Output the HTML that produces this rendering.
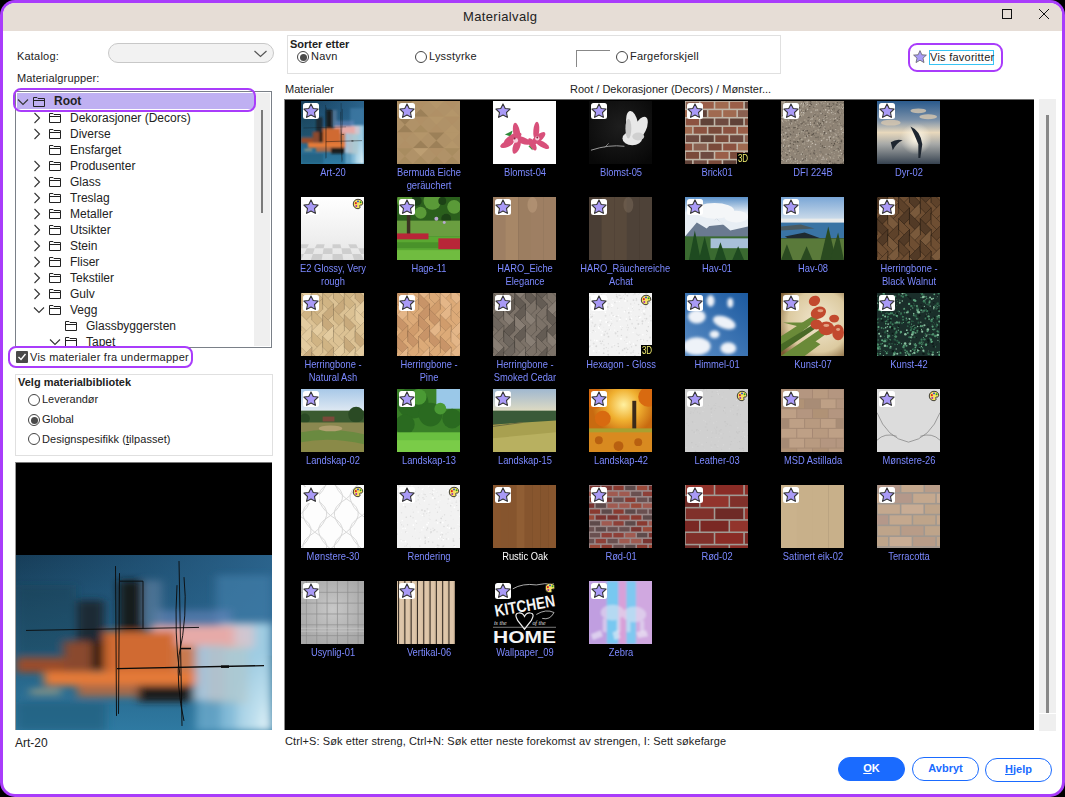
<!DOCTYPE html>
<html><head><meta charset="utf-8"><style>
*{margin:0;padding:0;box-sizing:border-box}
html,body{width:1065px;height:797px;overflow:hidden;background:#000;font-family:"Liberation Sans", sans-serif;}
.win{position:absolute;left:0;top:0;width:1065px;height:797px;background:#a93cfb;border-radius:15px;}
.inner{position:absolute;left:3px;top:3px;width:1059px;height:791px;background:#fff;border-radius:12px;overflow:hidden}
.tbar{position:absolute;left:0;top:0;width:1059px;height:28px;background:#e6ddd6}
.a{position:absolute}
.t11{font-size:11px;color:#222;white-space:nowrap;position:absolute}
.th{position:absolute;width:63px;height:63px;overflow:hidden}
.st{position:absolute;left:2px;top:2px;width:16px;height:16px}
.d3{position:absolute;right:0;bottom:0;width:11px;height:11px;background:#000;color:#f4f070;font-size:10px;line-height:11px;text-align:center;font-family:"Liberation Sans", sans-serif}
.lb{position:absolute;width:96px;text-align:center;font-size:11px;line-height:13px;white-space:nowrap;transform:scaleX(0.85)}
.ic{position:absolute}
svg{display:block}
.tt{position:absolute;font-size:12px;line-height:16px;color:#222;white-space:nowrap}
.radio{position:absolute;width:12px;height:12px;border:1px solid #444;border-radius:50%;background:#fff}
.radio.on::after{content:"";position:absolute;left:1.5px;top:1.5px;width:7px;height:7px;border-radius:50%;background:#4a4a4a}
.btn{position:absolute;height:24px;border-radius:12px;font-size:11px;font-weight:bold;text-align:center;line-height:21px}
</style></head><body>
<div class="win"></div>
<div class="inner" style="left:3px;top:3px">
  <div class="tbar"></div>
</div>
<div class="a" style="left:0;top:0;width:1065px;height:797px">
  <div class="a" style="left:463px;top:9px;font-size:13px;color:#222;letter-spacing:0.35px">Materialvalg</div>
  <div class="a" style="left:1002px;top:9px;width:10px;height:10px;border:1px solid #111"></div>
  <svg class="a" style="left:1038px;top:8px" width="12" height="12" viewBox="0 0 12 12"><path d="M1 1 L11 11 M11 1 L1 11" stroke="#111" stroke-width="1"/></svg>

  <div class="t11" style="left:17px;top:50px;font-size:11px;letter-spacing:0.2px">Katalog:</div>
  <div class="a" style="left:108px;top:43px;width:166px;height:20px;border:1px solid #c8c8c8;border-radius:10px;background:#f2f2f2"></div>
  <svg class="a" style="left:254px;top:50px" width="13" height="8" viewBox="0 0 13 8"><path d="M0.5 1 L6.5 6.5 L12.5 1" fill="none" stroke="#555" stroke-width="1.2"/></svg>
  <div class="t11" style="left:17px;top:72px;font-size:11px;letter-spacing:0.15px">Materialgrupper:</div>

  <div class="a" style="left:15px;top:91px;width:257px;height:257px;border:1px solid #7a8088;background:#fff;overflow:hidden"></div>
  <div class="a" style="left:254px;top:93px;width:16px;height:253px;background:#efefef"></div>
  <div class="a" style="left:261px;top:110px;width:2px;height:103px;background:#7a7a7a"></div>
  <div class="a" style="left:17px;top:93px;width:237px;height:16px;background:#bfb0f2"></div>
  <div class="a" style="left:13px;top:88px;width:243px;height:24px;border:2px solid #a93cfb;border-radius:8px"></div>
  <div class="ic" style="left:17px;top:98px"><svg width="12" height="8" viewBox="0 0 12 8"><path d="M1 1.5 L6 6.5 L11 1.5" fill="none" stroke="#333" stroke-width="1.1"/></svg></div>
  <div class="ic" style="left:32px;top:95px"><svg width="14" height="13" viewBox="0 0 14 13"><path d="M1.5 11.5 V2.5 H5 L6 3.5 H12.5 V11.5 Z M1.5 5.5 H12.5" fill="none" stroke="#222" stroke-width="1" stroke-linejoin="round"/></svg></div>
  <div class="tt" style="left:54px;top:93px;font-weight:bold">Root</div>
  <div class="a" style="left:17px;top:109px;width:237px;height:238px;overflow:hidden">
    <div class="a" style="left:-17px;top:-109px;width:300px;height:400px">
    <div class="ic" style="left:33px;top:112px"><svg width="8" height="12" viewBox="0 0 8 12"><path d="M1.5 1 L6.5 6 L1.5 11" fill="none" stroke="#333" stroke-width="1.1"/></svg></div><div class="ic" style="left:48px;top:111px"><svg width="14" height="13" viewBox="0 0 14 13"><path d="M1.5 11.5 V2.5 H5 L6 3.5 H12.5 V11.5 Z M1.5 5.5 H12.5" fill="none" stroke="#222" stroke-width="1" stroke-linejoin="round"/></svg></div><div class="tt" style="left:70px;top:110px">Dekorasjoner (Decors)</div><div class="ic" style="left:33px;top:128px"><svg width="8" height="12" viewBox="0 0 8 12"><path d="M1.5 1 L6.5 6 L1.5 11" fill="none" stroke="#333" stroke-width="1.1"/></svg></div><div class="ic" style="left:48px;top:127px"><svg width="14" height="13" viewBox="0 0 14 13"><path d="M1.5 11.5 V2.5 H5 L6 3.5 H12.5 V11.5 Z M1.5 5.5 H12.5" fill="none" stroke="#222" stroke-width="1" stroke-linejoin="round"/></svg></div><div class="tt" style="left:70px;top:126px">Diverse</div><div class="ic" style="left:48px;top:143px"><svg width="14" height="13" viewBox="0 0 14 13"><path d="M1.5 11.5 V2.5 H5 L6 3.5 H12.5 V11.5 Z M1.5 5.5 H12.5" fill="none" stroke="#222" stroke-width="1" stroke-linejoin="round"/></svg></div><div class="tt" style="left:70px;top:142px">Ensfarget</div><div class="ic" style="left:33px;top:160px"><svg width="8" height="12" viewBox="0 0 8 12"><path d="M1.5 1 L6.5 6 L1.5 11" fill="none" stroke="#333" stroke-width="1.1"/></svg></div><div class="ic" style="left:48px;top:159px"><svg width="14" height="13" viewBox="0 0 14 13"><path d="M1.5 11.5 V2.5 H5 L6 3.5 H12.5 V11.5 Z M1.5 5.5 H12.5" fill="none" stroke="#222" stroke-width="1" stroke-linejoin="round"/></svg></div><div class="tt" style="left:70px;top:158px">Produsenter</div><div class="ic" style="left:33px;top:176px"><svg width="8" height="12" viewBox="0 0 8 12"><path d="M1.5 1 L6.5 6 L1.5 11" fill="none" stroke="#333" stroke-width="1.1"/></svg></div><div class="ic" style="left:48px;top:175px"><svg width="14" height="13" viewBox="0 0 14 13"><path d="M1.5 11.5 V2.5 H5 L6 3.5 H12.5 V11.5 Z M1.5 5.5 H12.5" fill="none" stroke="#222" stroke-width="1" stroke-linejoin="round"/></svg></div><div class="tt" style="left:70px;top:174px">Glass</div><div class="ic" style="left:33px;top:192px"><svg width="8" height="12" viewBox="0 0 8 12"><path d="M1.5 1 L6.5 6 L1.5 11" fill="none" stroke="#333" stroke-width="1.1"/></svg></div><div class="ic" style="left:48px;top:191px"><svg width="14" height="13" viewBox="0 0 14 13"><path d="M1.5 11.5 V2.5 H5 L6 3.5 H12.5 V11.5 Z M1.5 5.5 H12.5" fill="none" stroke="#222" stroke-width="1" stroke-linejoin="round"/></svg></div><div class="tt" style="left:70px;top:190px">Treslag</div><div class="ic" style="left:33px;top:208px"><svg width="8" height="12" viewBox="0 0 8 12"><path d="M1.5 1 L6.5 6 L1.5 11" fill="none" stroke="#333" stroke-width="1.1"/></svg></div><div class="ic" style="left:48px;top:207px"><svg width="14" height="13" viewBox="0 0 14 13"><path d="M1.5 11.5 V2.5 H5 L6 3.5 H12.5 V11.5 Z M1.5 5.5 H12.5" fill="none" stroke="#222" stroke-width="1" stroke-linejoin="round"/></svg></div><div class="tt" style="left:70px;top:206px">Metaller</div><div class="ic" style="left:33px;top:224px"><svg width="8" height="12" viewBox="0 0 8 12"><path d="M1.5 1 L6.5 6 L1.5 11" fill="none" stroke="#333" stroke-width="1.1"/></svg></div><div class="ic" style="left:48px;top:223px"><svg width="14" height="13" viewBox="0 0 14 13"><path d="M1.5 11.5 V2.5 H5 L6 3.5 H12.5 V11.5 Z M1.5 5.5 H12.5" fill="none" stroke="#222" stroke-width="1" stroke-linejoin="round"/></svg></div><div class="tt" style="left:70px;top:222px">Utsikter</div><div class="ic" style="left:33px;top:240px"><svg width="8" height="12" viewBox="0 0 8 12"><path d="M1.5 1 L6.5 6 L1.5 11" fill="none" stroke="#333" stroke-width="1.1"/></svg></div><div class="ic" style="left:48px;top:239px"><svg width="14" height="13" viewBox="0 0 14 13"><path d="M1.5 11.5 V2.5 H5 L6 3.5 H12.5 V11.5 Z M1.5 5.5 H12.5" fill="none" stroke="#222" stroke-width="1" stroke-linejoin="round"/></svg></div><div class="tt" style="left:70px;top:238px">Stein</div><div class="ic" style="left:33px;top:256px"><svg width="8" height="12" viewBox="0 0 8 12"><path d="M1.5 1 L6.5 6 L1.5 11" fill="none" stroke="#333" stroke-width="1.1"/></svg></div><div class="ic" style="left:48px;top:255px"><svg width="14" height="13" viewBox="0 0 14 13"><path d="M1.5 11.5 V2.5 H5 L6 3.5 H12.5 V11.5 Z M1.5 5.5 H12.5" fill="none" stroke="#222" stroke-width="1" stroke-linejoin="round"/></svg></div><div class="tt" style="left:70px;top:254px">Fliser</div><div class="ic" style="left:33px;top:272px"><svg width="8" height="12" viewBox="0 0 8 12"><path d="M1.5 1 L6.5 6 L1.5 11" fill="none" stroke="#333" stroke-width="1.1"/></svg></div><div class="ic" style="left:48px;top:271px"><svg width="14" height="13" viewBox="0 0 14 13"><path d="M1.5 11.5 V2.5 H5 L6 3.5 H12.5 V11.5 Z M1.5 5.5 H12.5" fill="none" stroke="#222" stroke-width="1" stroke-linejoin="round"/></svg></div><div class="tt" style="left:70px;top:270px">Tekstiler</div><div class="ic" style="left:33px;top:288px"><svg width="8" height="12" viewBox="0 0 8 12"><path d="M1.5 1 L6.5 6 L1.5 11" fill="none" stroke="#333" stroke-width="1.1"/></svg></div><div class="ic" style="left:48px;top:287px"><svg width="14" height="13" viewBox="0 0 14 13"><path d="M1.5 11.5 V2.5 H5 L6 3.5 H12.5 V11.5 Z M1.5 5.5 H12.5" fill="none" stroke="#222" stroke-width="1" stroke-linejoin="round"/></svg></div><div class="tt" style="left:70px;top:286px">Gulv</div><div class="ic" style="left:33px;top:306px"><svg width="12" height="8" viewBox="0 0 12 8"><path d="M1 1.5 L6 6.5 L11 1.5" fill="none" stroke="#333" stroke-width="1.1"/></svg></div><div class="ic" style="left:48px;top:303px"><svg width="14" height="13" viewBox="0 0 14 13"><path d="M1.5 11.5 V2.5 H5 L6 3.5 H12.5 V11.5 Z M1.5 5.5 H12.5" fill="none" stroke="#222" stroke-width="1" stroke-linejoin="round"/></svg></div><div class="tt" style="left:70px;top:302px">Vegg</div><div class="ic" style="left:64px;top:319px"><svg width="14" height="13" viewBox="0 0 14 13"><path d="M1.5 11.5 V2.5 H5 L6 3.5 H12.5 V11.5 Z M1.5 5.5 H12.5" fill="none" stroke="#222" stroke-width="1" stroke-linejoin="round"/></svg></div><div class="tt" style="left:86px;top:318px">Glassbyggersten</div><div class="ic" style="left:49px;top:338px"><svg width="12" height="8" viewBox="0 0 12 8"><path d="M1 1.5 L6 6.5 L11 1.5" fill="none" stroke="#333" stroke-width="1.1"/></svg></div><div class="ic" style="left:64px;top:335px"><svg width="14" height="13" viewBox="0 0 14 13"><path d="M1.5 11.5 V2.5 H5 L6 3.5 H12.5 V11.5 Z M1.5 5.5 H12.5" fill="none" stroke="#222" stroke-width="1" stroke-linejoin="round"/></svg></div><div class="tt" style="left:86px;top:334px">Tapet</div>
    </div>
  </div>

  <div class="a" style="left:16px;top:351px;width:12px;height:12px;background:#4a4a4a;border-radius:1px"></div>
  <svg class="a" style="left:17px;top:352px" width="10" height="10" viewBox="0 0 10 10"><path d="M1.5 5 L4 7.5 L8.5 2" fill="none" stroke="#fff" stroke-width="1.4"/></svg>
  <div class="tt" style="left:30px;top:349px;font-size:11px;letter-spacing:0.25px">Vis materialer fra undermapper</div>
  <div class="a" style="left:8px;top:346px;width:185px;height:22px;border:2px solid #a93cfb;border-radius:8px"></div>

  <div class="a" style="left:15px;top:374px;width:258px;height:82px;border:1px solid #e0e0e0"></div>
  <div class="a" style="left:18px;top:376px;font-size:11px;font-weight:bold;color:#222">Velg materialbibliotek</div>
  <div class="radio" style="left:28px;top:394px"></div>
  <div class="tt" style="left:42px;top:391px;font-size:11px">Leverandør</div>
  <div class="radio on" style="left:28px;top:414px"></div>
  <div class="tt" style="left:42px;top:411px;font-size:11px">Global</div>
  <div class="radio" style="left:28px;top:433px"></div>
  <div class="tt" style="left:42px;top:431px;font-size:11px;letter-spacing:0.05px">Designspesifikk (<u>t</u>ilpasset)</div>

  <div class="a" style="left:15px;top:462px;width:257px;height:268px;background:#000;border-top:1px solid #777;border-left:1px solid #999;overflow:hidden">
    <div class="a" style="left:0px;top:92px;width:256px;height:176px"><svg width="256" height="176" viewBox="0 0 256 175" preserveAspectRatio="none"><defs><filter id="blpv" x="0" y="0" width="256" height="175" filterUnits="userSpaceOnUse"><feGaussianBlur stdDeviation="5 3.5"/></filter>
<linearGradient id="bgpv" x1="0" y1="0" x2="0" y2="1"><stop offset="0" stop-color="#173d58"/><stop offset="0.35" stop-color="#1f5272"/><stop offset="1" stop-color="#2f7aa2"/></linearGradient>
<linearGradient id="bhpv" x1="0" y1="0" x2="1" y2="0"><stop offset="0" stop-color="#2a6a98" stop-opacity="0"/><stop offset="1" stop-color="#2f6c98" stop-opacity="0.8"/></linearGradient>
<radialGradient id="lbpv" cx="1" cy="1" r="0.75"><stop offset="0" stop-color="#eef8fc"/><stop offset="0.45" stop-color="#bfe0ee"/><stop offset="1" stop-color="#9fcce2"/></radialGradient></defs><rect width="256" height="175" fill="url(#bgpv)"/>
<rect width="256" height="100" fill="url(#bhpv)"/>
<g filter="url(#blpv)">
<rect x="200" y="20" width="56" height="50" fill="#4482ae" opacity="0.6"/>
<rect x="140" y="55" width="75" height="17" fill="#6f88c0" opacity="0.55"/>
<rect x="126" y="25" width="20" height="45" fill="#7a90b0" opacity="0.45"/>
<rect x="0" y="30" width="60" height="70" fill="#183e50" opacity="0.4"/>
<rect x="205" y="68" width="51" height="107" fill="url(#lbpv)"/>
<rect x="135" y="70" width="85" height="22" fill="#e6aaa8"/>
<rect x="218" y="70" width="20" height="22" fill="#dcc4cc" opacity="0.8"/>
<rect x="178" y="90" width="32" height="55" fill="#a6c2d8"/>
<rect x="180" y="145" width="40" height="30" fill="#78b4d4" opacity="0.7"/>
<rect x="192" y="88" width="40" height="60" fill="#d0c0a8" opacity="0.25"/>
<rect x="61" y="45" width="27" height="70" fill="#1a2a34"/>
<rect x="103" y="25" width="24" height="51" fill="#121a1e"/>
<rect x="0" y="102" width="50" height="15" fill="#9a4c2a"/>
<rect x="48" y="86" width="28" height="30" fill="#8a4a2e"/>
<rect x="88" y="76" width="72" height="42" fill="#d06a30"/><rect x="158" y="90" width="22" height="28" fill="#c87a50"/>
<rect x="76" y="86" width="12" height="28" fill="#1a1410"/>
<rect x="28" y="116" width="152" height="14" fill="#e57a38"/>
<rect x="61" y="129" width="117" height="12" fill="#a86a48"/>
<rect x="122" y="130" width="56" height="16" fill="#1a1a1a"/>
<rect x="14" y="134" width="31" height="4" fill="#b8a880"/>
<rect x="0" y="146" width="90" height="29" fill="#1f5a78" opacity="0.6"/>
</g>
<g stroke="#0a0a0a" fill="none" stroke-width="0.9">
<path d="M99.5 11 L100.5 160 M103.5 18 L102.5 158"/>
<path d="M163 6 L166 170 M168 22 Q172 60 163 100 Q160 130 168 165 M161 30 Q158 80 164 120"/>
<path d="M10 75 L183 72"/>
<path d="M101 113 L248 110" stroke-width="1.4"/>
<path d="M205 111 L213 111" stroke-width="2.5"/>
<path d="M104 26 L127 26 L127 73"/>
<path d="M165 93 L175 93" stroke-width="1.5"/>
</g></svg></div>
  </div>
  <div class="tt" style="left:15px;top:735px">Art-20</div>

  <div class="a" style="left:287px;top:35px;width:494px;height:39px;border:1px solid #e0e0e0"></div>
  <div class="a" style="left:290px;top:38px;font-size:11px;font-weight:bold;color:#222">Sorter etter</div>
  <div class="radio on" style="left:297px;top:51px"></div>
  <div class="tt" style="left:311px;top:48px;font-size:11px;letter-spacing:0.2px">Navn</div>
  <div class="radio" style="left:415px;top:51px"></div>
  <div class="tt" style="left:429px;top:48px;font-size:11px;letter-spacing:0.2px">Lysstyrke</div>
  <div class="a" style="left:576px;top:50px;width:34px;height:17px;border-top:1px solid #888;border-left:1px solid #888"></div>
  <div class="radio" style="left:616px;top:51px"></div>
  <div class="tt" style="left:630px;top:48px;font-size:11px;letter-spacing:0.2px">Fargeforskjell</div>

  <svg class="a" style="left:912px;top:49px" width="16" height="16" viewBox="0 0 16 16"><path d="M8 1.6 L9.9 5.8 L14.4 6.1 L11 9.1 L12 13.6 L8 11.2 L4 13.6 L5 9.1 L1.6 6.1 L6.1 5.8 Z" fill="#a99cf6" stroke="#555" stroke-width="0.7" stroke-linejoin="round"/></svg>
  <div class="a" style="left:929px;top:50px;width:65px;height:15px;border:1px solid #38c4f4"></div>
  <div class="tt" style="left:930px;top:49px;font-size:11px;letter-spacing:0.25px">Vis favoritter</div>
  <div class="a" style="left:908px;top:43px;width:95px;height:29px;border:2px solid #a93cfb;border-radius:9px"></div>

  <div class="tt" style="left:285px;top:81px;font-size:11px">Materialer</div>
  <div class="tt" style="left:570px;top:81px;font-size:11px">Root / Dekorasjoner (Decors) / Mønster...</div>

  <div class="a" style="left:284px;top:99px;width:750px;height:631px;background:#000;border-top:1px solid #707070;border-left:1px solid #8a8a8a;overflow:hidden">
    <div class="a" style="left:-285px;top:-100px;width:1065px;height:797px">
    <div class="th" style="left:301px;top:101px"><svg width="63" height="63" viewBox="0 0 256 175" preserveAspectRatio="none"><defs><filter id="bl0" x="0" y="0" width="256" height="175" filterUnits="userSpaceOnUse"><feGaussianBlur stdDeviation="5 3.5"/></filter>
<linearGradient id="bg0" x1="0" y1="0" x2="0" y2="1"><stop offset="0" stop-color="#173d58"/><stop offset="0.35" stop-color="#1f5272"/><stop offset="1" stop-color="#2f7aa2"/></linearGradient>
<linearGradient id="bh0" x1="0" y1="0" x2="1" y2="0"><stop offset="0" stop-color="#2a6a98" stop-opacity="0"/><stop offset="1" stop-color="#2f6c98" stop-opacity="0.8"/></linearGradient>
<radialGradient id="lb0" cx="1" cy="1" r="0.75"><stop offset="0" stop-color="#eef8fc"/><stop offset="0.45" stop-color="#bfe0ee"/><stop offset="1" stop-color="#9fcce2"/></radialGradient></defs><rect width="256" height="175" fill="url(#bg0)"/>
<rect width="256" height="100" fill="url(#bh0)"/>
<g filter="url(#bl0)">
<rect x="200" y="20" width="56" height="50" fill="#4482ae" opacity="0.6"/>
<rect x="140" y="55" width="75" height="17" fill="#6f88c0" opacity="0.55"/>
<rect x="126" y="25" width="20" height="45" fill="#7a90b0" opacity="0.45"/>
<rect x="0" y="30" width="60" height="70" fill="#183e50" opacity="0.4"/>
<rect x="205" y="68" width="51" height="107" fill="url(#lb0)"/>
<rect x="135" y="70" width="85" height="22" fill="#e6aaa8"/>
<rect x="218" y="70" width="20" height="22" fill="#dcc4cc" opacity="0.8"/>
<rect x="178" y="90" width="32" height="55" fill="#a6c2d8"/>
<rect x="180" y="145" width="40" height="30" fill="#78b4d4" opacity="0.7"/>
<rect x="192" y="88" width="40" height="60" fill="#d0c0a8" opacity="0.25"/>
<rect x="61" y="45" width="27" height="70" fill="#1a2a34"/>
<rect x="103" y="25" width="24" height="51" fill="#121a1e"/>
<rect x="0" y="102" width="50" height="15" fill="#9a4c2a"/>
<rect x="48" y="86" width="28" height="30" fill="#8a4a2e"/>
<rect x="88" y="76" width="72" height="42" fill="#d06a30"/><rect x="158" y="90" width="22" height="28" fill="#c87a50"/>
<rect x="76" y="86" width="12" height="28" fill="#1a1410"/>
<rect x="28" y="116" width="152" height="14" fill="#e57a38"/>
<rect x="61" y="129" width="117" height="12" fill="#a86a48"/>
<rect x="122" y="130" width="56" height="16" fill="#1a1a1a"/>
<rect x="14" y="134" width="31" height="4" fill="#b8a880"/>
<rect x="0" y="146" width="90" height="29" fill="#1f5a78" opacity="0.6"/>
</g>
<g stroke="#0a0a0a" fill="none" stroke-width="0.9">
<path d="M99.5 11 L100.5 160 M103.5 18 L102.5 158"/>
<path d="M163 6 L166 170 M168 22 Q172 60 163 100 Q160 130 168 165 M161 30 Q158 80 164 120"/>
<path d="M10 75 L183 72"/>
<path d="M101 113 L248 110" stroke-width="1.4"/>
<path d="M205 111 L213 111" stroke-width="2.5"/>
<path d="M104 26 L127 26 L127 73"/>
<path d="M165 93 L175 93" stroke-width="1.5"/>
</g></svg><div class="st"><svg width="16" height="16" viewBox="0 0 16 16"><rect x="0" y="0" width="16" height="16" rx="2.5" fill="#fff"/><path d="M8 0.9 L10.23 5.5 L15.1 6.05 L11.5 9.5 L12.4 14.4 L8 12.0 L3.6 14.4 L4.5 9.5 L0.9 6.05 L5.77 5.5 Z" fill="#a99af6" stroke="#333" stroke-width="1.05" stroke-linejoin="round"/></svg></div></div><div class="lb" style="left:284.5px;top:166px;color:#7b88ff">Art-20</div><div class="th" style="left:397px;top:101px"><svg width="63" height="63" viewBox="0 0 64 64" preserveAspectRatio="none"><rect width="64" height="64" fill="#b09268"/><polygon points="0,0 16,0 8,8" fill="#9c8058"/><polygon points="0,16 16,16 8,8" fill="#b09066"/><polygon points="0,16 16,16 8,24" fill="#9c8058"/><polygon points="0,32 16,32 8,24" fill="#9c8058"/><polygon points="0,32 16,32 8,40" fill="#b09066"/><polygon points="0,48 16,48 8,40" fill="#b09066"/><polygon points="0,48 16,48 8,56" fill="#a88c60"/><polygon points="0,64 16,64 8,56" fill="#a88c60"/><polygon points="16,0 32,0 24,8" fill="#b09066"/><polygon points="16,16 32,16 24,8" fill="#9c8058"/><polygon points="16,16 32,16 24,24" fill="#b09066"/><polygon points="16,32 32,32 24,24" fill="#a88c60"/><polygon points="16,32 32,32 24,40" fill="#b4966a"/><polygon points="16,48 32,48 24,40" fill="#9c8058"/><polygon points="16,48 32,48 24,56" fill="#bc9e72"/><polygon points="16,64 32,64 24,56" fill="#a88c60"/><polygon points="32,0 48,0 40,8" fill="#b4966a"/><polygon points="32,16 48,16 40,8" fill="#b09066"/><polygon points="32,16 48,16 40,24" fill="#b4966a"/><polygon points="32,32 48,32 40,24" fill="#b09066"/><polygon points="32,32 48,32 40,40" fill="#9c8058"/><polygon points="32,48 48,48 40,40" fill="#9c8058"/><polygon points="32,48 48,48 40,56" fill="#b09066"/><polygon points="32,64 48,64 40,56" fill="#a88c60"/><polygon points="48,0 64,0 56,8" fill="#b09066"/><polygon points="48,16 64,16 56,8" fill="#b4966a"/><polygon points="48,16 64,16 56,24" fill="#b09066"/><polygon points="48,32 64,32 56,24" fill="#b4966a"/><polygon points="48,32 64,32 56,40" fill="#b4966a"/><polygon points="48,48 64,48 56,40" fill="#b4966a"/><polygon points="48,48 64,48 56,56" fill="#a88c60"/><polygon points="48,64 64,64 56,56" fill="#a88c60"/></svg><div class="st"><svg width="16" height="16" viewBox="0 0 16 16"><rect x="0" y="0" width="16" height="16" rx="2.5" fill="#fff"/><path d="M8 0.9 L10.23 5.5 L15.1 6.05 L11.5 9.5 L12.4 14.4 L8 12.0 L3.6 14.4 L4.5 9.5 L0.9 6.05 L5.77 5.5 Z" fill="#a99af6" stroke="#333" stroke-width="1.05" stroke-linejoin="round"/></svg></div></div><div class="lb" style="left:380.5px;top:166px;color:#7b88ff">Bermuda Eiche<br>geräuchert</div><div class="th" style="left:493px;top:101px"><svg width="63" height="63" viewBox="0 0 64 64" preserveAspectRatio="none"><rect width="64" height="64" fill="#fff"/>
<path d="M12 34 L20 30 L18 36 Z" fill="#2f8a3a"/>
<path d="M36 46 L42 42 L40 50 Z" fill="#3a9a44"/>
<g fill="#d8507a">
<ellipse cx="20" cy="38" rx="10" ry="4" transform="rotate(-30 20 38)"/>
<ellipse cx="24" cy="32" rx="3.5" ry="10" transform="rotate(-10 24 32)"/>
<ellipse cx="30" cy="40" rx="9" ry="3.5" transform="rotate(20 30 40)"/>
<ellipse cx="24" cy="46" rx="3.5" ry="8" transform="rotate(20 24 46)"/>
<ellipse cx="14" cy="44" rx="7" ry="3" transform="rotate(-20 14 44)"/>
<ellipse cx="46" cy="38" rx="9" ry="3.5" transform="rotate(-40 46 38)"/>
<ellipse cx="44" cy="30" rx="3" ry="9" transform="rotate(5 44 30)"/>
<ellipse cx="50" cy="44" rx="8" ry="3" transform="rotate(30 50 44)"/>
<ellipse cx="40" cy="44" rx="3" ry="7" transform="rotate(-30 40 44)"/>
</g>
<g fill="#f6d0dc"><circle cx="23" cy="40" r="2.5"/><circle cx="45" cy="38" r="2.2"/></g>
<g fill="#8a2040"><circle cx="22" cy="38" r="1"/><circle cx="45" cy="37" r="1"/></g></svg><div class="st"><svg width="16" height="16" viewBox="0 0 16 16"><rect x="0" y="0" width="16" height="16" rx="2.5" fill="#fff"/><path d="M8 0.9 L10.23 5.5 L15.1 6.05 L11.5 9.5 L12.4 14.4 L8 12.0 L3.6 14.4 L4.5 9.5 L0.9 6.05 L5.77 5.5 Z" fill="#a99af6" stroke="#333" stroke-width="1.05" stroke-linejoin="round"/></svg></div></div><div class="lb" style="left:476.5px;top:166px;color:#7b88ff">Blomst-04</div><div class="th" style="left:589px;top:101px"><svg width="63" height="63" viewBox="0 0 64 64" preserveAspectRatio="none"><defs><radialGradient id="b5g" cx="0.5" cy="0.4" r="0.7"><stop offset="0" stop-color="#1e1e1e"/><stop offset="1" stop-color="#080808"/></radialGradient></defs>
<rect width="64" height="64" fill="url(#b5g)"/>
<path d="M2 50 Q20 44 36 46" stroke="#9a9a9a" stroke-width="1" fill="none"/>
<path d="M16 47 L20 43" stroke="#9a9a9a" stroke-width="0.8"/>
<g fill="#e8e8e8">
<ellipse cx="44" cy="24" rx="6" ry="14" transform="rotate(-10 44 24)"/>
<ellipse cx="52" cy="28" rx="6" ry="13" transform="rotate(25 52 28)"/>
<ellipse cx="44" cy="38" rx="10" ry="7"/>
</g>
<ellipse cx="40" cy="28" rx="3" ry="10" fill="#c8c8c8"/>
<ellipse cx="50" cy="36" rx="6" ry="4" fill="#d0d0d0"/></svg><div class="st"><svg width="16" height="16" viewBox="0 0 16 16"><rect x="0" y="0" width="16" height="16" rx="2.5" fill="#fff"/><path d="M8 0.9 L10.23 5.5 L15.1 6.05 L11.5 9.5 L12.4 14.4 L8 12.0 L3.6 14.4 L4.5 9.5 L0.9 6.05 L5.77 5.5 Z" fill="#a99af6" stroke="#333" stroke-width="1.05" stroke-linejoin="round"/></svg></div></div><div class="lb" style="left:572.5px;top:166px;color:#7b88ff">Blomst-05</div><div class="th" style="left:685px;top:101px"><svg width="63" height="63" viewBox="0 0 64 64" preserveAspectRatio="none"><rect width="64" height="64" fill="#c0b6a8"/><rect x="0.8" y="0.8" width="13.4" height="6.9" fill="#8a6050"/><rect x="15.8" y="0.8" width="13.4" height="6.9" fill="#9a5e48"/><rect x="30.8" y="0.8" width="13.4" height="6.9" fill="#a06a50"/><rect x="45.8" y="0.8" width="13.4" height="6.9" fill="#9a5e48"/><rect x="60.8" y="0.8" width="13.4" height="6.9" fill="#604238"/><rect x="-6.2" y="9.3" width="13.4" height="6.9" fill="#a06a50"/><rect x="8.8" y="9.3" width="13.4" height="6.9" fill="#604238"/><rect x="23.8" y="9.3" width="13.4" height="6.9" fill="#a06a50"/><rect x="38.8" y="9.3" width="13.4" height="6.9" fill="#a06a50"/><rect x="53.8" y="9.3" width="13.4" height="6.9" fill="#8a6050"/><rect x="0.8" y="17.8" width="13.4" height="6.9" fill="#8c5240"/><rect x="15.8" y="17.8" width="13.4" height="6.9" fill="#604238"/><rect x="30.8" y="17.8" width="13.4" height="6.9" fill="#6e4a40"/><rect x="45.8" y="17.8" width="13.4" height="6.9" fill="#604238"/><rect x="60.8" y="17.8" width="13.4" height="6.9" fill="#7a4a3a"/><rect x="-6.2" y="26.3" width="13.4" height="6.9" fill="#a06a50"/><rect x="8.8" y="26.3" width="13.4" height="6.9" fill="#8c5240"/><rect x="23.8" y="26.3" width="13.4" height="6.9" fill="#7a4a3a"/><rect x="38.8" y="26.3" width="13.4" height="6.9" fill="#8c5240"/><rect x="53.8" y="26.3" width="13.4" height="6.9" fill="#9a5e48"/><rect x="0.8" y="34.8" width="13.4" height="6.9" fill="#6e4a40"/><rect x="15.8" y="34.8" width="13.4" height="6.9" fill="#604238"/><rect x="30.8" y="34.8" width="13.4" height="6.9" fill="#7a4a3a"/><rect x="45.8" y="34.8" width="13.4" height="6.9" fill="#6e4a40"/><rect x="60.8" y="34.8" width="13.4" height="6.9" fill="#8a6050"/><rect x="-6.2" y="43.3" width="13.4" height="6.9" fill="#8c5240"/><rect x="8.8" y="43.3" width="13.4" height="6.9" fill="#8a6050"/><rect x="23.8" y="43.3" width="13.4" height="6.9" fill="#7a4a3a"/><rect x="38.8" y="43.3" width="13.4" height="6.9" fill="#8c5240"/><rect x="53.8" y="43.3" width="13.4" height="6.9" fill="#a06a50"/><rect x="0.8" y="51.8" width="13.4" height="6.9" fill="#7a4a3a"/><rect x="15.8" y="51.8" width="13.4" height="6.9" fill="#6e4a40"/><rect x="30.8" y="51.8" width="13.4" height="6.9" fill="#9a5e48"/><rect x="45.8" y="51.8" width="13.4" height="6.9" fill="#7a4a3a"/><rect x="60.8" y="51.8" width="13.4" height="6.9" fill="#604238"/><rect x="-6.2" y="60.3" width="13.4" height="6.9" fill="#604238"/><rect x="8.8" y="60.3" width="13.4" height="6.9" fill="#6e4a40"/><rect x="23.8" y="60.3" width="13.4" height="6.9" fill="#7a4a3a"/><rect x="38.8" y="60.3" width="13.4" height="6.9" fill="#604238"/><rect x="53.8" y="60.3" width="13.4" height="6.9" fill="#604238"/></svg><div class="st"><svg width="16" height="16" viewBox="0 0 16 16"><rect x="0" y="0" width="16" height="16" rx="2.5" fill="#fff"/><path d="M8 0.9 L10.23 5.5 L15.1 6.05 L11.5 9.5 L12.4 14.4 L8 12.0 L3.6 14.4 L4.5 9.5 L0.9 6.05 L5.77 5.5 Z" fill="#a99af6" stroke="#333" stroke-width="1.05" stroke-linejoin="round"/></svg></div><div class="d3"><span style="display:block;width:20px;margin-left:-4.5px;text-align:center;transform:scaleX(0.8)">3D</span></div></div><div class="lb" style="left:668.5px;top:166px;color:#7b88ff">Brick01</div><div class="th" style="left:781px;top:101px"><svg width="63" height="63" viewBox="0 0 64 64" preserveAspectRatio="none"><rect width="64" height="64" fill="#8f8476"/><circle cx="20.7" cy="9.7" r="0.7" fill="#6a6258"/><circle cx="52.6" cy="6.0" r="0.6" fill="#a89a88"/><circle cx="13.7" cy="5.5" r="0.6" fill="#b0a898"/><circle cx="5.8" cy="27.2" r="0.7" fill="#6a6258"/><circle cx="60.6" cy="40.4" r="0.6" fill="#6a6258"/><circle cx="36.9" cy="25.4" r="0.8" fill="#6a6258"/><circle cx="35.6" cy="8.5" r="0.6" fill="#a89a88"/><circle cx="7.5" cy="19.7" r="0.7" fill="#b0a898"/><circle cx="6.6" cy="36.6" r="0.5" fill="#6a6258"/><circle cx="35.1" cy="4.0" r="0.4" fill="#b0a898"/><circle cx="31.8" cy="34.0" r="0.7" fill="#5a5248"/><circle cx="37.5" cy="29.0" r="0.5" fill="#b0a898"/><circle cx="44.7" cy="15.6" r="0.6" fill="#a89a88"/><circle cx="31.7" cy="22.0" r="0.6" fill="#a89a88"/><circle cx="62.7" cy="7.6" r="0.6" fill="#c8c0b4"/><circle cx="9.7" cy="31.3" r="0.4" fill="#6a6258"/><circle cx="48.9" cy="36.7" r="0.8" fill="#c8c0b4"/><circle cx="21.8" cy="22.4" r="0.6" fill="#5a5248"/><circle cx="4.4" cy="6.0" r="0.5" fill="#6a6258"/><circle cx="3.9" cy="44.9" r="0.7" fill="#5a5248"/><circle cx="18.2" cy="24.7" r="0.7" fill="#6a6258"/><circle cx="60.2" cy="22.7" r="0.6" fill="#5a5248"/><circle cx="3.8" cy="49.2" r="0.5" fill="#b0a898"/><circle cx="25.5" cy="58.7" r="0.6" fill="#b0a898"/><circle cx="28.7" cy="35.2" r="0.8" fill="#5a5248"/><circle cx="55.3" cy="17.8" r="0.6" fill="#c8c0b4"/><circle cx="43.7" cy="24.3" r="0.5" fill="#6a6258"/><circle cx="11.3" cy="14.8" r="0.5" fill="#5a5248"/><circle cx="53.2" cy="11.7" r="0.5" fill="#b0a898"/><circle cx="26.8" cy="23.6" r="0.6" fill="#b0a898"/><circle cx="44.2" cy="33.0" r="0.6" fill="#6a6258"/><circle cx="29.2" cy="55.7" r="0.8" fill="#a89a88"/><circle cx="25.1" cy="25.5" r="0.4" fill="#5a5248"/><circle cx="4.0" cy="4.3" r="0.5" fill="#b0a898"/><circle cx="7.0" cy="38.4" r="0.4" fill="#a89a88"/><circle cx="9.7" cy="6.5" r="0.5" fill="#6a6258"/><circle cx="4.5" cy="13.3" r="0.6" fill="#c8c0b4"/><circle cx="61.1" cy="38.5" r="0.6" fill="#6a6258"/><circle cx="54.3" cy="63.6" r="0.6" fill="#5a5248"/><circle cx="20.0" cy="9.2" r="0.7" fill="#c8c0b4"/><circle cx="30.6" cy="44.3" r="0.6" fill="#b0a898"/><circle cx="60.9" cy="33.8" r="0.5" fill="#a89a88"/><circle cx="58.5" cy="48.5" r="0.5" fill="#6a6258"/><circle cx="44.6" cy="16.7" r="0.5" fill="#b0a898"/><circle cx="22.8" cy="14.3" r="0.6" fill="#a89a88"/><circle cx="21.1" cy="14.3" r="0.7" fill="#b0a898"/><circle cx="51.6" cy="52.4" r="0.7" fill="#b0a898"/><circle cx="12.8" cy="31.5" r="0.7" fill="#6a6258"/><circle cx="50.6" cy="30.2" r="0.5" fill="#a89a88"/><circle cx="61.2" cy="28.6" r="0.8" fill="#c8c0b4"/><circle cx="61.1" cy="23.3" r="0.5" fill="#b0a898"/><circle cx="30.1" cy="21.6" r="0.6" fill="#a89a88"/><circle cx="53.8" cy="30.7" r="0.7" fill="#6a6258"/><circle cx="53.4" cy="7.7" r="0.6" fill="#b0a898"/><circle cx="30.6" cy="11.4" r="0.7" fill="#c8c0b4"/><circle cx="5.6" cy="60.6" r="0.7" fill="#5a5248"/><circle cx="25.7" cy="60.6" r="0.7" fill="#b0a898"/><circle cx="63.6" cy="1.8" r="0.6" fill="#5a5248"/><circle cx="51.6" cy="9.4" r="0.7" fill="#5a5248"/><circle cx="42.1" cy="22.4" r="0.6" fill="#b0a898"/><circle cx="1.4" cy="51.2" r="0.7" fill="#6a6258"/><circle cx="33.7" cy="59.8" r="0.6" fill="#b0a898"/><circle cx="52.9" cy="13.5" r="0.5" fill="#c8c0b4"/><circle cx="32.1" cy="48.9" r="0.5" fill="#a89a88"/><circle cx="26.8" cy="8.4" r="0.8" fill="#c8c0b4"/><circle cx="57.5" cy="42.4" r="0.7" fill="#a89a88"/><circle cx="26.9" cy="58.7" r="0.6" fill="#a89a88"/><circle cx="9.7" cy="32.7" r="0.7" fill="#b0a898"/><circle cx="38.9" cy="49.7" r="0.5" fill="#b0a898"/><circle cx="30.3" cy="46.4" r="0.6" fill="#c8c0b4"/><circle cx="43.7" cy="34.0" r="0.6" fill="#6a6258"/><circle cx="56.5" cy="3.6" r="0.5" fill="#6a6258"/><circle cx="49.4" cy="32.5" r="0.6" fill="#6a6258"/><circle cx="28.4" cy="39.2" r="0.6" fill="#a89a88"/><circle cx="12.8" cy="17.7" r="0.6" fill="#5a5248"/><circle cx="32.5" cy="15.8" r="0.6" fill="#c8c0b4"/><circle cx="59.1" cy="57.1" r="0.5" fill="#5a5248"/><circle cx="8.8" cy="7.8" r="0.6" fill="#6a6258"/><circle cx="43.0" cy="27.4" r="0.5" fill="#c8c0b4"/><circle cx="50.2" cy="57.4" r="0.5" fill="#c8c0b4"/><circle cx="9.2" cy="56.5" r="0.8" fill="#b0a898"/><circle cx="47.8" cy="6.0" r="0.8" fill="#b0a898"/><circle cx="63.4" cy="53.3" r="0.5" fill="#5a5248"/><circle cx="63.6" cy="25.8" r="0.6" fill="#c8c0b4"/><circle cx="20.4" cy="46.2" r="0.4" fill="#a89a88"/><circle cx="29.4" cy="45.0" r="0.6" fill="#a89a88"/><circle cx="39.9" cy="32.8" r="0.4" fill="#b0a898"/><circle cx="62.2" cy="6.7" r="0.5" fill="#6a6258"/><circle cx="58.0" cy="11.6" r="0.7" fill="#5a5248"/><circle cx="54.4" cy="43.3" r="0.8" fill="#5a5248"/><circle cx="9.6" cy="58.8" r="0.6" fill="#c8c0b4"/><circle cx="5.7" cy="3.7" r="0.7" fill="#5a5248"/><circle cx="57.3" cy="17.2" r="0.4" fill="#6a6258"/><circle cx="51.3" cy="5.4" r="0.7" fill="#6a6258"/><circle cx="16.9" cy="7.8" r="0.4" fill="#a89a88"/><circle cx="26.7" cy="58.6" r="0.6" fill="#6a6258"/><circle cx="33.7" cy="15.3" r="0.4" fill="#b0a898"/><circle cx="16.8" cy="11.6" r="0.8" fill="#c8c0b4"/><circle cx="34.0" cy="13.2" r="0.6" fill="#b0a898"/><circle cx="17.3" cy="51.4" r="0.8" fill="#6a6258"/><circle cx="1.0" cy="46.9" r="0.6" fill="#b0a898"/><circle cx="32.9" cy="15.7" r="0.6" fill="#5a5248"/><circle cx="42.0" cy="34.9" r="0.8" fill="#a89a88"/><circle cx="19.7" cy="13.8" r="0.5" fill="#b0a898"/><circle cx="53.3" cy="45.2" r="0.7" fill="#5a5248"/><circle cx="63.3" cy="62.8" r="0.7" fill="#6a6258"/><circle cx="4.5" cy="47.4" r="0.5" fill="#b0a898"/><circle cx="3.5" cy="42.6" r="0.6" fill="#a89a88"/><circle cx="42.9" cy="18.0" r="0.5" fill="#c8c0b4"/><circle cx="2.9" cy="11.9" r="0.5" fill="#6a6258"/><circle cx="16.8" cy="61.6" r="0.8" fill="#a89a88"/><circle cx="20.7" cy="2.2" r="0.8" fill="#b0a898"/><circle cx="22.8" cy="0.1" r="0.6" fill="#5a5248"/><circle cx="17.9" cy="42.0" r="0.5" fill="#6a6258"/><circle cx="5.8" cy="52.3" r="0.5" fill="#a89a88"/><circle cx="2.7" cy="1.4" r="0.5" fill="#b0a898"/><circle cx="5.4" cy="61.3" r="0.7" fill="#b0a898"/><circle cx="42.1" cy="45.8" r="0.8" fill="#5a5248"/><circle cx="48.9" cy="46.1" r="0.6" fill="#c8c0b4"/><circle cx="46.3" cy="41.2" r="0.4" fill="#a89a88"/><circle cx="40.1" cy="47.0" r="0.7" fill="#b0a898"/><circle cx="58.2" cy="48.2" r="0.6" fill="#6a6258"/><circle cx="52.9" cy="37.4" r="0.8" fill="#b0a898"/><circle cx="5.4" cy="2.7" r="0.7" fill="#6a6258"/><circle cx="24.1" cy="28.9" r="0.4" fill="#6a6258"/><circle cx="40.1" cy="43.6" r="0.6" fill="#6a6258"/><circle cx="29.2" cy="4.5" r="0.8" fill="#a89a88"/><circle cx="5.9" cy="33.7" r="0.7" fill="#5a5248"/><circle cx="16.1" cy="4.8" r="0.5" fill="#b0a898"/><circle cx="14.8" cy="41.6" r="0.6" fill="#5a5248"/><circle cx="4.9" cy="58.3" r="0.5" fill="#6a6258"/><circle cx="39.5" cy="41.1" r="0.4" fill="#b0a898"/><circle cx="21.2" cy="41.7" r="0.7" fill="#a89a88"/><circle cx="36.3" cy="0.8" r="0.4" fill="#c8c0b4"/><circle cx="62.2" cy="6.4" r="0.5" fill="#5a5248"/><circle cx="18.6" cy="33.1" r="0.6" fill="#5a5248"/><circle cx="49.1" cy="63.6" r="0.6" fill="#c8c0b4"/><circle cx="62.6" cy="59.9" r="0.4" fill="#5a5248"/><circle cx="4.9" cy="32.4" r="0.8" fill="#c8c0b4"/><circle cx="24.8" cy="58.7" r="0.8" fill="#6a6258"/><circle cx="37.2" cy="9.1" r="0.6" fill="#c8c0b4"/><circle cx="8.5" cy="52.5" r="0.6" fill="#6a6258"/><circle cx="45.0" cy="14.8" r="0.8" fill="#5a5248"/><circle cx="25.2" cy="10.2" r="0.8" fill="#5a5248"/><circle cx="25.9" cy="46.5" r="0.6" fill="#5a5248"/><circle cx="20.2" cy="53.8" r="0.4" fill="#c8c0b4"/><circle cx="53.7" cy="7.7" r="0.8" fill="#6a6258"/><circle cx="57.7" cy="18.5" r="0.5" fill="#5a5248"/><circle cx="25.0" cy="55.7" r="0.4" fill="#5a5248"/><circle cx="48.4" cy="54.7" r="0.5" fill="#6a6258"/><circle cx="53.4" cy="18.3" r="0.8" fill="#b0a898"/><circle cx="62.1" cy="27.9" r="0.5" fill="#c8c0b4"/><circle cx="50.2" cy="27.4" r="0.4" fill="#5a5248"/><circle cx="58.5" cy="60.2" r="0.6" fill="#6a6258"/><circle cx="3.2" cy="46.9" r="0.6" fill="#b0a898"/><circle cx="41.2" cy="18.3" r="0.4" fill="#a89a88"/><circle cx="8.1" cy="30.2" r="0.5" fill="#c8c0b4"/><circle cx="16.4" cy="47.3" r="0.7" fill="#5a5248"/><circle cx="42.0" cy="19.3" r="0.6" fill="#5a5248"/><circle cx="7.7" cy="41.2" r="0.4" fill="#a89a88"/><circle cx="58.0" cy="31.8" r="0.5" fill="#c8c0b4"/><circle cx="63.8" cy="28.8" r="0.5" fill="#b0a898"/><circle cx="15.6" cy="11.2" r="0.6" fill="#c8c0b4"/><circle cx="15.3" cy="16.5" r="0.6" fill="#6a6258"/><circle cx="48.0" cy="26.4" r="0.6" fill="#a89a88"/><circle cx="13.4" cy="17.3" r="0.7" fill="#5a5248"/><circle cx="17.8" cy="61.9" r="0.5" fill="#a89a88"/><circle cx="33.9" cy="50.6" r="0.7" fill="#6a6258"/><circle cx="17.3" cy="15.9" r="0.6" fill="#5a5248"/><circle cx="27.6" cy="20.0" r="0.7" fill="#6a6258"/><circle cx="8.1" cy="27.2" r="0.7" fill="#5a5248"/><circle cx="62.0" cy="31.3" r="0.4" fill="#a89a88"/><circle cx="54.7" cy="62.2" r="0.5" fill="#6a6258"/><circle cx="14.3" cy="9.7" r="0.8" fill="#6a6258"/><circle cx="60.3" cy="46.2" r="0.7" fill="#5a5248"/><circle cx="5.4" cy="49.7" r="0.4" fill="#b0a898"/><circle cx="14.9" cy="58.9" r="0.7" fill="#c8c0b4"/><circle cx="61.6" cy="40.1" r="0.6" fill="#5a5248"/><circle cx="44.7" cy="7.2" r="0.4" fill="#a89a88"/><circle cx="60.4" cy="12.3" r="0.5" fill="#a89a88"/><circle cx="0.1" cy="34.4" r="0.8" fill="#c8c0b4"/><circle cx="61.4" cy="41.3" r="0.8" fill="#5a5248"/><circle cx="33.7" cy="35.0" r="0.4" fill="#5a5248"/><circle cx="45.1" cy="19.7" r="0.4" fill="#5a5248"/><circle cx="56.6" cy="41.4" r="0.4" fill="#b0a898"/><circle cx="42.7" cy="59.2" r="0.5" fill="#6a6258"/><circle cx="44.5" cy="46.0" r="0.5" fill="#5a5248"/><circle cx="12.7" cy="51.0" r="0.7" fill="#a89a88"/><circle cx="4.3" cy="31.7" r="0.5" fill="#b0a898"/><circle cx="14.8" cy="14.2" r="0.7" fill="#c8c0b4"/><circle cx="7.0" cy="39.9" r="0.6" fill="#b0a898"/><circle cx="31.0" cy="58.3" r="0.4" fill="#a89a88"/><circle cx="9.4" cy="25.2" r="0.5" fill="#a89a88"/><circle cx="9.1" cy="3.3" r="0.4" fill="#5a5248"/><circle cx="28.8" cy="45.6" r="0.5" fill="#6a6258"/><circle cx="63.8" cy="59.6" r="0.5" fill="#b0a898"/><circle cx="41.8" cy="33.6" r="0.6" fill="#c8c0b4"/><circle cx="42.5" cy="24.2" r="0.5" fill="#c8c0b4"/><circle cx="28.3" cy="7.0" r="0.4" fill="#6a6258"/><circle cx="22.5" cy="61.2" r="0.4" fill="#b0a898"/><circle cx="24.3" cy="49.2" r="0.5" fill="#5a5248"/><circle cx="5.6" cy="45.1" r="0.5" fill="#a89a88"/><circle cx="58.8" cy="12.4" r="0.5" fill="#5a5248"/><circle cx="1.9" cy="26.3" r="0.7" fill="#5a5248"/><circle cx="2.6" cy="2.2" r="0.4" fill="#6a6258"/><circle cx="16.4" cy="47.8" r="0.8" fill="#c8c0b4"/><circle cx="23.2" cy="21.4" r="0.8" fill="#6a6258"/><circle cx="16.8" cy="45.9" r="0.5" fill="#c8c0b4"/><circle cx="19.0" cy="46.2" r="0.6" fill="#6a6258"/><circle cx="1.6" cy="15.0" r="0.6" fill="#5a5248"/><circle cx="61.1" cy="24.7" r="0.5" fill="#5a5248"/><circle cx="52.1" cy="8.5" r="0.6" fill="#6a6258"/><circle cx="51.4" cy="47.3" r="0.7" fill="#b0a898"/><circle cx="38.9" cy="21.0" r="0.5" fill="#c8c0b4"/><circle cx="50.2" cy="38.1" r="0.6" fill="#5a5248"/><circle cx="48.2" cy="15.8" r="0.4" fill="#6a6258"/><circle cx="30.8" cy="34.9" r="0.5" fill="#5a5248"/><circle cx="56.5" cy="63.2" r="0.5" fill="#6a6258"/><circle cx="13.3" cy="26.9" r="0.8" fill="#5a5248"/><circle cx="11.1" cy="8.5" r="0.6" fill="#b0a898"/><circle cx="47.9" cy="54.2" r="0.7" fill="#6a6258"/><circle cx="49.9" cy="18.8" r="0.5" fill="#c8c0b4"/><circle cx="23.9" cy="47.2" r="0.5" fill="#b0a898"/><circle cx="11.9" cy="15.1" r="0.5" fill="#a89a88"/><circle cx="12.0" cy="4.1" r="0.5" fill="#b0a898"/><circle cx="32.5" cy="14.8" r="0.7" fill="#5a5248"/><circle cx="63.4" cy="6.5" r="0.6" fill="#b0a898"/><circle cx="53.8" cy="58.5" r="0.4" fill="#c8c0b4"/><circle cx="14.9" cy="3.2" r="0.6" fill="#a89a88"/><circle cx="12.4" cy="4.8" r="0.6" fill="#b0a898"/><circle cx="28.7" cy="16.6" r="0.7" fill="#6a6258"/><circle cx="6.8" cy="38.2" r="0.6" fill="#b0a898"/><circle cx="2.4" cy="21.8" r="0.4" fill="#c8c0b4"/><circle cx="2.4" cy="46.9" r="0.8" fill="#6a6258"/><circle cx="52.4" cy="26.2" r="0.5" fill="#a89a88"/><circle cx="20.0" cy="13.0" r="0.7" fill="#a89a88"/><circle cx="30.9" cy="26.1" r="0.7" fill="#a89a88"/><circle cx="9.9" cy="34.2" r="0.7" fill="#5a5248"/><circle cx="44.5" cy="26.2" r="0.5" fill="#c8c0b4"/><circle cx="26.7" cy="3.3" r="0.7" fill="#c8c0b4"/><circle cx="26.5" cy="1.2" r="0.7" fill="#c8c0b4"/><circle cx="41.2" cy="25.0" r="0.6" fill="#6a6258"/><circle cx="27.8" cy="10.0" r="0.4" fill="#6a6258"/><circle cx="26.0" cy="56.5" r="0.6" fill="#b0a898"/><circle cx="8.3" cy="3.3" r="0.5" fill="#5a5248"/><circle cx="5.7" cy="39.8" r="0.5" fill="#a89a88"/><circle cx="11.0" cy="22.3" r="0.5" fill="#b0a898"/><circle cx="59.2" cy="7.0" r="0.6" fill="#b0a898"/><circle cx="19.3" cy="53.6" r="0.4" fill="#5a5248"/><circle cx="20.1" cy="38.9" r="0.7" fill="#6a6258"/><circle cx="57.9" cy="39.7" r="0.7" fill="#b0a898"/><circle cx="41.0" cy="54.8" r="0.6" fill="#a89a88"/><circle cx="54.2" cy="53.1" r="0.5" fill="#b0a898"/><circle cx="2.7" cy="60.1" r="0.5" fill="#c8c0b4"/><circle cx="7.9" cy="15.8" r="0.7" fill="#b0a898"/><circle cx="2.6" cy="36.0" r="0.7" fill="#6a6258"/><circle cx="42.7" cy="20.7" r="0.6" fill="#5a5248"/><circle cx="35.2" cy="40.1" r="0.5" fill="#5a5248"/><circle cx="19.7" cy="16.0" r="0.6" fill="#c8c0b4"/><circle cx="28.6" cy="28.1" r="0.4" fill="#a89a88"/><circle cx="63.1" cy="29.8" r="0.6" fill="#a89a88"/><circle cx="49.9" cy="29.3" r="0.5" fill="#5a5248"/><circle cx="25.6" cy="4.3" r="0.5" fill="#c8c0b4"/><circle cx="5.9" cy="28.3" r="0.6" fill="#6a6258"/><circle cx="2.6" cy="8.3" r="0.8" fill="#c8c0b4"/><circle cx="49.8" cy="32.7" r="0.4" fill="#a89a88"/><circle cx="57.3" cy="41.8" r="0.7" fill="#6a6258"/><circle cx="54.9" cy="63.8" r="0.7" fill="#6a6258"/><circle cx="12.4" cy="62.8" r="0.6" fill="#b0a898"/><circle cx="43.9" cy="46.1" r="0.5" fill="#c8c0b4"/><circle cx="39.1" cy="16.1" r="0.5" fill="#a89a88"/><circle cx="17.6" cy="52.2" r="0.5" fill="#a89a88"/><circle cx="61.7" cy="30.7" r="0.6" fill="#a89a88"/><circle cx="32.4" cy="20.4" r="0.4" fill="#b0a898"/><circle cx="25.8" cy="40.7" r="0.5" fill="#c8c0b4"/><circle cx="57.3" cy="10.8" r="0.7" fill="#6a6258"/><circle cx="49.2" cy="3.1" r="0.7" fill="#5a5248"/><circle cx="35.5" cy="37.1" r="0.8" fill="#6a6258"/><circle cx="16.1" cy="34.3" r="0.7" fill="#c8c0b4"/><circle cx="16.9" cy="63.4" r="0.6" fill="#c8c0b4"/><circle cx="21.2" cy="5.2" r="0.5" fill="#a89a88"/><circle cx="47.6" cy="3.1" r="0.7" fill="#c8c0b4"/><circle cx="19.8" cy="61.8" r="0.7" fill="#c8c0b4"/><circle cx="46.9" cy="47.8" r="0.5" fill="#c8c0b4"/><circle cx="39.4" cy="27.7" r="0.6" fill="#6a6258"/><circle cx="8.4" cy="14.5" r="0.7" fill="#6a6258"/><circle cx="3.5" cy="36.3" r="0.5" fill="#a89a88"/><circle cx="22.9" cy="14.4" r="0.6" fill="#a89a88"/><circle cx="8.6" cy="23.4" r="0.7" fill="#b0a898"/><circle cx="8.6" cy="59.9" r="0.5" fill="#b0a898"/><circle cx="28.9" cy="4.1" r="0.5" fill="#c8c0b4"/><circle cx="25.7" cy="16.9" r="0.4" fill="#a89a88"/><circle cx="57.1" cy="38.1" r="0.6" fill="#a89a88"/><circle cx="60.0" cy="46.9" r="0.5" fill="#6a6258"/><circle cx="2.8" cy="34.0" r="0.6" fill="#b0a898"/><circle cx="10.2" cy="58.4" r="0.4" fill="#a89a88"/><circle cx="35.3" cy="60.2" r="0.5" fill="#b0a898"/><circle cx="33.2" cy="41.1" r="0.7" fill="#5a5248"/><circle cx="52.1" cy="11.2" r="0.5" fill="#c8c0b4"/><circle cx="40.1" cy="63.6" r="0.7" fill="#5a5248"/><circle cx="45.8" cy="0.4" r="0.7" fill="#5a5248"/><circle cx="5.2" cy="42.0" r="0.5" fill="#6a6258"/><circle cx="16.7" cy="41.2" r="0.4" fill="#c8c0b4"/><circle cx="45.5" cy="17.0" r="0.6" fill="#5a5248"/><circle cx="43.9" cy="58.7" r="0.8" fill="#c8c0b4"/><circle cx="41.1" cy="61.8" r="0.5" fill="#a89a88"/><circle cx="1.0" cy="16.7" r="0.5" fill="#b0a898"/><circle cx="60.5" cy="47.8" r="0.5" fill="#5a5248"/><circle cx="21.0" cy="15.3" r="0.8" fill="#a89a88"/><circle cx="30.0" cy="53.7" r="0.7" fill="#6a6258"/><circle cx="28.0" cy="46.4" r="0.6" fill="#c8c0b4"/><circle cx="50.5" cy="25.1" r="0.6" fill="#a89a88"/><circle cx="58.3" cy="9.3" r="0.4" fill="#6a6258"/><circle cx="39.8" cy="10.4" r="0.8" fill="#6a6258"/><circle cx="2.0" cy="8.9" r="0.7" fill="#6a6258"/><circle cx="44.6" cy="47.2" r="0.4" fill="#a89a88"/><circle cx="48.8" cy="12.8" r="0.8" fill="#a89a88"/><circle cx="57.0" cy="4.2" r="0.7" fill="#5a5248"/><circle cx="6.9" cy="13.2" r="0.4" fill="#6a6258"/><circle cx="60.8" cy="58.3" r="0.7" fill="#6a6258"/><circle cx="52.8" cy="40.4" r="0.5" fill="#6a6258"/><circle cx="8.5" cy="50.7" r="0.7" fill="#c8c0b4"/><circle cx="20.4" cy="27.1" r="0.4" fill="#c8c0b4"/><circle cx="59.5" cy="3.1" r="0.7" fill="#c8c0b4"/><circle cx="49.2" cy="38.5" r="0.6" fill="#c8c0b4"/><circle cx="39.6" cy="2.0" r="0.6" fill="#5a5248"/><circle cx="33.2" cy="6.3" r="0.6" fill="#6a6258"/><circle cx="34.4" cy="13.9" r="0.7" fill="#6a6258"/><circle cx="36.8" cy="18.4" r="0.6" fill="#a89a88"/><circle cx="12.9" cy="48.8" r="0.8" fill="#6a6258"/><circle cx="22.3" cy="6.1" r="0.7" fill="#b0a898"/><circle cx="61.9" cy="37.9" r="0.8" fill="#a89a88"/><circle cx="16.7" cy="60.4" r="0.5" fill="#b0a898"/><circle cx="60.1" cy="14.8" r="0.5" fill="#6a6258"/><circle cx="31.4" cy="63.4" r="0.6" fill="#6a6258"/><circle cx="40.2" cy="22.8" r="0.6" fill="#5a5248"/><circle cx="57.1" cy="47.7" r="0.6" fill="#6a6258"/><circle cx="23.8" cy="19.4" r="0.6" fill="#a89a88"/><circle cx="32.1" cy="24.3" r="0.8" fill="#b0a898"/><circle cx="60.4" cy="8.1" r="0.6" fill="#a89a88"/><circle cx="41.4" cy="22.3" r="0.5" fill="#b0a898"/><circle cx="55.6" cy="28.8" r="0.6" fill="#c8c0b4"/><circle cx="10.9" cy="28.1" r="0.7" fill="#a89a88"/><circle cx="14.8" cy="21.4" r="0.7" fill="#b0a898"/><circle cx="32.5" cy="17.1" r="0.7" fill="#a89a88"/><circle cx="9.9" cy="10.0" r="0.5" fill="#c8c0b4"/><circle cx="38.6" cy="22.3" r="0.5" fill="#b0a898"/><circle cx="16.6" cy="61.1" r="0.8" fill="#b0a898"/><circle cx="61.6" cy="6.5" r="0.6" fill="#b0a898"/><circle cx="50.9" cy="46.9" r="0.6" fill="#b0a898"/><circle cx="7.0" cy="58.3" r="0.5" fill="#5a5248"/><circle cx="29.7" cy="0.8" r="0.7" fill="#5a5248"/><circle cx="44.4" cy="32.0" r="0.7" fill="#5a5248"/><circle cx="1.4" cy="16.5" r="0.7" fill="#6a6258"/><circle cx="47.4" cy="58.1" r="0.6" fill="#a89a88"/><circle cx="37.6" cy="41.4" r="0.7" fill="#a89a88"/><circle cx="54.6" cy="43.5" r="0.7" fill="#5a5248"/><circle cx="27.7" cy="16.6" r="0.7" fill="#5a5248"/><circle cx="15.5" cy="25.6" r="0.7" fill="#b0a898"/><circle cx="16.0" cy="27.1" r="0.6" fill="#a89a88"/><circle cx="54.9" cy="33.2" r="0.7" fill="#b0a898"/><circle cx="57.2" cy="21.0" r="0.4" fill="#5a5248"/><circle cx="58.1" cy="6.8" r="0.5" fill="#b0a898"/><circle cx="10.3" cy="50.0" r="0.8" fill="#a89a88"/><circle cx="22.3" cy="54.2" r="0.6" fill="#b0a898"/><circle cx="45.9" cy="32.8" r="0.7" fill="#c8c0b4"/><circle cx="33.4" cy="26.3" r="0.8" fill="#b0a898"/><circle cx="63.4" cy="11.8" r="0.6" fill="#6a6258"/><circle cx="46.7" cy="39.3" r="0.7" fill="#c8c0b4"/><circle cx="17.6" cy="25.6" r="0.4" fill="#5a5248"/><circle cx="58.6" cy="40.2" r="0.7" fill="#a89a88"/><circle cx="17.0" cy="14.4" r="0.7" fill="#a89a88"/><circle cx="62.2" cy="63.6" r="0.8" fill="#5a5248"/><circle cx="13.6" cy="8.3" r="0.7" fill="#b0a898"/><circle cx="30.0" cy="36.0" r="0.5" fill="#b0a898"/><circle cx="22.6" cy="40.9" r="0.7" fill="#5a5248"/><circle cx="30.0" cy="18.8" r="0.6" fill="#b0a898"/><circle cx="49.9" cy="30.0" r="0.7" fill="#b0a898"/><circle cx="17.1" cy="24.1" r="0.5" fill="#5a5248"/><circle cx="43.4" cy="30.8" r="0.7" fill="#c8c0b4"/><circle cx="22.9" cy="41.9" r="0.5" fill="#5a5248"/><circle cx="27.4" cy="40.8" r="0.7" fill="#c8c0b4"/><circle cx="9.8" cy="19.4" r="0.6" fill="#6a6258"/><circle cx="53.0" cy="58.0" r="0.7" fill="#b0a898"/><circle cx="34.0" cy="22.1" r="0.6" fill="#6a6258"/><circle cx="13.4" cy="4.6" r="0.5" fill="#a89a88"/><circle cx="6.5" cy="9.1" r="0.5" fill="#5a5248"/><circle cx="22.2" cy="9.8" r="0.8" fill="#a89a88"/><circle cx="10.7" cy="57.0" r="0.6" fill="#6a6258"/><circle cx="42.8" cy="57.2" r="0.7" fill="#c8c0b4"/><circle cx="12.6" cy="44.3" r="0.6" fill="#5a5248"/><circle cx="43.0" cy="7.5" r="0.4" fill="#5a5248"/><circle cx="15.0" cy="8.9" r="0.6" fill="#6a6258"/><circle cx="31.0" cy="57.9" r="0.7" fill="#b0a898"/><circle cx="31.9" cy="34.5" r="0.7" fill="#6a6258"/><circle cx="10.3" cy="20.5" r="0.7" fill="#5a5248"/><circle cx="42.6" cy="53.8" r="0.5" fill="#5a5248"/><circle cx="64.0" cy="43.3" r="0.5" fill="#c8c0b4"/><circle cx="40.7" cy="1.8" r="0.6" fill="#c8c0b4"/><circle cx="51.8" cy="6.0" r="0.6" fill="#b0a898"/><circle cx="2.2" cy="46.0" r="0.7" fill="#c8c0b4"/><circle cx="6.0" cy="42.2" r="0.5" fill="#a89a88"/><circle cx="35.5" cy="58.4" r="0.5" fill="#c8c0b4"/><circle cx="27.0" cy="35.5" r="0.7" fill="#c8c0b4"/><circle cx="22.7" cy="31.6" r="0.5" fill="#c8c0b4"/><circle cx="55.9" cy="22.1" r="0.5" fill="#5a5248"/><circle cx="50.7" cy="21.2" r="0.5" fill="#c8c0b4"/><circle cx="8.2" cy="62.3" r="0.4" fill="#6a6258"/><circle cx="25.5" cy="35.5" r="0.6" fill="#a89a88"/><circle cx="3.2" cy="19.2" r="0.4" fill="#b0a898"/><circle cx="52.6" cy="30.4" r="0.7" fill="#6a6258"/><circle cx="50.5" cy="58.2" r="0.6" fill="#a89a88"/><circle cx="9.4" cy="43.1" r="0.7" fill="#6a6258"/><circle cx="13.6" cy="42.7" r="0.6" fill="#b0a898"/><circle cx="6.5" cy="11.6" r="0.4" fill="#6a6258"/><circle cx="58.5" cy="42.0" r="0.5" fill="#b0a898"/><circle cx="50.3" cy="36.0" r="0.5" fill="#c8c0b4"/><circle cx="11.8" cy="2.2" r="0.4" fill="#a89a88"/><circle cx="41.1" cy="59.8" r="0.4" fill="#a89a88"/><circle cx="33.4" cy="52.8" r="0.7" fill="#5a5248"/><circle cx="36.8" cy="58.8" r="0.6" fill="#6a6258"/><circle cx="43.5" cy="38.0" r="0.8" fill="#b0a898"/><circle cx="30.4" cy="26.4" r="0.4" fill="#5a5248"/><circle cx="13.6" cy="9.7" r="0.4" fill="#6a6258"/><circle cx="0.6" cy="42.8" r="0.8" fill="#6a6258"/><circle cx="14.0" cy="7.8" r="0.6" fill="#c8c0b4"/><circle cx="46.0" cy="15.5" r="0.7" fill="#b0a898"/><circle cx="59.1" cy="23.4" r="0.7" fill="#b0a898"/><circle cx="46.7" cy="5.4" r="0.7" fill="#5a5248"/><circle cx="29.5" cy="59.7" r="0.5" fill="#6a6258"/><circle cx="45.9" cy="0.7" r="0.4" fill="#a89a88"/><circle cx="5.1" cy="19.9" r="0.7" fill="#b0a898"/><circle cx="61.3" cy="53.4" r="0.6" fill="#c8c0b4"/><circle cx="23.5" cy="36.8" r="0.6" fill="#b0a898"/><circle cx="9.3" cy="51.0" r="0.5" fill="#b0a898"/><circle cx="40.3" cy="26.7" r="0.6" fill="#5a5248"/><circle cx="60.5" cy="50.2" r="0.6" fill="#c8c0b4"/><circle cx="17.9" cy="39.8" r="0.7" fill="#a89a88"/><circle cx="21.3" cy="38.8" r="0.8" fill="#b0a898"/><circle cx="38.5" cy="19.8" r="0.6" fill="#b0a898"/><circle cx="24.1" cy="43.8" r="0.6" fill="#b0a898"/><circle cx="51.7" cy="18.1" r="0.4" fill="#c8c0b4"/><circle cx="17.2" cy="10.1" r="0.8" fill="#6a6258"/><circle cx="18.5" cy="9.0" r="0.8" fill="#a89a88"/><circle cx="9.4" cy="62.4" r="0.7" fill="#a89a88"/><circle cx="43.8" cy="58.5" r="0.5" fill="#6a6258"/><circle cx="34.6" cy="31.0" r="0.6" fill="#b0a898"/><circle cx="19.8" cy="3.7" r="0.6" fill="#b0a898"/><circle cx="59.3" cy="37.5" r="0.4" fill="#5a5248"/><circle cx="29.4" cy="5.6" r="0.7" fill="#6a6258"/><circle cx="14.9" cy="37.1" r="0.8" fill="#a89a88"/><circle cx="20.5" cy="32.4" r="0.5" fill="#b0a898"/><circle cx="12.3" cy="11.6" r="0.7" fill="#c8c0b4"/><circle cx="37.0" cy="23.0" r="0.7" fill="#b0a898"/><circle cx="15.8" cy="59.0" r="0.6" fill="#6a6258"/><circle cx="23.8" cy="29.7" r="0.4" fill="#c8c0b4"/><circle cx="38.2" cy="22.1" r="0.6" fill="#6a6258"/><circle cx="6.0" cy="13.1" r="0.7" fill="#a89a88"/><circle cx="31.1" cy="36.3" r="0.5" fill="#c8c0b4"/><circle cx="27.3" cy="60.6" r="0.7" fill="#a89a88"/><circle cx="61.7" cy="16.3" r="0.4" fill="#b0a898"/><circle cx="63.7" cy="24.2" r="0.4" fill="#6a6258"/><circle cx="35.7" cy="55.7" r="0.6" fill="#6a6258"/><circle cx="55.2" cy="40.9" r="0.8" fill="#6a6258"/><circle cx="16.5" cy="36.1" r="0.7" fill="#a89a88"/><circle cx="25.2" cy="28.7" r="0.5" fill="#b0a898"/><circle cx="63.5" cy="14.2" r="0.4" fill="#c8c0b4"/><circle cx="60.2" cy="3.8" r="0.6" fill="#6a6258"/><circle cx="53.6" cy="3.0" r="0.7" fill="#5a5248"/><circle cx="3.6" cy="9.3" r="0.7" fill="#b0a898"/><circle cx="43.3" cy="19.1" r="0.6" fill="#6a6258"/><circle cx="30.1" cy="23.8" r="0.6" fill="#c8c0b4"/><circle cx="30.8" cy="10.8" r="0.5" fill="#b0a898"/><circle cx="58.5" cy="57.1" r="0.6" fill="#b0a898"/><circle cx="51.1" cy="10.0" r="0.7" fill="#6a6258"/><circle cx="59.8" cy="55.5" r="0.8" fill="#b0a898"/><circle cx="49.8" cy="61.3" r="0.8" fill="#5a5248"/><circle cx="53.9" cy="40.2" r="0.6" fill="#c8c0b4"/><circle cx="20.6" cy="15.0" r="0.4" fill="#c8c0b4"/><circle cx="9.1" cy="14.2" r="0.4" fill="#5a5248"/><circle cx="35.4" cy="9.3" r="0.7" fill="#c8c0b4"/><circle cx="26.8" cy="15.8" r="0.4" fill="#a89a88"/><circle cx="53.7" cy="21.4" r="0.5" fill="#5a5248"/><circle cx="7.0" cy="29.2" r="0.6" fill="#b0a898"/><circle cx="62.6" cy="3.6" r="0.8" fill="#b0a898"/><circle cx="35.8" cy="53.5" r="0.4" fill="#b0a898"/><circle cx="62.1" cy="27.7" r="0.5" fill="#b0a898"/><circle cx="59.2" cy="6.2" r="0.5" fill="#b0a898"/><circle cx="3.7" cy="46.5" r="0.5" fill="#6a6258"/><circle cx="28.3" cy="32.5" r="0.6" fill="#5a5248"/><circle cx="0.1" cy="53.3" r="0.6" fill="#b0a898"/><circle cx="23.0" cy="2.6" r="0.6" fill="#c8c0b4"/><circle cx="36.6" cy="8.8" r="0.5" fill="#b0a898"/><circle cx="45.5" cy="12.6" r="0.4" fill="#6a6258"/><circle cx="56.9" cy="46.8" r="0.7" fill="#b0a898"/><circle cx="13.2" cy="39.2" r="0.7" fill="#b0a898"/><circle cx="37.3" cy="12.9" r="0.4" fill="#a89a88"/><circle cx="26.1" cy="46.2" r="0.4" fill="#c8c0b4"/><circle cx="21.5" cy="53.9" r="0.7" fill="#5a5248"/><circle cx="5.8" cy="26.2" r="0.7" fill="#b0a898"/><circle cx="55.8" cy="17.0" r="0.5" fill="#c8c0b4"/><circle cx="2.3" cy="44.9" r="0.6" fill="#6a6258"/><circle cx="22.8" cy="59.7" r="0.8" fill="#6a6258"/><circle cx="7.7" cy="45.7" r="0.7" fill="#c8c0b4"/><circle cx="49.9" cy="55.6" r="0.6" fill="#6a6258"/><circle cx="18.7" cy="6.9" r="0.7" fill="#5a5248"/><circle cx="32.9" cy="34.0" r="0.6" fill="#6a6258"/><circle cx="15.6" cy="5.7" r="0.6" fill="#b0a898"/><circle cx="6.6" cy="16.0" r="0.7" fill="#6a6258"/><circle cx="1.2" cy="59.3" r="0.7" fill="#c8c0b4"/><circle cx="1.1" cy="38.4" r="0.6" fill="#a89a88"/><circle cx="15.3" cy="28.4" r="0.5" fill="#6a6258"/><circle cx="45.9" cy="2.9" r="0.4" fill="#5a5248"/><circle cx="37.5" cy="48.7" r="0.4" fill="#6a6258"/><circle cx="26.0" cy="8.8" r="0.6" fill="#b0a898"/><circle cx="9.4" cy="36.7" r="0.7" fill="#b0a898"/><circle cx="60.7" cy="1.2" r="0.7" fill="#5a5248"/><circle cx="38.2" cy="38.6" r="0.4" fill="#6a6258"/><circle cx="49.7" cy="21.7" r="0.5" fill="#c8c0b4"/><circle cx="45.8" cy="54.0" r="0.6" fill="#c8c0b4"/><circle cx="52.2" cy="54.2" r="0.4" fill="#a89a88"/><circle cx="9.4" cy="43.5" r="0.5" fill="#5a5248"/><circle cx="42.4" cy="0.7" r="0.4" fill="#b0a898"/><circle cx="4.4" cy="27.7" r="0.6" fill="#6a6258"/><circle cx="14.4" cy="26.9" r="0.6" fill="#5a5248"/><circle cx="40.5" cy="51.8" r="0.8" fill="#6a6258"/><circle cx="2.2" cy="41.1" r="0.5" fill="#a89a88"/><circle cx="17.5" cy="34.7" r="0.8" fill="#a89a88"/><circle cx="6.4" cy="7.8" r="0.4" fill="#b0a898"/><circle cx="60.9" cy="18.4" r="0.5" fill="#b0a898"/><circle cx="7.7" cy="38.0" r="0.8" fill="#a89a88"/><circle cx="57.7" cy="5.4" r="0.6" fill="#b0a898"/><circle cx="28.2" cy="32.7" r="0.8" fill="#5a5248"/><circle cx="37.0" cy="17.5" r="0.7" fill="#a89a88"/><circle cx="18.4" cy="29.1" r="0.7" fill="#b0a898"/><circle cx="41.6" cy="12.9" r="0.7" fill="#5a5248"/><circle cx="57.1" cy="19.4" r="0.6" fill="#c8c0b4"/><circle cx="2.0" cy="21.4" r="0.5" fill="#a89a88"/><circle cx="24.5" cy="37.5" r="0.4" fill="#c8c0b4"/><circle cx="10.4" cy="60.9" r="0.5" fill="#c8c0b4"/><circle cx="31.5" cy="18.2" r="0.8" fill="#c8c0b4"/><circle cx="3.6" cy="1.4" r="0.6" fill="#a89a88"/><circle cx="55.8" cy="28.2" r="0.4" fill="#5a5248"/><circle cx="53.4" cy="22.7" r="0.7" fill="#a89a88"/><circle cx="14.4" cy="61.4" r="0.7" fill="#b0a898"/><circle cx="26.7" cy="42.8" r="0.5" fill="#b0a898"/><circle cx="39.4" cy="54.4" r="0.7" fill="#a89a88"/><circle cx="6.1" cy="54.8" r="0.8" fill="#5a5248"/><circle cx="17.2" cy="40.4" r="0.7" fill="#b0a898"/><circle cx="26.4" cy="6.6" r="0.6" fill="#a89a88"/><circle cx="37.5" cy="31.9" r="0.8" fill="#a89a88"/><circle cx="9.6" cy="54.4" r="0.5" fill="#a89a88"/><circle cx="38.9" cy="24.3" r="0.6" fill="#5a5248"/><circle cx="18.4" cy="22.6" r="0.5" fill="#a89a88"/><circle cx="35.5" cy="24.6" r="0.5" fill="#5a5248"/><circle cx="24.4" cy="19.2" r="0.6" fill="#b0a898"/><circle cx="27.9" cy="24.1" r="0.5" fill="#c8c0b4"/><circle cx="20.7" cy="54.0" r="0.7" fill="#c8c0b4"/><circle cx="13.1" cy="27.3" r="0.8" fill="#6a6258"/><circle cx="1.6" cy="16.4" r="0.8" fill="#c8c0b4"/><circle cx="58.9" cy="49.5" r="0.6" fill="#5a5248"/><circle cx="33.1" cy="33.1" r="0.7" fill="#5a5248"/><circle cx="29.7" cy="2.6" r="0.7" fill="#5a5248"/><circle cx="60.7" cy="43.3" r="0.6" fill="#6a6258"/><circle cx="26.2" cy="32.1" r="0.7" fill="#a89a88"/><circle cx="9.9" cy="12.0" r="0.6" fill="#5a5248"/><circle cx="28.2" cy="40.0" r="0.8" fill="#c8c0b4"/><circle cx="44.3" cy="47.8" r="0.4" fill="#c8c0b4"/><circle cx="20.4" cy="62.6" r="0.7" fill="#a89a88"/><circle cx="11.2" cy="42.0" r="0.5" fill="#c8c0b4"/><circle cx="52.5" cy="63.4" r="0.8" fill="#5a5248"/><circle cx="40.4" cy="33.5" r="0.7" fill="#b0a898"/><circle cx="32.3" cy="12.0" r="0.5" fill="#a89a88"/><circle cx="38.6" cy="22.6" r="0.8" fill="#6a6258"/><circle cx="44.3" cy="0.7" r="0.4" fill="#a89a88"/><circle cx="0.3" cy="19.5" r="0.7" fill="#a89a88"/><circle cx="1.0" cy="1.9" r="0.5" fill="#a89a88"/><circle cx="36.3" cy="55.8" r="0.8" fill="#a89a88"/><circle cx="63.8" cy="36.8" r="0.6" fill="#6a6258"/><circle cx="9.3" cy="33.2" r="0.6" fill="#6a6258"/><circle cx="6.4" cy="10.9" r="0.6" fill="#5a5248"/><circle cx="39.2" cy="51.6" r="0.4" fill="#6a6258"/><circle cx="43.8" cy="37.0" r="0.5" fill="#b0a898"/><circle cx="22.6" cy="10.8" r="0.5" fill="#6a6258"/><circle cx="55.0" cy="60.7" r="0.4" fill="#b0a898"/><circle cx="28.8" cy="24.7" r="0.4" fill="#5a5248"/><circle cx="37.3" cy="61.4" r="0.6" fill="#a89a88"/><circle cx="15.3" cy="14.3" r="0.5" fill="#a89a88"/><circle cx="54.7" cy="20.1" r="0.8" fill="#5a5248"/><circle cx="19.4" cy="38.6" r="0.8" fill="#5a5248"/><circle cx="62.7" cy="4.3" r="0.7" fill="#a89a88"/><circle cx="14.2" cy="19.8" r="0.8" fill="#5a5248"/><circle cx="1.4" cy="55.6" r="0.4" fill="#b0a898"/><circle cx="22.9" cy="11.9" r="0.8" fill="#c8c0b4"/><circle cx="25.3" cy="23.2" r="0.5" fill="#5a5248"/><circle cx="21.5" cy="41.7" r="0.8" fill="#5a5248"/><circle cx="52.9" cy="22.5" r="0.5" fill="#b0a898"/><circle cx="29.9" cy="22.0" r="0.6" fill="#c8c0b4"/><circle cx="42.5" cy="21.9" r="0.5" fill="#b0a898"/><circle cx="5.9" cy="17.3" r="0.7" fill="#b0a898"/><circle cx="35.5" cy="29.9" r="0.7" fill="#b0a898"/><circle cx="10.2" cy="22.6" r="0.7" fill="#5a5248"/><circle cx="40.3" cy="37.2" r="0.5" fill="#5a5248"/><circle cx="32.3" cy="14.5" r="0.6" fill="#b0a898"/><circle cx="60.3" cy="63.9" r="0.6" fill="#5a5248"/><circle cx="37.6" cy="23.6" r="0.5" fill="#a89a88"/><circle cx="32.7" cy="8.0" r="0.7" fill="#a89a88"/><circle cx="5.9" cy="54.5" r="0.7" fill="#5a5248"/><circle cx="1.8" cy="46.0" r="0.5" fill="#6a6258"/><circle cx="25.0" cy="5.5" r="0.5" fill="#b0a898"/><circle cx="20.5" cy="42.4" r="0.4" fill="#a89a88"/><circle cx="58.5" cy="51.5" r="0.7" fill="#b0a898"/><circle cx="4.2" cy="19.9" r="0.5" fill="#b0a898"/><circle cx="52.3" cy="25.5" r="0.5" fill="#5a5248"/><circle cx="49.6" cy="56.5" r="0.7" fill="#b0a898"/><circle cx="60.0" cy="11.3" r="0.5" fill="#c8c0b4"/><circle cx="57.4" cy="1.6" r="0.7" fill="#5a5248"/><circle cx="15.9" cy="54.2" r="0.5" fill="#6a6258"/><circle cx="11.6" cy="7.4" r="0.8" fill="#b0a898"/><circle cx="45.6" cy="2.6" r="0.4" fill="#b0a898"/><circle cx="27.6" cy="48.4" r="0.5" fill="#6a6258"/><circle cx="35.4" cy="40.3" r="0.8" fill="#a89a88"/><circle cx="53.7" cy="36.5" r="0.7" fill="#c8c0b4"/><circle cx="59.2" cy="42.9" r="0.6" fill="#6a6258"/><circle cx="7.2" cy="48.9" r="0.7" fill="#6a6258"/><circle cx="56.0" cy="37.4" r="0.7" fill="#b0a898"/><circle cx="43.6" cy="2.4" r="0.5" fill="#c8c0b4"/><circle cx="48.0" cy="5.5" r="0.7" fill="#5a5248"/><circle cx="63.9" cy="39.4" r="0.5" fill="#a89a88"/><circle cx="5.8" cy="60.6" r="0.6" fill="#c8c0b4"/><circle cx="44.3" cy="47.3" r="0.7" fill="#5a5248"/><circle cx="32.6" cy="43.3" r="0.5" fill="#a89a88"/><circle cx="54.2" cy="49.8" r="0.6" fill="#b0a898"/><circle cx="2.8" cy="45.0" r="0.7" fill="#c8c0b4"/><circle cx="11.2" cy="10.5" r="0.7" fill="#b0a898"/><circle cx="34.8" cy="16.0" r="0.4" fill="#c8c0b4"/><circle cx="22.2" cy="5.9" r="0.7" fill="#b0a898"/><circle cx="8.7" cy="45.2" r="0.7" fill="#b0a898"/><circle cx="45.2" cy="0.4" r="0.7" fill="#b0a898"/><circle cx="59.9" cy="22.5" r="0.5" fill="#b0a898"/><circle cx="37.6" cy="15.4" r="0.7" fill="#6a6258"/><circle cx="35.1" cy="48.7" r="0.5" fill="#b0a898"/><circle cx="38.3" cy="29.5" r="0.7" fill="#b0a898"/><circle cx="7.3" cy="18.5" r="0.5" fill="#b0a898"/><circle cx="2.8" cy="57.3" r="0.5" fill="#6a6258"/><circle cx="44.9" cy="28.7" r="0.4" fill="#c8c0b4"/><circle cx="28.5" cy="36.4" r="0.5" fill="#a89a88"/><circle cx="4.6" cy="0.7" r="0.8" fill="#5a5248"/><circle cx="5.4" cy="45.9" r="0.8" fill="#a89a88"/><circle cx="16.9" cy="41.3" r="0.8" fill="#5a5248"/><circle cx="12.1" cy="34.8" r="0.4" fill="#6a6258"/><circle cx="41.2" cy="40.2" r="0.8" fill="#c8c0b4"/><circle cx="41.8" cy="5.0" r="0.7" fill="#6a6258"/><circle cx="49.6" cy="53.7" r="0.5" fill="#b0a898"/><circle cx="61.6" cy="33.6" r="0.8" fill="#b0a898"/><circle cx="6.5" cy="46.0" r="0.5" fill="#a89a88"/><circle cx="20.9" cy="11.8" r="0.7" fill="#c8c0b4"/><circle cx="14.7" cy="8.7" r="0.8" fill="#c8c0b4"/><circle cx="15.3" cy="2.6" r="0.6" fill="#5a5248"/><circle cx="57.9" cy="60.5" r="0.6" fill="#5a5248"/><circle cx="46.8" cy="63.7" r="0.6" fill="#6a6258"/><circle cx="9.1" cy="14.6" r="0.5" fill="#5a5248"/><circle cx="5.7" cy="2.6" r="0.6" fill="#b0a898"/><circle cx="14.0" cy="23.8" r="0.4" fill="#a89a88"/><circle cx="54.7" cy="50.4" r="0.6" fill="#c8c0b4"/><circle cx="4.6" cy="3.5" r="0.7" fill="#c8c0b4"/><circle cx="4.0" cy="0.6" r="0.8" fill="#b0a898"/><circle cx="57.9" cy="10.5" r="0.5" fill="#5a5248"/><circle cx="51.5" cy="43.2" r="0.6" fill="#5a5248"/><circle cx="5.4" cy="20.7" r="0.6" fill="#a89a88"/><circle cx="58.2" cy="55.4" r="0.8" fill="#a89a88"/><circle cx="39.7" cy="51.9" r="0.4" fill="#c8c0b4"/><circle cx="39.0" cy="19.0" r="0.6" fill="#c8c0b4"/><circle cx="30.8" cy="41.4" r="0.5" fill="#c8c0b4"/><circle cx="33.9" cy="40.6" r="0.7" fill="#b0a898"/><circle cx="43.4" cy="28.6" r="0.4" fill="#a89a88"/><circle cx="23.8" cy="37.2" r="0.6" fill="#a89a88"/><circle cx="15.4" cy="28.2" r="0.5" fill="#b0a898"/><circle cx="11.6" cy="57.0" r="0.6" fill="#6a6258"/><circle cx="14.2" cy="53.6" r="0.7" fill="#b0a898"/><circle cx="34.0" cy="16.1" r="0.6" fill="#a89a88"/><circle cx="29.3" cy="34.6" r="0.7" fill="#a89a88"/><circle cx="58.2" cy="36.3" r="0.7" fill="#6a6258"/><circle cx="51.2" cy="8.6" r="0.6" fill="#a89a88"/><circle cx="45.7" cy="48.4" r="0.4" fill="#a89a88"/><circle cx="6.5" cy="53.1" r="0.6" fill="#b0a898"/><circle cx="61.9" cy="12.3" r="0.6" fill="#6a6258"/><circle cx="8.8" cy="49.7" r="0.4" fill="#b0a898"/><circle cx="3.0" cy="2.7" r="0.7" fill="#b0a898"/><circle cx="29.4" cy="7.7" r="0.5" fill="#6a6258"/><circle cx="39.8" cy="55.8" r="0.6" fill="#c8c0b4"/><circle cx="10.8" cy="47.7" r="0.5" fill="#6a6258"/><circle cx="52.8" cy="7.9" r="0.5" fill="#a89a88"/><circle cx="60.7" cy="46.2" r="0.4" fill="#a89a88"/><circle cx="22.6" cy="22.8" r="0.5" fill="#a89a88"/><circle cx="7.2" cy="59.2" r="0.7" fill="#c8c0b4"/><circle cx="22.7" cy="44.4" r="0.4" fill="#a89a88"/><circle cx="28.2" cy="50.6" r="0.6" fill="#6a6258"/><circle cx="51.2" cy="11.9" r="0.6" fill="#c8c0b4"/><circle cx="55.9" cy="42.9" r="0.7" fill="#a89a88"/><circle cx="56.0" cy="34.5" r="0.7" fill="#c8c0b4"/><circle cx="60.7" cy="0.9" r="0.5" fill="#b0a898"/><circle cx="31.2" cy="31.0" r="0.4" fill="#6a6258"/><circle cx="4.8" cy="39.7" r="0.7" fill="#a89a88"/><circle cx="25.1" cy="30.4" r="0.5" fill="#5a5248"/><circle cx="25.2" cy="55.9" r="0.6" fill="#6a6258"/><circle cx="23.1" cy="33.8" r="0.5" fill="#b0a898"/><circle cx="37.7" cy="2.8" r="0.5" fill="#c8c0b4"/><circle cx="46.5" cy="21.2" r="0.6" fill="#c8c0b4"/><circle cx="20.1" cy="21.5" r="0.6" fill="#b0a898"/><circle cx="1.3" cy="29.4" r="0.8" fill="#6a6258"/><circle cx="40.4" cy="46.5" r="0.5" fill="#5a5248"/><circle cx="17.5" cy="32.0" r="0.5" fill="#a89a88"/><circle cx="36.7" cy="37.4" r="0.5" fill="#6a6258"/><circle cx="58.6" cy="57.8" r="0.4" fill="#b0a898"/><circle cx="49.6" cy="40.5" r="0.7" fill="#c8c0b4"/><circle cx="50.7" cy="50.8" r="0.5" fill="#b0a898"/><circle cx="43.6" cy="19.5" r="0.7" fill="#c8c0b4"/><circle cx="32.6" cy="40.7" r="0.5" fill="#a89a88"/><circle cx="45.8" cy="21.4" r="0.7" fill="#c8c0b4"/><circle cx="56.6" cy="50.1" r="0.6" fill="#b0a898"/><circle cx="51.8" cy="63.8" r="0.5" fill="#b0a898"/><circle cx="0.5" cy="55.7" r="0.6" fill="#5a5248"/><circle cx="25.3" cy="49.4" r="0.8" fill="#a89a88"/><circle cx="4.2" cy="19.3" r="0.5" fill="#a89a88"/><circle cx="35.3" cy="60.0" r="0.5" fill="#b0a898"/><circle cx="37.3" cy="5.1" r="0.5" fill="#a89a88"/><circle cx="22.6" cy="29.9" r="0.8" fill="#5a5248"/><circle cx="46.2" cy="59.0" r="0.7" fill="#c8c0b4"/><circle cx="57.5" cy="17.7" r="0.5" fill="#6a6258"/><circle cx="48.5" cy="40.1" r="0.5" fill="#6a6258"/><circle cx="14.0" cy="25.6" r="0.5" fill="#a89a88"/><circle cx="18.1" cy="32.1" r="0.4" fill="#b0a898"/><circle cx="47.0" cy="61.6" r="0.6" fill="#6a6258"/><circle cx="4.7" cy="52.2" r="0.6" fill="#b0a898"/><circle cx="0.3" cy="17.3" r="0.7" fill="#6a6258"/><circle cx="41.0" cy="59.1" r="0.5" fill="#c8c0b4"/><circle cx="55.5" cy="1.7" r="0.6" fill="#a89a88"/><circle cx="43.5" cy="21.6" r="0.4" fill="#5a5248"/><circle cx="51.0" cy="5.6" r="0.6" fill="#5a5248"/><circle cx="63.2" cy="25.6" r="0.8" fill="#6a6258"/><circle cx="1.6" cy="20.3" r="0.7" fill="#c8c0b4"/><circle cx="3.6" cy="39.3" r="0.7" fill="#c8c0b4"/><circle cx="10.0" cy="1.2" r="0.5" fill="#a89a88"/><circle cx="49.1" cy="5.8" r="0.7" fill="#5a5248"/><circle cx="22.0" cy="43.5" r="0.7" fill="#b0a898"/><circle cx="42.1" cy="38.5" r="0.5" fill="#a89a88"/><circle cx="16.5" cy="45.5" r="0.7" fill="#c8c0b4"/><circle cx="41.7" cy="35.2" r="0.7" fill="#a89a88"/><circle cx="17.8" cy="33.5" r="0.8" fill="#b0a898"/><circle cx="16.2" cy="35.7" r="0.4" fill="#c8c0b4"/><circle cx="9.6" cy="40.2" r="0.6" fill="#6a6258"/><circle cx="60.0" cy="40.0" r="0.4" fill="#a89a88"/><circle cx="32.1" cy="35.5" r="0.5" fill="#a89a88"/><circle cx="23.4" cy="9.6" r="0.5" fill="#b0a898"/><circle cx="33.8" cy="22.5" r="0.7" fill="#5a5248"/><circle cx="62.9" cy="31.9" r="0.7" fill="#c8c0b4"/><circle cx="57.7" cy="24.9" r="0.5" fill="#6a6258"/><circle cx="6.9" cy="46.9" r="0.4" fill="#5a5248"/><circle cx="43.1" cy="22.4" r="0.5" fill="#5a5248"/><circle cx="26.2" cy="58.8" r="0.8" fill="#b0a898"/><circle cx="2.0" cy="1.3" r="0.7" fill="#b0a898"/><circle cx="14.8" cy="13.0" r="0.7" fill="#c8c0b4"/><circle cx="19.1" cy="63.6" r="0.5" fill="#a89a88"/><circle cx="50.6" cy="30.6" r="0.8" fill="#c8c0b4"/><circle cx="61.1" cy="8.7" r="0.5" fill="#6a6258"/><circle cx="21.2" cy="31.1" r="0.8" fill="#b0a898"/><circle cx="20.5" cy="39.1" r="0.8" fill="#b0a898"/><circle cx="37.1" cy="56.5" r="0.5" fill="#c8c0b4"/><circle cx="3.0" cy="49.5" r="0.6" fill="#5a5248"/><circle cx="55.3" cy="63.7" r="0.5" fill="#6a6258"/><circle cx="51.5" cy="9.7" r="0.8" fill="#b0a898"/><circle cx="58.3" cy="9.7" r="0.7" fill="#6a6258"/><circle cx="48.1" cy="29.7" r="0.6" fill="#5a5248"/><circle cx="21.7" cy="58.8" r="0.7" fill="#c8c0b4"/><circle cx="62.7" cy="2.1" r="0.5" fill="#6a6258"/><circle cx="2.4" cy="32.3" r="0.5" fill="#5a5248"/><circle cx="44.7" cy="46.6" r="0.4" fill="#c8c0b4"/><circle cx="4.1" cy="7.1" r="0.8" fill="#b0a898"/><circle cx="33.6" cy="0.2" r="0.5" fill="#a89a88"/><circle cx="9.5" cy="47.2" r="0.6" fill="#6a6258"/><circle cx="33.9" cy="53.7" r="0.8" fill="#6a6258"/><circle cx="22.4" cy="13.8" r="0.8" fill="#b0a898"/><circle cx="46.8" cy="17.5" r="0.5" fill="#c8c0b4"/><circle cx="17.2" cy="61.8" r="0.5" fill="#6a6258"/><circle cx="26.1" cy="35.6" r="0.5" fill="#6a6258"/><circle cx="20.8" cy="2.7" r="0.6" fill="#c8c0b4"/><circle cx="35.1" cy="44.2" r="0.8" fill="#c8c0b4"/><circle cx="25.6" cy="20.4" r="0.6" fill="#b0a898"/><circle cx="24.8" cy="24.7" r="0.6" fill="#b0a898"/><circle cx="57.5" cy="40.6" r="0.5" fill="#a89a88"/><circle cx="59.3" cy="16.3" r="0.6" fill="#5a5248"/><circle cx="63.4" cy="52.8" r="0.7" fill="#6a6258"/><circle cx="54.0" cy="50.2" r="0.8" fill="#6a6258"/><circle cx="26.0" cy="35.7" r="0.7" fill="#5a5248"/><circle cx="35.1" cy="20.2" r="0.8" fill="#6a6258"/><circle cx="30.3" cy="41.4" r="0.6" fill="#c8c0b4"/><circle cx="37.9" cy="63.7" r="0.5" fill="#5a5248"/><circle cx="22.7" cy="4.1" r="0.8" fill="#c8c0b4"/><circle cx="39.2" cy="43.3" r="0.5" fill="#a89a88"/><circle cx="42.5" cy="59.1" r="0.7" fill="#c8c0b4"/><circle cx="58.2" cy="30.3" r="0.7" fill="#a89a88"/><circle cx="37.7" cy="36.5" r="0.8" fill="#6a6258"/><circle cx="59.3" cy="33.8" r="0.6" fill="#a89a88"/><circle cx="10.8" cy="23.4" r="0.7" fill="#b0a898"/><circle cx="52.6" cy="29.5" r="0.7" fill="#6a6258"/><circle cx="20.6" cy="23.2" r="0.7" fill="#5a5248"/><circle cx="7.9" cy="9.8" r="0.5" fill="#6a6258"/><circle cx="23.3" cy="42.4" r="0.6" fill="#c8c0b4"/><circle cx="29.0" cy="5.6" r="0.6" fill="#5a5248"/><circle cx="44.5" cy="28.8" r="0.6" fill="#b0a898"/><circle cx="48.6" cy="9.6" r="0.7" fill="#c8c0b4"/><circle cx="31.3" cy="42.3" r="0.6" fill="#a89a88"/><circle cx="21.8" cy="24.4" r="0.4" fill="#b0a898"/><circle cx="0.1" cy="16.6" r="0.6" fill="#c8c0b4"/><circle cx="46.0" cy="17.6" r="0.5" fill="#b0a898"/><circle cx="17.0" cy="28.0" r="0.6" fill="#5a5248"/><circle cx="55.0" cy="12.9" r="0.6" fill="#c8c0b4"/><circle cx="39.5" cy="23.8" r="0.4" fill="#5a5248"/><circle cx="24.0" cy="2.7" r="0.7" fill="#5a5248"/><circle cx="27.6" cy="38.9" r="0.5" fill="#b0a898"/><circle cx="24.7" cy="37.0" r="0.8" fill="#b0a898"/><circle cx="62.6" cy="54.5" r="0.6" fill="#6a6258"/><circle cx="42.6" cy="21.1" r="0.4" fill="#5a5248"/><circle cx="24.3" cy="33.7" r="0.6" fill="#6a6258"/><circle cx="6.9" cy="36.1" r="0.8" fill="#5a5248"/><circle cx="26.6" cy="30.3" r="0.8" fill="#5a5248"/><circle cx="25.4" cy="8.7" r="0.7" fill="#6a6258"/><circle cx="42.9" cy="47.4" r="0.6" fill="#6a6258"/><circle cx="59.2" cy="18.8" r="0.5" fill="#5a5248"/><circle cx="49.3" cy="7.6" r="0.5" fill="#6a6258"/><circle cx="36.5" cy="1.0" r="0.6" fill="#b0a898"/><circle cx="36.1" cy="3.5" r="0.7" fill="#c8c0b4"/><circle cx="30.9" cy="3.5" r="0.7" fill="#5a5248"/><circle cx="54.0" cy="9.0" r="0.6" fill="#6a6258"/><circle cx="55.8" cy="9.3" r="0.5" fill="#a89a88"/><circle cx="62.9" cy="11.9" r="0.6" fill="#a89a88"/><circle cx="16.8" cy="20.0" r="0.5" fill="#c8c0b4"/><circle cx="35.6" cy="32.7" r="0.6" fill="#6a6258"/><circle cx="19.6" cy="15.9" r="0.6" fill="#5a5248"/><circle cx="54.8" cy="16.5" r="0.5" fill="#6a6258"/><circle cx="13.3" cy="41.7" r="0.8" fill="#5a5248"/><circle cx="45.4" cy="9.0" r="0.8" fill="#c8c0b4"/><circle cx="12.8" cy="58.8" r="0.6" fill="#6a6258"/><circle cx="46.7" cy="0.5" r="0.4" fill="#a89a88"/><circle cx="52.7" cy="2.3" r="0.5" fill="#5a5248"/><circle cx="18.7" cy="45.5" r="0.7" fill="#a89a88"/><circle cx="39.1" cy="26.0" r="0.7" fill="#b0a898"/><circle cx="56.2" cy="3.7" r="0.6" fill="#6a6258"/><circle cx="3.1" cy="55.2" r="0.4" fill="#a89a88"/><circle cx="31.8" cy="0.9" r="0.7" fill="#b0a898"/><circle cx="31.9" cy="43.1" r="0.7" fill="#c8c0b4"/><circle cx="51.3" cy="34.2" r="0.5" fill="#b0a898"/><circle cx="33.0" cy="29.8" r="0.5" fill="#6a6258"/><circle cx="60.9" cy="26.5" r="0.7" fill="#c8c0b4"/><circle cx="45.2" cy="28.3" r="0.6" fill="#6a6258"/><circle cx="59.1" cy="8.5" r="0.5" fill="#5a5248"/><circle cx="18.8" cy="14.9" r="0.6" fill="#c8c0b4"/><circle cx="45.2" cy="46.0" r="0.5" fill="#c8c0b4"/><circle cx="20.8" cy="53.8" r="0.5" fill="#b0a898"/><circle cx="25.1" cy="2.1" r="0.6" fill="#c8c0b4"/><circle cx="14.3" cy="34.9" r="0.4" fill="#5a5248"/><circle cx="9.5" cy="11.8" r="0.5" fill="#5a5248"/><circle cx="7.3" cy="53.0" r="0.4" fill="#b0a898"/><circle cx="63.8" cy="60.1" r="0.6" fill="#c8c0b4"/><circle cx="31.4" cy="1.1" r="0.7" fill="#6a6258"/><circle cx="12.8" cy="17.9" r="0.5" fill="#a89a88"/><circle cx="34.6" cy="5.7" r="0.5" fill="#c8c0b4"/><circle cx="49.1" cy="49.0" r="0.8" fill="#a89a88"/><circle cx="59.2" cy="2.1" r="0.6" fill="#6a6258"/><circle cx="22.0" cy="60.4" r="0.7" fill="#6a6258"/><circle cx="11.0" cy="22.4" r="0.6" fill="#c8c0b4"/><circle cx="47.5" cy="11.4" r="0.7" fill="#c8c0b4"/><circle cx="51.8" cy="46.3" r="0.6" fill="#a89a88"/><circle cx="7.2" cy="10.3" r="0.6" fill="#6a6258"/><circle cx="2.2" cy="32.9" r="0.4" fill="#b0a898"/><circle cx="26.6" cy="53.6" r="0.4" fill="#b0a898"/><circle cx="23.0" cy="42.4" r="0.4" fill="#6a6258"/><circle cx="53.9" cy="55.9" r="0.6" fill="#b0a898"/><circle cx="16.7" cy="6.8" r="0.5" fill="#b0a898"/><circle cx="31.8" cy="34.3" r="0.4" fill="#5a5248"/><circle cx="15.7" cy="36.4" r="0.4" fill="#c8c0b4"/><circle cx="23.5" cy="12.7" r="0.6" fill="#b0a898"/><circle cx="63.2" cy="58.1" r="0.7" fill="#a89a88"/><circle cx="32.1" cy="57.0" r="0.4" fill="#6a6258"/><circle cx="31.3" cy="50.6" r="0.6" fill="#b0a898"/><circle cx="5.6" cy="11.0" r="0.7" fill="#6a6258"/><circle cx="27.1" cy="40.0" r="0.4" fill="#a89a88"/><circle cx="57.0" cy="5.4" r="0.6" fill="#b0a898"/><circle cx="15.6" cy="49.6" r="0.6" fill="#6a6258"/><circle cx="52.6" cy="4.7" r="0.5" fill="#6a6258"/><circle cx="2.6" cy="39.6" r="0.7" fill="#c8c0b4"/><circle cx="21.9" cy="51.9" r="0.6" fill="#b0a898"/><circle cx="0.7" cy="60.2" r="0.6" fill="#5a5248"/><circle cx="2.1" cy="50.5" r="0.5" fill="#a89a88"/><circle cx="43.4" cy="9.7" r="0.5" fill="#b0a898"/><circle cx="13.0" cy="59.2" r="0.7" fill="#6a6258"/><circle cx="63.8" cy="50.7" r="0.6" fill="#5a5248"/><circle cx="33.6" cy="21.1" r="0.4" fill="#a89a88"/><circle cx="40.7" cy="12.7" r="0.7" fill="#c8c0b4"/></svg><div class="st"><svg width="16" height="16" viewBox="0 0 16 16"><rect x="0" y="0" width="16" height="16" rx="2.5" fill="#fff"/><path d="M8 0.9 L10.23 5.5 L15.1 6.05 L11.5 9.5 L12.4 14.4 L8 12.0 L3.6 14.4 L4.5 9.5 L0.9 6.05 L5.77 5.5 Z" fill="#a99af6" stroke="#333" stroke-width="1.05" stroke-linejoin="round"/></svg></div></div><div class="lb" style="left:764.5px;top:166px;color:#7b88ff">DFI 224B</div><div class="th" style="left:877px;top:101px"><svg width="63" height="63" viewBox="0 0 64 64" preserveAspectRatio="none"><defs><linearGradient id="dg" x1="0" y1="0" x2="0" y2="1"><stop offset="0" stop-color="#2a5a8c"/><stop offset="0.3" stop-color="#7a90a8"/><stop offset="0.5" stop-color="#e8d8bc"/><stop offset="0.68" stop-color="#a8aaa8"/><stop offset="1" stop-color="#364250"/></linearGradient>
<radialGradient id="dsun" cx="0.62" cy="0.6" r="0.25"><stop offset="0" stop-color="#fff8e8"/><stop offset="1" stop-color="#fff8e8" stop-opacity="0"/></radialGradient></defs>
<rect width="64" height="64" fill="url(#dg)"/>
<rect width="64" height="64" fill="url(#dsun)"/>
<g fill="#d8c8b0" opacity="0.8"><ellipse cx="42" cy="10" rx="8" ry="2.5"/><ellipse cx="52" cy="16" rx="9" ry="2.5"/><ellipse cx="14" cy="22" rx="10" ry="3"/></g>
<path d="M34 26 Q44 30 46 44 L44 58 L42 58 L42 44 Q38 34 34 26 Z" fill="#1e2630"/>
<path d="M14 42 Q20 38 26 40 Q20 42 16 50 Z" fill="#1e2630"/></svg><div class="st"><svg width="16" height="16" viewBox="0 0 16 16"><rect x="0" y="0" width="16" height="16" rx="2.5" fill="#fff"/><path d="M8 0.9 L10.23 5.5 L15.1 6.05 L11.5 9.5 L12.4 14.4 L8 12.0 L3.6 14.4 L4.5 9.5 L0.9 6.05 L5.77 5.5 Z" fill="#a99af6" stroke="#333" stroke-width="1.05" stroke-linejoin="round"/></svg></div></div><div class="lb" style="left:860.5px;top:166px;color:#7b88ff">Dyr-02</div><div class="th" style="left:301px;top:197px"><svg width="63" height="63" viewBox="0 0 64 64" preserveAspectRatio="none"><defs><linearGradient id="e2g" x1="0" y1="0" x2="0" y2="1"><stop offset="0" stop-color="#ffffff"/><stop offset="0.6" stop-color="#f0f0f0"/><stop offset="1" stop-color="#e4e4e4"/></linearGradient></defs>
<rect width="64" height="64" fill="url(#e2g)"/>
<g fill="#c8c8c8" opacity="0.8">
<polygon points="0,48 8,48 6,52 0,52"/><polygon points="16,48 24,48 23,52 14,52"/><polygon points="32,48 40,48 41,52 32,52"/><polygon points="48,48 56,48 58,52 50,52"/>
<polygon points="6,52 14,52 12,58 3,58"/><polygon points="23,52 32,52 32,58 22,58"/><polygon points="41,52 50,52 52,58 42,58"/><polygon points="58,52 64,52 64,58 61,58"/>
<polygon points="0,58 3,58 0,64"/><polygon points="12,58 22,58 21,64 10,64"/><polygon points="32,58 42,58 43,64 32,64"/><polygon points="52,58 61,58 64,64 54,64"/>
</g></svg><div class="st"><svg width="16" height="16" viewBox="0 0 16 16"><rect x="0" y="0" width="16" height="16" rx="2.5" fill="#fff"/><path d="M8 0.9 L10.23 5.5 L15.1 6.05 L11.5 9.5 L12.4 14.4 L8 12.0 L3.6 14.4 L4.5 9.5 L0.9 6.05 L5.77 5.5 Z" fill="#a99af6" stroke="#333" stroke-width="1.05" stroke-linejoin="round"/></svg></div><div style="position:absolute;left:51px;top:1px;width:12px;height:12px"><svg width="12" height="12" viewBox="0 0 14 14"><path d="M7 1.5 C10.5 1.5 12.5 3.5 12.5 6 C12.5 8 11 8.5 10 8.3 C9 8.1 8.6 9 9.2 10 C9.8 11.2 9 12.5 7 12.5 C3.8 12.5 1.5 10.2 1.5 7 C1.5 3.8 3.8 1.5 7 1.5 Z" fill="#f4e060" stroke="#222" stroke-width="1"/><circle cx="4.5" cy="6" r="1.2" fill="#e02020"/><circle cx="7" cy="4" r="1.1" fill="#2040e0"/><circle cx="10" cy="5" r="1.1" fill="#20a020"/><circle cx="5" cy="9.3" r="1.1" fill="#a020c0"/></svg></div></div><div class="lb" style="left:284.5px;top:262px;color:#7b88ff">E2 Glossy, Very<br>rough</div><div class="th" style="left:397px;top:197px"><svg width="63" height="63" viewBox="0 0 64 64" preserveAspectRatio="none"><filter id="hgb"><feGaussianBlur stdDeviation="0.8"/></filter>
<rect width="64" height="64" fill="#3a7428"/>
<g filter="url(#hgb)">
<rect y="0" width="64" height="30" fill="#2c5e1e"/>
<g fill="#5a9a38"><circle cx="8" cy="4" r="8"/><circle cx="36" cy="4" r="9"/><circle cx="58" cy="10" r="7"/><circle cx="24" cy="16" r="6"/></g>
<g fill="#1c4214"><circle cx="20" cy="4" r="5"/><circle cx="50" cy="22" r="5"/><circle cx="46" cy="4" r="4"/></g>
<rect y="24" width="64" height="16" fill="#6a9e40"/>
<g fill="#b8a8d0"><circle cx="40" cy="22" r="2"/><circle cx="48" cy="26" r="1.5"/></g>
<rect x="10" y="10" width="3.5" height="30" fill="#3a3020"/>
<rect y="40" width="64" height="24" fill="#5aa832"/>
<rect y="46" width="64" height="6" fill="#3e8424" opacity="0.6"/>
<rect y="54" width="64" height="10" fill="#70bc40"/>
<g fill="#b82838"><rect x="0" y="37" width="32" height="6"/><rect x="42" y="42" width="22" height="11"/></g>
</g></svg><div class="st"><svg width="16" height="16" viewBox="0 0 16 16"><rect x="0" y="0" width="16" height="16" rx="2.5" fill="#fff"/><path d="M8 0.9 L10.23 5.5 L15.1 6.05 L11.5 9.5 L12.4 14.4 L8 12.0 L3.6 14.4 L4.5 9.5 L0.9 6.05 L5.77 5.5 Z" fill="#a99af6" stroke="#333" stroke-width="1.05" stroke-linejoin="round"/></svg></div></div><div class="lb" style="left:380.5px;top:262px;color:#7b88ff">Hage-11</div><div class="th" style="left:493px;top:197px"><svg width="63" height="63" viewBox="0 0 64 64" preserveAspectRatio="none"><rect x="0.0" y="0" width="13.3" height="64" fill="#98785a"/><rect x="12.8" y="0" width="13.3" height="64" fill="#a2805e"/><rect x="25.6" y="0" width="13.3" height="64" fill="#967658"/><rect x="38.4" y="0" width="13.3" height="64" fill="#98785a"/><rect x="51.2" y="0" width="13.3" height="64" fill="#98785a"/><rect width="64" height="64" fill="#fff" opacity="0.06"/><ellipse cx="40" cy="8" rx="5" ry="8" fill="#c0a080" opacity="0.5"/></svg><div class="st"><svg width="16" height="16" viewBox="0 0 16 16"><rect x="0" y="0" width="16" height="16" rx="2.5" fill="#fff"/><path d="M8 0.9 L10.23 5.5 L15.1 6.05 L11.5 9.5 L12.4 14.4 L8 12.0 L3.6 14.4 L4.5 9.5 L0.9 6.05 L5.77 5.5 Z" fill="#a99af6" stroke="#333" stroke-width="1.05" stroke-linejoin="round"/></svg></div></div><div class="lb" style="left:476.5px;top:262px;color:#7b88ff">HARO_Eiche<br>Elegance</div><div class="th" style="left:589px;top:197px"><svg width="63" height="63" viewBox="0 0 64 64" preserveAspectRatio="none"><rect x="0.0" y="0" width="13.3" height="64" fill="#4a3e35"/><rect x="12.8" y="0" width="13.3" height="64" fill="#58493b"/><rect x="25.6" y="0" width="13.3" height="64" fill="#58493b"/><rect x="38.4" y="0" width="13.3" height="64" fill="#4e4238"/><rect x="51.2" y="0" width="13.3" height="64" fill="#4e4238"/><ellipse cx="40" cy="8" rx="5" ry="8" fill="#7a6a5a" opacity="0.5"/></svg><div class="st"><svg width="16" height="16" viewBox="0 0 16 16"><rect x="0" y="0" width="16" height="16" rx="2.5" fill="#fff"/><path d="M8 0.9 L10.23 5.5 L15.1 6.05 L11.5 9.5 L12.4 14.4 L8 12.0 L3.6 14.4 L4.5 9.5 L0.9 6.05 L5.77 5.5 Z" fill="#a99af6" stroke="#333" stroke-width="1.05" stroke-linejoin="round"/></svg></div></div><div class="lb" style="left:572.5px;top:262px;color:#7b88ff">HARO_Räuchereiche<br>Achat</div><div class="th" style="left:685px;top:197px"><svg width="63" height="63" viewBox="0 0 64 64" preserveAspectRatio="none"><defs><linearGradient id="h1" x1="0" y1="0" x2="0" y2="1"><stop offset="0" stop-color="#5a90c8"/><stop offset="0.4" stop-color="#e8eef4"/></linearGradient></defs>
<rect width="64" height="40" fill="url(#h1)"/>
<g fill="#f4f6f8"><ellipse cx="30" cy="14" rx="20" ry="8"/><ellipse cx="52" cy="20" rx="12" ry="6"/></g>
<polygon points="0,40 12,26 22,32 32,22 46,34 64,30 64,44 0,44" fill="#6a7a90"/>
<polygon points="20,30 32,22 40,28" fill="#e8eef4"/>
<rect y="40" width="64" height="24" fill="#3a6a30"/>
<rect x="26" y="42" width="38" height="10" fill="#a8c0d8"/>
<g fill="#1e4a20"><polygon points="4,64 10,34 16,64"/><polygon points="14,64 20,40 26,64"/><polygon points="30,64 36,46 42,64"/><polygon points="48,64 54,50 60,64"/></g></svg><div class="st"><svg width="16" height="16" viewBox="0 0 16 16"><rect x="0" y="0" width="16" height="16" rx="2.5" fill="#fff"/><path d="M8 0.9 L10.23 5.5 L15.1 6.05 L11.5 9.5 L12.4 14.4 L8 12.0 L3.6 14.4 L4.5 9.5 L0.9 6.05 L5.77 5.5 Z" fill="#a99af6" stroke="#333" stroke-width="1.05" stroke-linejoin="round"/></svg></div></div><div class="lb" style="left:668.5px;top:262px;color:#7b88ff">Hav-01</div><div class="th" style="left:781px;top:197px"><svg width="63" height="63" viewBox="0 0 64 64" preserveAspectRatio="none"><defs><linearGradient id="h8" x1="0" y1="0" x2="0" y2="1"><stop offset="0" stop-color="#7aa6d6"/><stop offset="1" stop-color="#dfe8ee"/></linearGradient></defs>
<rect width="64" height="28" fill="url(#h8)"/>
<rect y="22" width="64" height="6" fill="#e8eaea"/>
<rect y="26" width="64" height="16" fill="#3a74a4"/>
<polygon points="0,30 20,28 34,32 0,34" fill="#4a5a60"/>
<polygon points="4,40 24,36 40,42 10,44" fill="#1e2a30"/>
<rect y="42" width="64" height="22" fill="#5a7a3a"/>
<g fill="#2a4a20"><polygon points="40,64 48,30 56,64"/><polygon points="50,64 58,36 64,64"/><polygon points="0,64 6,48 12,64"/><polygon points="20,64 26,50 32,64"/></g></svg><div class="st"><svg width="16" height="16" viewBox="0 0 16 16"><rect x="0" y="0" width="16" height="16" rx="2.5" fill="#fff"/><path d="M8 0.9 L10.23 5.5 L15.1 6.05 L11.5 9.5 L12.4 14.4 L8 12.0 L3.6 14.4 L4.5 9.5 L0.9 6.05 L5.77 5.5 Z" fill="#a99af6" stroke="#333" stroke-width="1.05" stroke-linejoin="round"/></svg></div></div><div class="lb" style="left:764.5px;top:262px;color:#7b88ff">Hav-08</div><div class="th" style="left:877px;top:197px"><svg width="63" height="63" viewBox="0 0 64 64" preserveAspectRatio="none"><rect width="64" height="64" fill="#6e4e32"/><polygon points="-33.0,-27.5 -22.0,-16.5 -22.0,-5.5 -33.0,-16.5" fill="#523a26" stroke="#000" stroke-opacity="0.5" stroke-width="0.6"/><polygon points="-22.0,-16.5 -33.0,-5.5 -33.0,5.5 -22.0,-5.5" fill="#7a5a3c" stroke="#000" stroke-opacity="0.5" stroke-width="0.6"/><polygon points="-33.0,-5.5 -22.0,5.5 -22.0,16.5 -33.0,5.5" fill="#7a5a3c" stroke="#000" stroke-opacity="0.5" stroke-width="0.6"/><polygon points="-22.0,5.5 -33.0,16.5 -33.0,27.5 -22.0,16.5" fill="#5e422a" stroke="#000" stroke-opacity="0.5" stroke-width="0.6"/><polygon points="-33.0,16.5 -22.0,27.5 -22.0,38.5 -33.0,27.5" fill="#523a26" stroke="#000" stroke-opacity="0.5" stroke-width="0.6"/><polygon points="-22.0,27.5 -33.0,38.5 -33.0,49.5 -22.0,38.5" fill="#6e4e32" stroke="#000" stroke-opacity="0.5" stroke-width="0.6"/><polygon points="-33.0,38.5 -22.0,49.5 -22.0,60.5 -33.0,49.5" fill="#7a5a3c" stroke="#000" stroke-opacity="0.5" stroke-width="0.6"/><polygon points="-22.0,49.5 -33.0,60.5 -33.0,71.5 -22.0,60.5" fill="#523a26" stroke="#000" stroke-opacity="0.5" stroke-width="0.6"/><polygon points="-33.0,60.5 -22.0,71.5 -22.0,82.5 -33.0,71.5" fill="#7a5a3c" stroke="#000" stroke-opacity="0.5" stroke-width="0.6"/><polygon points="-22.0,71.5 -33.0,82.5 -33.0,93.5 -22.0,82.5" fill="#523a26" stroke="#000" stroke-opacity="0.5" stroke-width="0.6"/><polygon points="-33.0,82.5 -22.0,93.5 -22.0,104.5 -33.0,93.5" fill="#5e422a" stroke="#000" stroke-opacity="0.5" stroke-width="0.6"/><polygon points="-22.0,93.5 -33.0,104.5 -33.0,115.5 -22.0,104.5" fill="#6e4e32" stroke="#000" stroke-opacity="0.5" stroke-width="0.6"/><polygon points="-11.0,-33.0 -22.0,-22.0 -22.0,-11.0 -11.0,-22.0" fill="#5e422a" stroke="#000" stroke-opacity="0.5" stroke-width="0.6"/><polygon points="-22.0,-22.0 -11.0,-11.0 -11.0,0.0 -22.0,-11.0" fill="#523a26" stroke="#000" stroke-opacity="0.5" stroke-width="0.6"/><polygon points="-11.0,-11.0 -22.0,0.0 -22.0,11.0 -11.0,0.0" fill="#7a5a3c" stroke="#000" stroke-opacity="0.5" stroke-width="0.6"/><polygon points="-22.0,0.0 -11.0,11.0 -11.0,22.0 -22.0,11.0" fill="#5e422a" stroke="#000" stroke-opacity="0.5" stroke-width="0.6"/><polygon points="-11.0,11.0 -22.0,22.0 -22.0,33.0 -11.0,22.0" fill="#7a5a3c" stroke="#000" stroke-opacity="0.5" stroke-width="0.6"/><polygon points="-22.0,22.0 -11.0,33.0 -11.0,44.0 -22.0,33.0" fill="#5e422a" stroke="#000" stroke-opacity="0.5" stroke-width="0.6"/><polygon points="-11.0,33.0 -22.0,44.0 -22.0,55.0 -11.0,44.0" fill="#6e4e32" stroke="#000" stroke-opacity="0.5" stroke-width="0.6"/><polygon points="-22.0,44.0 -11.0,55.0 -11.0,66.0 -22.0,55.0" fill="#5e422a" stroke="#000" stroke-opacity="0.5" stroke-width="0.6"/><polygon points="-11.0,55.0 -22.0,66.0 -22.0,77.0 -11.0,66.0" fill="#6e4e32" stroke="#000" stroke-opacity="0.5" stroke-width="0.6"/><polygon points="-22.0,66.0 -11.0,77.0 -11.0,88.0 -22.0,77.0" fill="#7a5a3c" stroke="#000" stroke-opacity="0.5" stroke-width="0.6"/><polygon points="-11.0,77.0 -22.0,88.0 -22.0,99.0 -11.0,88.0" fill="#523a26" stroke="#000" stroke-opacity="0.5" stroke-width="0.6"/><polygon points="-22.0,88.0 -11.0,99.0 -11.0,110.0 -22.0,99.0" fill="#6e4e32" stroke="#000" stroke-opacity="0.5" stroke-width="0.6"/><polygon points="-11.0,-27.5 0.0,-16.5 0.0,-5.5 -11.0,-16.5" fill="#6e4e32" stroke="#000" stroke-opacity="0.5" stroke-width="0.6"/><polygon points="0.0,-16.5 -11.0,-5.5 -11.0,5.5 0.0,-5.5" fill="#6e4e32" stroke="#000" stroke-opacity="0.5" stroke-width="0.6"/><polygon points="-11.0,-5.5 0.0,5.5 0.0,16.5 -11.0,5.5" fill="#5e422a" stroke="#000" stroke-opacity="0.5" stroke-width="0.6"/><polygon points="0.0,5.5 -11.0,16.5 -11.0,27.5 0.0,16.5" fill="#6e4e32" stroke="#000" stroke-opacity="0.5" stroke-width="0.6"/><polygon points="-11.0,16.5 0.0,27.5 0.0,38.5 -11.0,27.5" fill="#523a26" stroke="#000" stroke-opacity="0.5" stroke-width="0.6"/><polygon points="0.0,27.5 -11.0,38.5 -11.0,49.5 0.0,38.5" fill="#523a26" stroke="#000" stroke-opacity="0.5" stroke-width="0.6"/><polygon points="-11.0,38.5 0.0,49.5 0.0,60.5 -11.0,49.5" fill="#6e4e32" stroke="#000" stroke-opacity="0.5" stroke-width="0.6"/><polygon points="0.0,49.5 -11.0,60.5 -11.0,71.5 0.0,60.5" fill="#523a26" stroke="#000" stroke-opacity="0.5" stroke-width="0.6"/><polygon points="-11.0,60.5 0.0,71.5 0.0,82.5 -11.0,71.5" fill="#5e422a" stroke="#000" stroke-opacity="0.5" stroke-width="0.6"/><polygon points="0.0,71.5 -11.0,82.5 -11.0,93.5 0.0,82.5" fill="#7a5a3c" stroke="#000" stroke-opacity="0.5" stroke-width="0.6"/><polygon points="-11.0,82.5 0.0,93.5 0.0,104.5 -11.0,93.5" fill="#5e422a" stroke="#000" stroke-opacity="0.5" stroke-width="0.6"/><polygon points="0.0,93.5 -11.0,104.5 -11.0,115.5 0.0,104.5" fill="#6e4e32" stroke="#000" stroke-opacity="0.5" stroke-width="0.6"/><polygon points="11.0,-33.0 0.0,-22.0 0.0,-11.0 11.0,-22.0" fill="#5e422a" stroke="#000" stroke-opacity="0.5" stroke-width="0.6"/><polygon points="0.0,-22.0 11.0,-11.0 11.0,0.0 0.0,-11.0" fill="#6e4e32" stroke="#000" stroke-opacity="0.5" stroke-width="0.6"/><polygon points="11.0,-11.0 0.0,0.0 0.0,11.0 11.0,0.0" fill="#523a26" stroke="#000" stroke-opacity="0.5" stroke-width="0.6"/><polygon points="0.0,0.0 11.0,11.0 11.0,22.0 0.0,11.0" fill="#523a26" stroke="#000" stroke-opacity="0.5" stroke-width="0.6"/><polygon points="11.0,11.0 0.0,22.0 0.0,33.0 11.0,22.0" fill="#523a26" stroke="#000" stroke-opacity="0.5" stroke-width="0.6"/><polygon points="0.0,22.0 11.0,33.0 11.0,44.0 0.0,33.0" fill="#523a26" stroke="#000" stroke-opacity="0.5" stroke-width="0.6"/><polygon points="11.0,33.0 0.0,44.0 0.0,55.0 11.0,44.0" fill="#523a26" stroke="#000" stroke-opacity="0.5" stroke-width="0.6"/><polygon points="0.0,44.0 11.0,55.0 11.0,66.0 0.0,55.0" fill="#6e4e32" stroke="#000" stroke-opacity="0.5" stroke-width="0.6"/><polygon points="11.0,55.0 0.0,66.0 0.0,77.0 11.0,66.0" fill="#6e4e32" stroke="#000" stroke-opacity="0.5" stroke-width="0.6"/><polygon points="0.0,66.0 11.0,77.0 11.0,88.0 0.0,77.0" fill="#5e422a" stroke="#000" stroke-opacity="0.5" stroke-width="0.6"/><polygon points="11.0,77.0 0.0,88.0 0.0,99.0 11.0,88.0" fill="#7a5a3c" stroke="#000" stroke-opacity="0.5" stroke-width="0.6"/><polygon points="0.0,88.0 11.0,99.0 11.0,110.0 0.0,99.0" fill="#7a5a3c" stroke="#000" stroke-opacity="0.5" stroke-width="0.6"/><polygon points="11.0,-27.5 22.0,-16.5 22.0,-5.5 11.0,-16.5" fill="#7a5a3c" stroke="#000" stroke-opacity="0.5" stroke-width="0.6"/><polygon points="22.0,-16.5 11.0,-5.5 11.0,5.5 22.0,-5.5" fill="#523a26" stroke="#000" stroke-opacity="0.5" stroke-width="0.6"/><polygon points="11.0,-5.5 22.0,5.5 22.0,16.5 11.0,5.5" fill="#7a5a3c" stroke="#000" stroke-opacity="0.5" stroke-width="0.6"/><polygon points="22.0,5.5 11.0,16.5 11.0,27.5 22.0,16.5" fill="#6e4e32" stroke="#000" stroke-opacity="0.5" stroke-width="0.6"/><polygon points="11.0,16.5 22.0,27.5 22.0,38.5 11.0,27.5" fill="#7a5a3c" stroke="#000" stroke-opacity="0.5" stroke-width="0.6"/><polygon points="22.0,27.5 11.0,38.5 11.0,49.5 22.0,38.5" fill="#5e422a" stroke="#000" stroke-opacity="0.5" stroke-width="0.6"/><polygon points="11.0,38.5 22.0,49.5 22.0,60.5 11.0,49.5" fill="#7a5a3c" stroke="#000" stroke-opacity="0.5" stroke-width="0.6"/><polygon points="22.0,49.5 11.0,60.5 11.0,71.5 22.0,60.5" fill="#7a5a3c" stroke="#000" stroke-opacity="0.5" stroke-width="0.6"/><polygon points="11.0,60.5 22.0,71.5 22.0,82.5 11.0,71.5" fill="#7a5a3c" stroke="#000" stroke-opacity="0.5" stroke-width="0.6"/><polygon points="22.0,71.5 11.0,82.5 11.0,93.5 22.0,82.5" fill="#5e422a" stroke="#000" stroke-opacity="0.5" stroke-width="0.6"/><polygon points="11.0,82.5 22.0,93.5 22.0,104.5 11.0,93.5" fill="#6e4e32" stroke="#000" stroke-opacity="0.5" stroke-width="0.6"/><polygon points="22.0,93.5 11.0,104.5 11.0,115.5 22.0,104.5" fill="#523a26" stroke="#000" stroke-opacity="0.5" stroke-width="0.6"/><polygon points="33.0,-33.0 22.0,-22.0 22.0,-11.0 33.0,-22.0" fill="#523a26" stroke="#000" stroke-opacity="0.5" stroke-width="0.6"/><polygon points="22.0,-22.0 33.0,-11.0 33.0,0.0 22.0,-11.0" fill="#6e4e32" stroke="#000" stroke-opacity="0.5" stroke-width="0.6"/><polygon points="33.0,-11.0 22.0,0.0 22.0,11.0 33.0,0.0" fill="#6e4e32" stroke="#000" stroke-opacity="0.5" stroke-width="0.6"/><polygon points="22.0,0.0 33.0,11.0 33.0,22.0 22.0,11.0" fill="#5e422a" stroke="#000" stroke-opacity="0.5" stroke-width="0.6"/><polygon points="33.0,11.0 22.0,22.0 22.0,33.0 33.0,22.0" fill="#523a26" stroke="#000" stroke-opacity="0.5" stroke-width="0.6"/><polygon points="22.0,22.0 33.0,33.0 33.0,44.0 22.0,33.0" fill="#6e4e32" stroke="#000" stroke-opacity="0.5" stroke-width="0.6"/><polygon points="33.0,33.0 22.0,44.0 22.0,55.0 33.0,44.0" fill="#523a26" stroke="#000" stroke-opacity="0.5" stroke-width="0.6"/><polygon points="22.0,44.0 33.0,55.0 33.0,66.0 22.0,55.0" fill="#5e422a" stroke="#000" stroke-opacity="0.5" stroke-width="0.6"/><polygon points="33.0,55.0 22.0,66.0 22.0,77.0 33.0,66.0" fill="#6e4e32" stroke="#000" stroke-opacity="0.5" stroke-width="0.6"/><polygon points="22.0,66.0 33.0,77.0 33.0,88.0 22.0,77.0" fill="#5e422a" stroke="#000" stroke-opacity="0.5" stroke-width="0.6"/><polygon points="33.0,77.0 22.0,88.0 22.0,99.0 33.0,88.0" fill="#5e422a" stroke="#000" stroke-opacity="0.5" stroke-width="0.6"/><polygon points="22.0,88.0 33.0,99.0 33.0,110.0 22.0,99.0" fill="#6e4e32" stroke="#000" stroke-opacity="0.5" stroke-width="0.6"/><polygon points="33.0,-27.5 44.0,-16.5 44.0,-5.5 33.0,-16.5" fill="#7a5a3c" stroke="#000" stroke-opacity="0.5" stroke-width="0.6"/><polygon points="44.0,-16.5 33.0,-5.5 33.0,5.5 44.0,-5.5" fill="#6e4e32" stroke="#000" stroke-opacity="0.5" stroke-width="0.6"/><polygon points="33.0,-5.5 44.0,5.5 44.0,16.5 33.0,5.5" fill="#523a26" stroke="#000" stroke-opacity="0.5" stroke-width="0.6"/><polygon points="44.0,5.5 33.0,16.5 33.0,27.5 44.0,16.5" fill="#7a5a3c" stroke="#000" stroke-opacity="0.5" stroke-width="0.6"/><polygon points="33.0,16.5 44.0,27.5 44.0,38.5 33.0,27.5" fill="#523a26" stroke="#000" stroke-opacity="0.5" stroke-width="0.6"/><polygon points="44.0,27.5 33.0,38.5 33.0,49.5 44.0,38.5" fill="#7a5a3c" stroke="#000" stroke-opacity="0.5" stroke-width="0.6"/><polygon points="33.0,38.5 44.0,49.5 44.0,60.5 33.0,49.5" fill="#6e4e32" stroke="#000" stroke-opacity="0.5" stroke-width="0.6"/><polygon points="44.0,49.5 33.0,60.5 33.0,71.5 44.0,60.5" fill="#523a26" stroke="#000" stroke-opacity="0.5" stroke-width="0.6"/><polygon points="33.0,60.5 44.0,71.5 44.0,82.5 33.0,71.5" fill="#7a5a3c" stroke="#000" stroke-opacity="0.5" stroke-width="0.6"/><polygon points="44.0,71.5 33.0,82.5 33.0,93.5 44.0,82.5" fill="#5e422a" stroke="#000" stroke-opacity="0.5" stroke-width="0.6"/><polygon points="33.0,82.5 44.0,93.5 44.0,104.5 33.0,93.5" fill="#7a5a3c" stroke="#000" stroke-opacity="0.5" stroke-width="0.6"/><polygon points="44.0,93.5 33.0,104.5 33.0,115.5 44.0,104.5" fill="#7a5a3c" stroke="#000" stroke-opacity="0.5" stroke-width="0.6"/><polygon points="55.0,-33.0 44.0,-22.0 44.0,-11.0 55.0,-22.0" fill="#523a26" stroke="#000" stroke-opacity="0.5" stroke-width="0.6"/><polygon points="44.0,-22.0 55.0,-11.0 55.0,0.0 44.0,-11.0" fill="#523a26" stroke="#000" stroke-opacity="0.5" stroke-width="0.6"/><polygon points="55.0,-11.0 44.0,0.0 44.0,11.0 55.0,0.0" fill="#523a26" stroke="#000" stroke-opacity="0.5" stroke-width="0.6"/><polygon points="44.0,0.0 55.0,11.0 55.0,22.0 44.0,11.0" fill="#5e422a" stroke="#000" stroke-opacity="0.5" stroke-width="0.6"/><polygon points="55.0,11.0 44.0,22.0 44.0,33.0 55.0,22.0" fill="#5e422a" stroke="#000" stroke-opacity="0.5" stroke-width="0.6"/><polygon points="44.0,22.0 55.0,33.0 55.0,44.0 44.0,33.0" fill="#523a26" stroke="#000" stroke-opacity="0.5" stroke-width="0.6"/><polygon points="55.0,33.0 44.0,44.0 44.0,55.0 55.0,44.0" fill="#7a5a3c" stroke="#000" stroke-opacity="0.5" stroke-width="0.6"/><polygon points="44.0,44.0 55.0,55.0 55.0,66.0 44.0,55.0" fill="#5e422a" stroke="#000" stroke-opacity="0.5" stroke-width="0.6"/><polygon points="55.0,55.0 44.0,66.0 44.0,77.0 55.0,66.0" fill="#5e422a" stroke="#000" stroke-opacity="0.5" stroke-width="0.6"/><polygon points="44.0,66.0 55.0,77.0 55.0,88.0 44.0,77.0" fill="#5e422a" stroke="#000" stroke-opacity="0.5" stroke-width="0.6"/><polygon points="55.0,77.0 44.0,88.0 44.0,99.0 55.0,88.0" fill="#6e4e32" stroke="#000" stroke-opacity="0.5" stroke-width="0.6"/><polygon points="44.0,88.0 55.0,99.0 55.0,110.0 44.0,99.0" fill="#7a5a3c" stroke="#000" stroke-opacity="0.5" stroke-width="0.6"/><polygon points="55.0,-27.5 66.0,-16.5 66.0,-5.5 55.0,-16.5" fill="#7a5a3c" stroke="#000" stroke-opacity="0.5" stroke-width="0.6"/><polygon points="66.0,-16.5 55.0,-5.5 55.0,5.5 66.0,-5.5" fill="#5e422a" stroke="#000" stroke-opacity="0.5" stroke-width="0.6"/><polygon points="55.0,-5.5 66.0,5.5 66.0,16.5 55.0,5.5" fill="#5e422a" stroke="#000" stroke-opacity="0.5" stroke-width="0.6"/><polygon points="66.0,5.5 55.0,16.5 55.0,27.5 66.0,16.5" fill="#6e4e32" stroke="#000" stroke-opacity="0.5" stroke-width="0.6"/><polygon points="55.0,16.5 66.0,27.5 66.0,38.5 55.0,27.5" fill="#6e4e32" stroke="#000" stroke-opacity="0.5" stroke-width="0.6"/><polygon points="66.0,27.5 55.0,38.5 55.0,49.5 66.0,38.5" fill="#5e422a" stroke="#000" stroke-opacity="0.5" stroke-width="0.6"/><polygon points="55.0,38.5 66.0,49.5 66.0,60.5 55.0,49.5" fill="#6e4e32" stroke="#000" stroke-opacity="0.5" stroke-width="0.6"/><polygon points="66.0,49.5 55.0,60.5 55.0,71.5 66.0,60.5" fill="#7a5a3c" stroke="#000" stroke-opacity="0.5" stroke-width="0.6"/><polygon points="55.0,60.5 66.0,71.5 66.0,82.5 55.0,71.5" fill="#5e422a" stroke="#000" stroke-opacity="0.5" stroke-width="0.6"/><polygon points="66.0,71.5 55.0,82.5 55.0,93.5 66.0,82.5" fill="#6e4e32" stroke="#000" stroke-opacity="0.5" stroke-width="0.6"/><polygon points="55.0,82.5 66.0,93.5 66.0,104.5 55.0,93.5" fill="#7a5a3c" stroke="#000" stroke-opacity="0.5" stroke-width="0.6"/><polygon points="66.0,93.5 55.0,104.5 55.0,115.5 66.0,104.5" fill="#7a5a3c" stroke="#000" stroke-opacity="0.5" stroke-width="0.6"/><polygon points="77.0,-33.0 66.0,-22.0 66.0,-11.0 77.0,-22.0" fill="#6e4e32" stroke="#000" stroke-opacity="0.5" stroke-width="0.6"/><polygon points="66.0,-22.0 77.0,-11.0 77.0,0.0 66.0,-11.0" fill="#5e422a" stroke="#000" stroke-opacity="0.5" stroke-width="0.6"/><polygon points="77.0,-11.0 66.0,0.0 66.0,11.0 77.0,0.0" fill="#523a26" stroke="#000" stroke-opacity="0.5" stroke-width="0.6"/><polygon points="66.0,0.0 77.0,11.0 77.0,22.0 66.0,11.0" fill="#523a26" stroke="#000" stroke-opacity="0.5" stroke-width="0.6"/><polygon points="77.0,11.0 66.0,22.0 66.0,33.0 77.0,22.0" fill="#7a5a3c" stroke="#000" stroke-opacity="0.5" stroke-width="0.6"/><polygon points="66.0,22.0 77.0,33.0 77.0,44.0 66.0,33.0" fill="#7a5a3c" stroke="#000" stroke-opacity="0.5" stroke-width="0.6"/><polygon points="77.0,33.0 66.0,44.0 66.0,55.0 77.0,44.0" fill="#523a26" stroke="#000" stroke-opacity="0.5" stroke-width="0.6"/><polygon points="66.0,44.0 77.0,55.0 77.0,66.0 66.0,55.0" fill="#5e422a" stroke="#000" stroke-opacity="0.5" stroke-width="0.6"/><polygon points="77.0,55.0 66.0,66.0 66.0,77.0 77.0,66.0" fill="#523a26" stroke="#000" stroke-opacity="0.5" stroke-width="0.6"/><polygon points="66.0,66.0 77.0,77.0 77.0,88.0 66.0,77.0" fill="#7a5a3c" stroke="#000" stroke-opacity="0.5" stroke-width="0.6"/><polygon points="77.0,77.0 66.0,88.0 66.0,99.0 77.0,88.0" fill="#6e4e32" stroke="#000" stroke-opacity="0.5" stroke-width="0.6"/><polygon points="66.0,88.0 77.0,99.0 77.0,110.0 66.0,99.0" fill="#7a5a3c" stroke="#000" stroke-opacity="0.5" stroke-width="0.6"/><polygon points="77.0,-27.5 88.0,-16.5 88.0,-5.5 77.0,-16.5" fill="#7a5a3c" stroke="#000" stroke-opacity="0.5" stroke-width="0.6"/><polygon points="88.0,-16.5 77.0,-5.5 77.0,5.5 88.0,-5.5" fill="#523a26" stroke="#000" stroke-opacity="0.5" stroke-width="0.6"/><polygon points="77.0,-5.5 88.0,5.5 88.0,16.5 77.0,5.5" fill="#5e422a" stroke="#000" stroke-opacity="0.5" stroke-width="0.6"/><polygon points="88.0,5.5 77.0,16.5 77.0,27.5 88.0,16.5" fill="#7a5a3c" stroke="#000" stroke-opacity="0.5" stroke-width="0.6"/><polygon points="77.0,16.5 88.0,27.5 88.0,38.5 77.0,27.5" fill="#7a5a3c" stroke="#000" stroke-opacity="0.5" stroke-width="0.6"/><polygon points="88.0,27.5 77.0,38.5 77.0,49.5 88.0,38.5" fill="#6e4e32" stroke="#000" stroke-opacity="0.5" stroke-width="0.6"/><polygon points="77.0,38.5 88.0,49.5 88.0,60.5 77.0,49.5" fill="#6e4e32" stroke="#000" stroke-opacity="0.5" stroke-width="0.6"/><polygon points="88.0,49.5 77.0,60.5 77.0,71.5 88.0,60.5" fill="#6e4e32" stroke="#000" stroke-opacity="0.5" stroke-width="0.6"/><polygon points="77.0,60.5 88.0,71.5 88.0,82.5 77.0,71.5" fill="#5e422a" stroke="#000" stroke-opacity="0.5" stroke-width="0.6"/><polygon points="88.0,71.5 77.0,82.5 77.0,93.5 88.0,82.5" fill="#7a5a3c" stroke="#000" stroke-opacity="0.5" stroke-width="0.6"/><polygon points="77.0,82.5 88.0,93.5 88.0,104.5 77.0,93.5" fill="#523a26" stroke="#000" stroke-opacity="0.5" stroke-width="0.6"/><polygon points="88.0,93.5 77.0,104.5 77.0,115.5 88.0,104.5" fill="#5e422a" stroke="#000" stroke-opacity="0.5" stroke-width="0.6"/><polygon points="99.0,-33.0 88.0,-22.0 88.0,-11.0 99.0,-22.0" fill="#5e422a" stroke="#000" stroke-opacity="0.5" stroke-width="0.6"/><polygon points="88.0,-22.0 99.0,-11.0 99.0,0.0 88.0,-11.0" fill="#5e422a" stroke="#000" stroke-opacity="0.5" stroke-width="0.6"/><polygon points="99.0,-11.0 88.0,0.0 88.0,11.0 99.0,0.0" fill="#523a26" stroke="#000" stroke-opacity="0.5" stroke-width="0.6"/><polygon points="88.0,0.0 99.0,11.0 99.0,22.0 88.0,11.0" fill="#523a26" stroke="#000" stroke-opacity="0.5" stroke-width="0.6"/><polygon points="99.0,11.0 88.0,22.0 88.0,33.0 99.0,22.0" fill="#6e4e32" stroke="#000" stroke-opacity="0.5" stroke-width="0.6"/><polygon points="88.0,22.0 99.0,33.0 99.0,44.0 88.0,33.0" fill="#7a5a3c" stroke="#000" stroke-opacity="0.5" stroke-width="0.6"/><polygon points="99.0,33.0 88.0,44.0 88.0,55.0 99.0,44.0" fill="#6e4e32" stroke="#000" stroke-opacity="0.5" stroke-width="0.6"/><polygon points="88.0,44.0 99.0,55.0 99.0,66.0 88.0,55.0" fill="#523a26" stroke="#000" stroke-opacity="0.5" stroke-width="0.6"/><polygon points="99.0,55.0 88.0,66.0 88.0,77.0 99.0,66.0" fill="#523a26" stroke="#000" stroke-opacity="0.5" stroke-width="0.6"/><polygon points="88.0,66.0 99.0,77.0 99.0,88.0 88.0,77.0" fill="#6e4e32" stroke="#000" stroke-opacity="0.5" stroke-width="0.6"/><polygon points="99.0,77.0 88.0,88.0 88.0,99.0 99.0,88.0" fill="#523a26" stroke="#000" stroke-opacity="0.5" stroke-width="0.6"/><polygon points="88.0,88.0 99.0,99.0 99.0,110.0 88.0,99.0" fill="#5e422a" stroke="#000" stroke-opacity="0.5" stroke-width="0.6"/></svg><div class="st"><svg width="16" height="16" viewBox="0 0 16 16"><rect x="0" y="0" width="16" height="16" rx="2.5" fill="#fff"/><path d="M8 0.9 L10.23 5.5 L15.1 6.05 L11.5 9.5 L12.4 14.4 L8 12.0 L3.6 14.4 L4.5 9.5 L0.9 6.05 L5.77 5.5 Z" fill="#a99af6" stroke="#333" stroke-width="1.05" stroke-linejoin="round"/></svg></div></div><div class="lb" style="left:860.5px;top:262px;color:#7b88ff">Herringbone -<br>Black Walnut</div><div class="th" style="left:301px;top:293px"><svg width="63" height="63" viewBox="0 0 64 64" preserveAspectRatio="none"><rect width="64" height="64" fill="#dcc294"/><polygon points="-33.0,-27.5 -22.0,-16.5 -22.0,-5.5 -33.0,-16.5" fill="#e4cca0" stroke="#000" stroke-opacity="0.2" stroke-width="0.6"/><polygon points="-22.0,-16.5 -33.0,-5.5 -33.0,5.5 -22.0,-5.5" fill="#e4cca0" stroke="#000" stroke-opacity="0.2" stroke-width="0.6"/><polygon points="-33.0,-5.5 -22.0,5.5 -22.0,16.5 -33.0,5.5" fill="#d0b484" stroke="#000" stroke-opacity="0.2" stroke-width="0.6"/><polygon points="-22.0,5.5 -33.0,16.5 -33.0,27.5 -22.0,16.5" fill="#d0b484" stroke="#000" stroke-opacity="0.2" stroke-width="0.6"/><polygon points="-33.0,16.5 -22.0,27.5 -22.0,38.5 -33.0,27.5" fill="#d0b484" stroke="#000" stroke-opacity="0.2" stroke-width="0.6"/><polygon points="-22.0,27.5 -33.0,38.5 -33.0,49.5 -22.0,38.5" fill="#d0b484" stroke="#000" stroke-opacity="0.2" stroke-width="0.6"/><polygon points="-33.0,38.5 -22.0,49.5 -22.0,60.5 -33.0,49.5" fill="#d0b484" stroke="#000" stroke-opacity="0.2" stroke-width="0.6"/><polygon points="-22.0,49.5 -33.0,60.5 -33.0,71.5 -22.0,60.5" fill="#d0b484" stroke="#000" stroke-opacity="0.2" stroke-width="0.6"/><polygon points="-33.0,60.5 -22.0,71.5 -22.0,82.5 -33.0,71.5" fill="#dcc294" stroke="#000" stroke-opacity="0.2" stroke-width="0.6"/><polygon points="-22.0,71.5 -33.0,82.5 -33.0,93.5 -22.0,82.5" fill="#d0b484" stroke="#000" stroke-opacity="0.2" stroke-width="0.6"/><polygon points="-33.0,82.5 -22.0,93.5 -22.0,104.5 -33.0,93.5" fill="#e4cca0" stroke="#000" stroke-opacity="0.2" stroke-width="0.6"/><polygon points="-22.0,93.5 -33.0,104.5 -33.0,115.5 -22.0,104.5" fill="#dcc294" stroke="#000" stroke-opacity="0.2" stroke-width="0.6"/><polygon points="-11.0,-33.0 -22.0,-22.0 -22.0,-11.0 -11.0,-22.0" fill="#c8aa7c" stroke="#000" stroke-opacity="0.2" stroke-width="0.6"/><polygon points="-22.0,-22.0 -11.0,-11.0 -11.0,0.0 -22.0,-11.0" fill="#d0b484" stroke="#000" stroke-opacity="0.2" stroke-width="0.6"/><polygon points="-11.0,-11.0 -22.0,0.0 -22.0,11.0 -11.0,0.0" fill="#dcc294" stroke="#000" stroke-opacity="0.2" stroke-width="0.6"/><polygon points="-22.0,0.0 -11.0,11.0 -11.0,22.0 -22.0,11.0" fill="#e4cca0" stroke="#000" stroke-opacity="0.2" stroke-width="0.6"/><polygon points="-11.0,11.0 -22.0,22.0 -22.0,33.0 -11.0,22.0" fill="#d0b484" stroke="#000" stroke-opacity="0.2" stroke-width="0.6"/><polygon points="-22.0,22.0 -11.0,33.0 -11.0,44.0 -22.0,33.0" fill="#dcc294" stroke="#000" stroke-opacity="0.2" stroke-width="0.6"/><polygon points="-11.0,33.0 -22.0,44.0 -22.0,55.0 -11.0,44.0" fill="#e4cca0" stroke="#000" stroke-opacity="0.2" stroke-width="0.6"/><polygon points="-22.0,44.0 -11.0,55.0 -11.0,66.0 -22.0,55.0" fill="#c8aa7c" stroke="#000" stroke-opacity="0.2" stroke-width="0.6"/><polygon points="-11.0,55.0 -22.0,66.0 -22.0,77.0 -11.0,66.0" fill="#c8aa7c" stroke="#000" stroke-opacity="0.2" stroke-width="0.6"/><polygon points="-22.0,66.0 -11.0,77.0 -11.0,88.0 -22.0,77.0" fill="#d0b484" stroke="#000" stroke-opacity="0.2" stroke-width="0.6"/><polygon points="-11.0,77.0 -22.0,88.0 -22.0,99.0 -11.0,88.0" fill="#e4cca0" stroke="#000" stroke-opacity="0.2" stroke-width="0.6"/><polygon points="-22.0,88.0 -11.0,99.0 -11.0,110.0 -22.0,99.0" fill="#e4cca0" stroke="#000" stroke-opacity="0.2" stroke-width="0.6"/><polygon points="-11.0,-27.5 0.0,-16.5 0.0,-5.5 -11.0,-16.5" fill="#d0b484" stroke="#000" stroke-opacity="0.2" stroke-width="0.6"/><polygon points="0.0,-16.5 -11.0,-5.5 -11.0,5.5 0.0,-5.5" fill="#c8aa7c" stroke="#000" stroke-opacity="0.2" stroke-width="0.6"/><polygon points="-11.0,-5.5 0.0,5.5 0.0,16.5 -11.0,5.5" fill="#c8aa7c" stroke="#000" stroke-opacity="0.2" stroke-width="0.6"/><polygon points="0.0,5.5 -11.0,16.5 -11.0,27.5 0.0,16.5" fill="#e4cca0" stroke="#000" stroke-opacity="0.2" stroke-width="0.6"/><polygon points="-11.0,16.5 0.0,27.5 0.0,38.5 -11.0,27.5" fill="#c8aa7c" stroke="#000" stroke-opacity="0.2" stroke-width="0.6"/><polygon points="0.0,27.5 -11.0,38.5 -11.0,49.5 0.0,38.5" fill="#e4cca0" stroke="#000" stroke-opacity="0.2" stroke-width="0.6"/><polygon points="-11.0,38.5 0.0,49.5 0.0,60.5 -11.0,49.5" fill="#dcc294" stroke="#000" stroke-opacity="0.2" stroke-width="0.6"/><polygon points="0.0,49.5 -11.0,60.5 -11.0,71.5 0.0,60.5" fill="#e4cca0" stroke="#000" stroke-opacity="0.2" stroke-width="0.6"/><polygon points="-11.0,60.5 0.0,71.5 0.0,82.5 -11.0,71.5" fill="#e4cca0" stroke="#000" stroke-opacity="0.2" stroke-width="0.6"/><polygon points="0.0,71.5 -11.0,82.5 -11.0,93.5 0.0,82.5" fill="#c8aa7c" stroke="#000" stroke-opacity="0.2" stroke-width="0.6"/><polygon points="-11.0,82.5 0.0,93.5 0.0,104.5 -11.0,93.5" fill="#d0b484" stroke="#000" stroke-opacity="0.2" stroke-width="0.6"/><polygon points="0.0,93.5 -11.0,104.5 -11.0,115.5 0.0,104.5" fill="#c8aa7c" stroke="#000" stroke-opacity="0.2" stroke-width="0.6"/><polygon points="11.0,-33.0 0.0,-22.0 0.0,-11.0 11.0,-22.0" fill="#c8aa7c" stroke="#000" stroke-opacity="0.2" stroke-width="0.6"/><polygon points="0.0,-22.0 11.0,-11.0 11.0,0.0 0.0,-11.0" fill="#d0b484" stroke="#000" stroke-opacity="0.2" stroke-width="0.6"/><polygon points="11.0,-11.0 0.0,0.0 0.0,11.0 11.0,0.0" fill="#e4cca0" stroke="#000" stroke-opacity="0.2" stroke-width="0.6"/><polygon points="0.0,0.0 11.0,11.0 11.0,22.0 0.0,11.0" fill="#d0b484" stroke="#000" stroke-opacity="0.2" stroke-width="0.6"/><polygon points="11.0,11.0 0.0,22.0 0.0,33.0 11.0,22.0" fill="#d0b484" stroke="#000" stroke-opacity="0.2" stroke-width="0.6"/><polygon points="0.0,22.0 11.0,33.0 11.0,44.0 0.0,33.0" fill="#e4cca0" stroke="#000" stroke-opacity="0.2" stroke-width="0.6"/><polygon points="11.0,33.0 0.0,44.0 0.0,55.0 11.0,44.0" fill="#e4cca0" stroke="#000" stroke-opacity="0.2" stroke-width="0.6"/><polygon points="0.0,44.0 11.0,55.0 11.0,66.0 0.0,55.0" fill="#e4cca0" stroke="#000" stroke-opacity="0.2" stroke-width="0.6"/><polygon points="11.0,55.0 0.0,66.0 0.0,77.0 11.0,66.0" fill="#c8aa7c" stroke="#000" stroke-opacity="0.2" stroke-width="0.6"/><polygon points="0.0,66.0 11.0,77.0 11.0,88.0 0.0,77.0" fill="#e4cca0" stroke="#000" stroke-opacity="0.2" stroke-width="0.6"/><polygon points="11.0,77.0 0.0,88.0 0.0,99.0 11.0,88.0" fill="#e4cca0" stroke="#000" stroke-opacity="0.2" stroke-width="0.6"/><polygon points="0.0,88.0 11.0,99.0 11.0,110.0 0.0,99.0" fill="#c8aa7c" stroke="#000" stroke-opacity="0.2" stroke-width="0.6"/><polygon points="11.0,-27.5 22.0,-16.5 22.0,-5.5 11.0,-16.5" fill="#d0b484" stroke="#000" stroke-opacity="0.2" stroke-width="0.6"/><polygon points="22.0,-16.5 11.0,-5.5 11.0,5.5 22.0,-5.5" fill="#c8aa7c" stroke="#000" stroke-opacity="0.2" stroke-width="0.6"/><polygon points="11.0,-5.5 22.0,5.5 22.0,16.5 11.0,5.5" fill="#d0b484" stroke="#000" stroke-opacity="0.2" stroke-width="0.6"/><polygon points="22.0,5.5 11.0,16.5 11.0,27.5 22.0,16.5" fill="#d0b484" stroke="#000" stroke-opacity="0.2" stroke-width="0.6"/><polygon points="11.0,16.5 22.0,27.5 22.0,38.5 11.0,27.5" fill="#d0b484" stroke="#000" stroke-opacity="0.2" stroke-width="0.6"/><polygon points="22.0,27.5 11.0,38.5 11.0,49.5 22.0,38.5" fill="#e4cca0" stroke="#000" stroke-opacity="0.2" stroke-width="0.6"/><polygon points="11.0,38.5 22.0,49.5 22.0,60.5 11.0,49.5" fill="#d0b484" stroke="#000" stroke-opacity="0.2" stroke-width="0.6"/><polygon points="22.0,49.5 11.0,60.5 11.0,71.5 22.0,60.5" fill="#dcc294" stroke="#000" stroke-opacity="0.2" stroke-width="0.6"/><polygon points="11.0,60.5 22.0,71.5 22.0,82.5 11.0,71.5" fill="#c8aa7c" stroke="#000" stroke-opacity="0.2" stroke-width="0.6"/><polygon points="22.0,71.5 11.0,82.5 11.0,93.5 22.0,82.5" fill="#c8aa7c" stroke="#000" stroke-opacity="0.2" stroke-width="0.6"/><polygon points="11.0,82.5 22.0,93.5 22.0,104.5 11.0,93.5" fill="#c8aa7c" stroke="#000" stroke-opacity="0.2" stroke-width="0.6"/><polygon points="22.0,93.5 11.0,104.5 11.0,115.5 22.0,104.5" fill="#dcc294" stroke="#000" stroke-opacity="0.2" stroke-width="0.6"/><polygon points="33.0,-33.0 22.0,-22.0 22.0,-11.0 33.0,-22.0" fill="#c8aa7c" stroke="#000" stroke-opacity="0.2" stroke-width="0.6"/><polygon points="22.0,-22.0 33.0,-11.0 33.0,0.0 22.0,-11.0" fill="#dcc294" stroke="#000" stroke-opacity="0.2" stroke-width="0.6"/><polygon points="33.0,-11.0 22.0,0.0 22.0,11.0 33.0,0.0" fill="#d0b484" stroke="#000" stroke-opacity="0.2" stroke-width="0.6"/><polygon points="22.0,0.0 33.0,11.0 33.0,22.0 22.0,11.0" fill="#d0b484" stroke="#000" stroke-opacity="0.2" stroke-width="0.6"/><polygon points="33.0,11.0 22.0,22.0 22.0,33.0 33.0,22.0" fill="#c8aa7c" stroke="#000" stroke-opacity="0.2" stroke-width="0.6"/><polygon points="22.0,22.0 33.0,33.0 33.0,44.0 22.0,33.0" fill="#c8aa7c" stroke="#000" stroke-opacity="0.2" stroke-width="0.6"/><polygon points="33.0,33.0 22.0,44.0 22.0,55.0 33.0,44.0" fill="#e4cca0" stroke="#000" stroke-opacity="0.2" stroke-width="0.6"/><polygon points="22.0,44.0 33.0,55.0 33.0,66.0 22.0,55.0" fill="#d0b484" stroke="#000" stroke-opacity="0.2" stroke-width="0.6"/><polygon points="33.0,55.0 22.0,66.0 22.0,77.0 33.0,66.0" fill="#c8aa7c" stroke="#000" stroke-opacity="0.2" stroke-width="0.6"/><polygon points="22.0,66.0 33.0,77.0 33.0,88.0 22.0,77.0" fill="#e4cca0" stroke="#000" stroke-opacity="0.2" stroke-width="0.6"/><polygon points="33.0,77.0 22.0,88.0 22.0,99.0 33.0,88.0" fill="#e4cca0" stroke="#000" stroke-opacity="0.2" stroke-width="0.6"/><polygon points="22.0,88.0 33.0,99.0 33.0,110.0 22.0,99.0" fill="#d0b484" stroke="#000" stroke-opacity="0.2" stroke-width="0.6"/><polygon points="33.0,-27.5 44.0,-16.5 44.0,-5.5 33.0,-16.5" fill="#e4cca0" stroke="#000" stroke-opacity="0.2" stroke-width="0.6"/><polygon points="44.0,-16.5 33.0,-5.5 33.0,5.5 44.0,-5.5" fill="#d0b484" stroke="#000" stroke-opacity="0.2" stroke-width="0.6"/><polygon points="33.0,-5.5 44.0,5.5 44.0,16.5 33.0,5.5" fill="#d0b484" stroke="#000" stroke-opacity="0.2" stroke-width="0.6"/><polygon points="44.0,5.5 33.0,16.5 33.0,27.5 44.0,16.5" fill="#c8aa7c" stroke="#000" stroke-opacity="0.2" stroke-width="0.6"/><polygon points="33.0,16.5 44.0,27.5 44.0,38.5 33.0,27.5" fill="#d0b484" stroke="#000" stroke-opacity="0.2" stroke-width="0.6"/><polygon points="44.0,27.5 33.0,38.5 33.0,49.5 44.0,38.5" fill="#dcc294" stroke="#000" stroke-opacity="0.2" stroke-width="0.6"/><polygon points="33.0,38.5 44.0,49.5 44.0,60.5 33.0,49.5" fill="#dcc294" stroke="#000" stroke-opacity="0.2" stroke-width="0.6"/><polygon points="44.0,49.5 33.0,60.5 33.0,71.5 44.0,60.5" fill="#e4cca0" stroke="#000" stroke-opacity="0.2" stroke-width="0.6"/><polygon points="33.0,60.5 44.0,71.5 44.0,82.5 33.0,71.5" fill="#e4cca0" stroke="#000" stroke-opacity="0.2" stroke-width="0.6"/><polygon points="44.0,71.5 33.0,82.5 33.0,93.5 44.0,82.5" fill="#d0b484" stroke="#000" stroke-opacity="0.2" stroke-width="0.6"/><polygon points="33.0,82.5 44.0,93.5 44.0,104.5 33.0,93.5" fill="#e4cca0" stroke="#000" stroke-opacity="0.2" stroke-width="0.6"/><polygon points="44.0,93.5 33.0,104.5 33.0,115.5 44.0,104.5" fill="#d0b484" stroke="#000" stroke-opacity="0.2" stroke-width="0.6"/><polygon points="55.0,-33.0 44.0,-22.0 44.0,-11.0 55.0,-22.0" fill="#d0b484" stroke="#000" stroke-opacity="0.2" stroke-width="0.6"/><polygon points="44.0,-22.0 55.0,-11.0 55.0,0.0 44.0,-11.0" fill="#dcc294" stroke="#000" stroke-opacity="0.2" stroke-width="0.6"/><polygon points="55.0,-11.0 44.0,0.0 44.0,11.0 55.0,0.0" fill="#d0b484" stroke="#000" stroke-opacity="0.2" stroke-width="0.6"/><polygon points="44.0,0.0 55.0,11.0 55.0,22.0 44.0,11.0" fill="#d0b484" stroke="#000" stroke-opacity="0.2" stroke-width="0.6"/><polygon points="55.0,11.0 44.0,22.0 44.0,33.0 55.0,22.0" fill="#dcc294" stroke="#000" stroke-opacity="0.2" stroke-width="0.6"/><polygon points="44.0,22.0 55.0,33.0 55.0,44.0 44.0,33.0" fill="#c8aa7c" stroke="#000" stroke-opacity="0.2" stroke-width="0.6"/><polygon points="55.0,33.0 44.0,44.0 44.0,55.0 55.0,44.0" fill="#dcc294" stroke="#000" stroke-opacity="0.2" stroke-width="0.6"/><polygon points="44.0,44.0 55.0,55.0 55.0,66.0 44.0,55.0" fill="#c8aa7c" stroke="#000" stroke-opacity="0.2" stroke-width="0.6"/><polygon points="55.0,55.0 44.0,66.0 44.0,77.0 55.0,66.0" fill="#e4cca0" stroke="#000" stroke-opacity="0.2" stroke-width="0.6"/><polygon points="44.0,66.0 55.0,77.0 55.0,88.0 44.0,77.0" fill="#dcc294" stroke="#000" stroke-opacity="0.2" stroke-width="0.6"/><polygon points="55.0,77.0 44.0,88.0 44.0,99.0 55.0,88.0" fill="#dcc294" stroke="#000" stroke-opacity="0.2" stroke-width="0.6"/><polygon points="44.0,88.0 55.0,99.0 55.0,110.0 44.0,99.0" fill="#d0b484" stroke="#000" stroke-opacity="0.2" stroke-width="0.6"/><polygon points="55.0,-27.5 66.0,-16.5 66.0,-5.5 55.0,-16.5" fill="#e4cca0" stroke="#000" stroke-opacity="0.2" stroke-width="0.6"/><polygon points="66.0,-16.5 55.0,-5.5 55.0,5.5 66.0,-5.5" fill="#dcc294" stroke="#000" stroke-opacity="0.2" stroke-width="0.6"/><polygon points="55.0,-5.5 66.0,5.5 66.0,16.5 55.0,5.5" fill="#c8aa7c" stroke="#000" stroke-opacity="0.2" stroke-width="0.6"/><polygon points="66.0,5.5 55.0,16.5 55.0,27.5 66.0,16.5" fill="#e4cca0" stroke="#000" stroke-opacity="0.2" stroke-width="0.6"/><polygon points="55.0,16.5 66.0,27.5 66.0,38.5 55.0,27.5" fill="#e4cca0" stroke="#000" stroke-opacity="0.2" stroke-width="0.6"/><polygon points="66.0,27.5 55.0,38.5 55.0,49.5 66.0,38.5" fill="#dcc294" stroke="#000" stroke-opacity="0.2" stroke-width="0.6"/><polygon points="55.0,38.5 66.0,49.5 66.0,60.5 55.0,49.5" fill="#c8aa7c" stroke="#000" stroke-opacity="0.2" stroke-width="0.6"/><polygon points="66.0,49.5 55.0,60.5 55.0,71.5 66.0,60.5" fill="#e4cca0" stroke="#000" stroke-opacity="0.2" stroke-width="0.6"/><polygon points="55.0,60.5 66.0,71.5 66.0,82.5 55.0,71.5" fill="#dcc294" stroke="#000" stroke-opacity="0.2" stroke-width="0.6"/><polygon points="66.0,71.5 55.0,82.5 55.0,93.5 66.0,82.5" fill="#dcc294" stroke="#000" stroke-opacity="0.2" stroke-width="0.6"/><polygon points="55.0,82.5 66.0,93.5 66.0,104.5 55.0,93.5" fill="#e4cca0" stroke="#000" stroke-opacity="0.2" stroke-width="0.6"/><polygon points="66.0,93.5 55.0,104.5 55.0,115.5 66.0,104.5" fill="#e4cca0" stroke="#000" stroke-opacity="0.2" stroke-width="0.6"/><polygon points="77.0,-33.0 66.0,-22.0 66.0,-11.0 77.0,-22.0" fill="#d0b484" stroke="#000" stroke-opacity="0.2" stroke-width="0.6"/><polygon points="66.0,-22.0 77.0,-11.0 77.0,0.0 66.0,-11.0" fill="#c8aa7c" stroke="#000" stroke-opacity="0.2" stroke-width="0.6"/><polygon points="77.0,-11.0 66.0,0.0 66.0,11.0 77.0,0.0" fill="#c8aa7c" stroke="#000" stroke-opacity="0.2" stroke-width="0.6"/><polygon points="66.0,0.0 77.0,11.0 77.0,22.0 66.0,11.0" fill="#d0b484" stroke="#000" stroke-opacity="0.2" stroke-width="0.6"/><polygon points="77.0,11.0 66.0,22.0 66.0,33.0 77.0,22.0" fill="#d0b484" stroke="#000" stroke-opacity="0.2" stroke-width="0.6"/><polygon points="66.0,22.0 77.0,33.0 77.0,44.0 66.0,33.0" fill="#e4cca0" stroke="#000" stroke-opacity="0.2" stroke-width="0.6"/><polygon points="77.0,33.0 66.0,44.0 66.0,55.0 77.0,44.0" fill="#dcc294" stroke="#000" stroke-opacity="0.2" stroke-width="0.6"/><polygon points="66.0,44.0 77.0,55.0 77.0,66.0 66.0,55.0" fill="#c8aa7c" stroke="#000" stroke-opacity="0.2" stroke-width="0.6"/><polygon points="77.0,55.0 66.0,66.0 66.0,77.0 77.0,66.0" fill="#d0b484" stroke="#000" stroke-opacity="0.2" stroke-width="0.6"/><polygon points="66.0,66.0 77.0,77.0 77.0,88.0 66.0,77.0" fill="#d0b484" stroke="#000" stroke-opacity="0.2" stroke-width="0.6"/><polygon points="77.0,77.0 66.0,88.0 66.0,99.0 77.0,88.0" fill="#e4cca0" stroke="#000" stroke-opacity="0.2" stroke-width="0.6"/><polygon points="66.0,88.0 77.0,99.0 77.0,110.0 66.0,99.0" fill="#c8aa7c" stroke="#000" stroke-opacity="0.2" stroke-width="0.6"/><polygon points="77.0,-27.5 88.0,-16.5 88.0,-5.5 77.0,-16.5" fill="#d0b484" stroke="#000" stroke-opacity="0.2" stroke-width="0.6"/><polygon points="88.0,-16.5 77.0,-5.5 77.0,5.5 88.0,-5.5" fill="#e4cca0" stroke="#000" stroke-opacity="0.2" stroke-width="0.6"/><polygon points="77.0,-5.5 88.0,5.5 88.0,16.5 77.0,5.5" fill="#c8aa7c" stroke="#000" stroke-opacity="0.2" stroke-width="0.6"/><polygon points="88.0,5.5 77.0,16.5 77.0,27.5 88.0,16.5" fill="#d0b484" stroke="#000" stroke-opacity="0.2" stroke-width="0.6"/><polygon points="77.0,16.5 88.0,27.5 88.0,38.5 77.0,27.5" fill="#e4cca0" stroke="#000" stroke-opacity="0.2" stroke-width="0.6"/><polygon points="88.0,27.5 77.0,38.5 77.0,49.5 88.0,38.5" fill="#d0b484" stroke="#000" stroke-opacity="0.2" stroke-width="0.6"/><polygon points="77.0,38.5 88.0,49.5 88.0,60.5 77.0,49.5" fill="#e4cca0" stroke="#000" stroke-opacity="0.2" stroke-width="0.6"/><polygon points="88.0,49.5 77.0,60.5 77.0,71.5 88.0,60.5" fill="#c8aa7c" stroke="#000" stroke-opacity="0.2" stroke-width="0.6"/><polygon points="77.0,60.5 88.0,71.5 88.0,82.5 77.0,71.5" fill="#d0b484" stroke="#000" stroke-opacity="0.2" stroke-width="0.6"/><polygon points="88.0,71.5 77.0,82.5 77.0,93.5 88.0,82.5" fill="#e4cca0" stroke="#000" stroke-opacity="0.2" stroke-width="0.6"/><polygon points="77.0,82.5 88.0,93.5 88.0,104.5 77.0,93.5" fill="#c8aa7c" stroke="#000" stroke-opacity="0.2" stroke-width="0.6"/><polygon points="88.0,93.5 77.0,104.5 77.0,115.5 88.0,104.5" fill="#dcc294" stroke="#000" stroke-opacity="0.2" stroke-width="0.6"/><polygon points="99.0,-33.0 88.0,-22.0 88.0,-11.0 99.0,-22.0" fill="#e4cca0" stroke="#000" stroke-opacity="0.2" stroke-width="0.6"/><polygon points="88.0,-22.0 99.0,-11.0 99.0,0.0 88.0,-11.0" fill="#c8aa7c" stroke="#000" stroke-opacity="0.2" stroke-width="0.6"/><polygon points="99.0,-11.0 88.0,0.0 88.0,11.0 99.0,0.0" fill="#c8aa7c" stroke="#000" stroke-opacity="0.2" stroke-width="0.6"/><polygon points="88.0,0.0 99.0,11.0 99.0,22.0 88.0,11.0" fill="#dcc294" stroke="#000" stroke-opacity="0.2" stroke-width="0.6"/><polygon points="99.0,11.0 88.0,22.0 88.0,33.0 99.0,22.0" fill="#dcc294" stroke="#000" stroke-opacity="0.2" stroke-width="0.6"/><polygon points="88.0,22.0 99.0,33.0 99.0,44.0 88.0,33.0" fill="#dcc294" stroke="#000" stroke-opacity="0.2" stroke-width="0.6"/><polygon points="99.0,33.0 88.0,44.0 88.0,55.0 99.0,44.0" fill="#dcc294" stroke="#000" stroke-opacity="0.2" stroke-width="0.6"/><polygon points="88.0,44.0 99.0,55.0 99.0,66.0 88.0,55.0" fill="#e4cca0" stroke="#000" stroke-opacity="0.2" stroke-width="0.6"/><polygon points="99.0,55.0 88.0,66.0 88.0,77.0 99.0,66.0" fill="#d0b484" stroke="#000" stroke-opacity="0.2" stroke-width="0.6"/><polygon points="88.0,66.0 99.0,77.0 99.0,88.0 88.0,77.0" fill="#c8aa7c" stroke="#000" stroke-opacity="0.2" stroke-width="0.6"/><polygon points="99.0,77.0 88.0,88.0 88.0,99.0 99.0,88.0" fill="#c8aa7c" stroke="#000" stroke-opacity="0.2" stroke-width="0.6"/><polygon points="88.0,88.0 99.0,99.0 99.0,110.0 88.0,99.0" fill="#c8aa7c" stroke="#000" stroke-opacity="0.2" stroke-width="0.6"/></svg><div class="st"><svg width="16" height="16" viewBox="0 0 16 16"><rect x="0" y="0" width="16" height="16" rx="2.5" fill="#fff"/><path d="M8 0.9 L10.23 5.5 L15.1 6.05 L11.5 9.5 L12.4 14.4 L8 12.0 L3.6 14.4 L4.5 9.5 L0.9 6.05 L5.77 5.5 Z" fill="#a99af6" stroke="#333" stroke-width="1.05" stroke-linejoin="round"/></svg></div></div><div class="lb" style="left:284.5px;top:358px;color:#7b88ff">Herringbone -<br>Natural Ash</div><div class="th" style="left:397px;top:293px"><svg width="63" height="63" viewBox="0 0 64 64" preserveAspectRatio="none"><rect width="64" height="64" fill="#dcaa78"/><polygon points="-33.0,-27.5 -22.0,-16.5 -22.0,-5.5 -33.0,-16.5" fill="#dcaa78" stroke="#000" stroke-opacity="0.2" stroke-width="0.6"/><polygon points="-22.0,-16.5 -33.0,-5.5 -33.0,5.5 -22.0,-5.5" fill="#d09c6c" stroke="#000" stroke-opacity="0.2" stroke-width="0.6"/><polygon points="-33.0,-5.5 -22.0,5.5 -22.0,16.5 -33.0,5.5" fill="#e4b688" stroke="#000" stroke-opacity="0.2" stroke-width="0.6"/><polygon points="-22.0,5.5 -33.0,16.5 -33.0,27.5 -22.0,16.5" fill="#e4b688" stroke="#000" stroke-opacity="0.2" stroke-width="0.6"/><polygon points="-33.0,16.5 -22.0,27.5 -22.0,38.5 -33.0,27.5" fill="#e4b688" stroke="#000" stroke-opacity="0.2" stroke-width="0.6"/><polygon points="-22.0,27.5 -33.0,38.5 -33.0,49.5 -22.0,38.5" fill="#dcaa78" stroke="#000" stroke-opacity="0.2" stroke-width="0.6"/><polygon points="-33.0,38.5 -22.0,49.5 -22.0,60.5 -33.0,49.5" fill="#c89468" stroke="#000" stroke-opacity="0.2" stroke-width="0.6"/><polygon points="-22.0,49.5 -33.0,60.5 -33.0,71.5 -22.0,60.5" fill="#e4b688" stroke="#000" stroke-opacity="0.2" stroke-width="0.6"/><polygon points="-33.0,60.5 -22.0,71.5 -22.0,82.5 -33.0,71.5" fill="#c89468" stroke="#000" stroke-opacity="0.2" stroke-width="0.6"/><polygon points="-22.0,71.5 -33.0,82.5 -33.0,93.5 -22.0,82.5" fill="#c89468" stroke="#000" stroke-opacity="0.2" stroke-width="0.6"/><polygon points="-33.0,82.5 -22.0,93.5 -22.0,104.5 -33.0,93.5" fill="#c89468" stroke="#000" stroke-opacity="0.2" stroke-width="0.6"/><polygon points="-22.0,93.5 -33.0,104.5 -33.0,115.5 -22.0,104.5" fill="#dcaa78" stroke="#000" stroke-opacity="0.2" stroke-width="0.6"/><polygon points="-11.0,-33.0 -22.0,-22.0 -22.0,-11.0 -11.0,-22.0" fill="#e4b688" stroke="#000" stroke-opacity="0.2" stroke-width="0.6"/><polygon points="-22.0,-22.0 -11.0,-11.0 -11.0,0.0 -22.0,-11.0" fill="#d09c6c" stroke="#000" stroke-opacity="0.2" stroke-width="0.6"/><polygon points="-11.0,-11.0 -22.0,0.0 -22.0,11.0 -11.0,0.0" fill="#e4b688" stroke="#000" stroke-opacity="0.2" stroke-width="0.6"/><polygon points="-22.0,0.0 -11.0,11.0 -11.0,22.0 -22.0,11.0" fill="#e4b688" stroke="#000" stroke-opacity="0.2" stroke-width="0.6"/><polygon points="-11.0,11.0 -22.0,22.0 -22.0,33.0 -11.0,22.0" fill="#e4b688" stroke="#000" stroke-opacity="0.2" stroke-width="0.6"/><polygon points="-22.0,22.0 -11.0,33.0 -11.0,44.0 -22.0,33.0" fill="#e4b688" stroke="#000" stroke-opacity="0.2" stroke-width="0.6"/><polygon points="-11.0,33.0 -22.0,44.0 -22.0,55.0 -11.0,44.0" fill="#d09c6c" stroke="#000" stroke-opacity="0.2" stroke-width="0.6"/><polygon points="-22.0,44.0 -11.0,55.0 -11.0,66.0 -22.0,55.0" fill="#d09c6c" stroke="#000" stroke-opacity="0.2" stroke-width="0.6"/><polygon points="-11.0,55.0 -22.0,66.0 -22.0,77.0 -11.0,66.0" fill="#e4b688" stroke="#000" stroke-opacity="0.2" stroke-width="0.6"/><polygon points="-22.0,66.0 -11.0,77.0 -11.0,88.0 -22.0,77.0" fill="#d09c6c" stroke="#000" stroke-opacity="0.2" stroke-width="0.6"/><polygon points="-11.0,77.0 -22.0,88.0 -22.0,99.0 -11.0,88.0" fill="#dcaa78" stroke="#000" stroke-opacity="0.2" stroke-width="0.6"/><polygon points="-22.0,88.0 -11.0,99.0 -11.0,110.0 -22.0,99.0" fill="#dcaa78" stroke="#000" stroke-opacity="0.2" stroke-width="0.6"/><polygon points="-11.0,-27.5 0.0,-16.5 0.0,-5.5 -11.0,-16.5" fill="#dcaa78" stroke="#000" stroke-opacity="0.2" stroke-width="0.6"/><polygon points="0.0,-16.5 -11.0,-5.5 -11.0,5.5 0.0,-5.5" fill="#e4b688" stroke="#000" stroke-opacity="0.2" stroke-width="0.6"/><polygon points="-11.0,-5.5 0.0,5.5 0.0,16.5 -11.0,5.5" fill="#dcaa78" stroke="#000" stroke-opacity="0.2" stroke-width="0.6"/><polygon points="0.0,5.5 -11.0,16.5 -11.0,27.5 0.0,16.5" fill="#dcaa78" stroke="#000" stroke-opacity="0.2" stroke-width="0.6"/><polygon points="-11.0,16.5 0.0,27.5 0.0,38.5 -11.0,27.5" fill="#e4b688" stroke="#000" stroke-opacity="0.2" stroke-width="0.6"/><polygon points="0.0,27.5 -11.0,38.5 -11.0,49.5 0.0,38.5" fill="#d09c6c" stroke="#000" stroke-opacity="0.2" stroke-width="0.6"/><polygon points="-11.0,38.5 0.0,49.5 0.0,60.5 -11.0,49.5" fill="#c89468" stroke="#000" stroke-opacity="0.2" stroke-width="0.6"/><polygon points="0.0,49.5 -11.0,60.5 -11.0,71.5 0.0,60.5" fill="#c89468" stroke="#000" stroke-opacity="0.2" stroke-width="0.6"/><polygon points="-11.0,60.5 0.0,71.5 0.0,82.5 -11.0,71.5" fill="#c89468" stroke="#000" stroke-opacity="0.2" stroke-width="0.6"/><polygon points="0.0,71.5 -11.0,82.5 -11.0,93.5 0.0,82.5" fill="#dcaa78" stroke="#000" stroke-opacity="0.2" stroke-width="0.6"/><polygon points="-11.0,82.5 0.0,93.5 0.0,104.5 -11.0,93.5" fill="#dcaa78" stroke="#000" stroke-opacity="0.2" stroke-width="0.6"/><polygon points="0.0,93.5 -11.0,104.5 -11.0,115.5 0.0,104.5" fill="#e4b688" stroke="#000" stroke-opacity="0.2" stroke-width="0.6"/><polygon points="11.0,-33.0 0.0,-22.0 0.0,-11.0 11.0,-22.0" fill="#d09c6c" stroke="#000" stroke-opacity="0.2" stroke-width="0.6"/><polygon points="0.0,-22.0 11.0,-11.0 11.0,0.0 0.0,-11.0" fill="#dcaa78" stroke="#000" stroke-opacity="0.2" stroke-width="0.6"/><polygon points="11.0,-11.0 0.0,0.0 0.0,11.0 11.0,0.0" fill="#c89468" stroke="#000" stroke-opacity="0.2" stroke-width="0.6"/><polygon points="0.0,0.0 11.0,11.0 11.0,22.0 0.0,11.0" fill="#d09c6c" stroke="#000" stroke-opacity="0.2" stroke-width="0.6"/><polygon points="11.0,11.0 0.0,22.0 0.0,33.0 11.0,22.0" fill="#e4b688" stroke="#000" stroke-opacity="0.2" stroke-width="0.6"/><polygon points="0.0,22.0 11.0,33.0 11.0,44.0 0.0,33.0" fill="#c89468" stroke="#000" stroke-opacity="0.2" stroke-width="0.6"/><polygon points="11.0,33.0 0.0,44.0 0.0,55.0 11.0,44.0" fill="#d09c6c" stroke="#000" stroke-opacity="0.2" stroke-width="0.6"/><polygon points="0.0,44.0 11.0,55.0 11.0,66.0 0.0,55.0" fill="#c89468" stroke="#000" stroke-opacity="0.2" stroke-width="0.6"/><polygon points="11.0,55.0 0.0,66.0 0.0,77.0 11.0,66.0" fill="#e4b688" stroke="#000" stroke-opacity="0.2" stroke-width="0.6"/><polygon points="0.0,66.0 11.0,77.0 11.0,88.0 0.0,77.0" fill="#e4b688" stroke="#000" stroke-opacity="0.2" stroke-width="0.6"/><polygon points="11.0,77.0 0.0,88.0 0.0,99.0 11.0,88.0" fill="#dcaa78" stroke="#000" stroke-opacity="0.2" stroke-width="0.6"/><polygon points="0.0,88.0 11.0,99.0 11.0,110.0 0.0,99.0" fill="#dcaa78" stroke="#000" stroke-opacity="0.2" stroke-width="0.6"/><polygon points="11.0,-27.5 22.0,-16.5 22.0,-5.5 11.0,-16.5" fill="#dcaa78" stroke="#000" stroke-opacity="0.2" stroke-width="0.6"/><polygon points="22.0,-16.5 11.0,-5.5 11.0,5.5 22.0,-5.5" fill="#e4b688" stroke="#000" stroke-opacity="0.2" stroke-width="0.6"/><polygon points="11.0,-5.5 22.0,5.5 22.0,16.5 11.0,5.5" fill="#e4b688" stroke="#000" stroke-opacity="0.2" stroke-width="0.6"/><polygon points="22.0,5.5 11.0,16.5 11.0,27.5 22.0,16.5" fill="#dcaa78" stroke="#000" stroke-opacity="0.2" stroke-width="0.6"/><polygon points="11.0,16.5 22.0,27.5 22.0,38.5 11.0,27.5" fill="#dcaa78" stroke="#000" stroke-opacity="0.2" stroke-width="0.6"/><polygon points="22.0,27.5 11.0,38.5 11.0,49.5 22.0,38.5" fill="#d09c6c" stroke="#000" stroke-opacity="0.2" stroke-width="0.6"/><polygon points="11.0,38.5 22.0,49.5 22.0,60.5 11.0,49.5" fill="#c89468" stroke="#000" stroke-opacity="0.2" stroke-width="0.6"/><polygon points="22.0,49.5 11.0,60.5 11.0,71.5 22.0,60.5" fill="#dcaa78" stroke="#000" stroke-opacity="0.2" stroke-width="0.6"/><polygon points="11.0,60.5 22.0,71.5 22.0,82.5 11.0,71.5" fill="#dcaa78" stroke="#000" stroke-opacity="0.2" stroke-width="0.6"/><polygon points="22.0,71.5 11.0,82.5 11.0,93.5 22.0,82.5" fill="#c89468" stroke="#000" stroke-opacity="0.2" stroke-width="0.6"/><polygon points="11.0,82.5 22.0,93.5 22.0,104.5 11.0,93.5" fill="#c89468" stroke="#000" stroke-opacity="0.2" stroke-width="0.6"/><polygon points="22.0,93.5 11.0,104.5 11.0,115.5 22.0,104.5" fill="#d09c6c" stroke="#000" stroke-opacity="0.2" stroke-width="0.6"/><polygon points="33.0,-33.0 22.0,-22.0 22.0,-11.0 33.0,-22.0" fill="#c89468" stroke="#000" stroke-opacity="0.2" stroke-width="0.6"/><polygon points="22.0,-22.0 33.0,-11.0 33.0,0.0 22.0,-11.0" fill="#c89468" stroke="#000" stroke-opacity="0.2" stroke-width="0.6"/><polygon points="33.0,-11.0 22.0,0.0 22.0,11.0 33.0,0.0" fill="#e4b688" stroke="#000" stroke-opacity="0.2" stroke-width="0.6"/><polygon points="22.0,0.0 33.0,11.0 33.0,22.0 22.0,11.0" fill="#c89468" stroke="#000" stroke-opacity="0.2" stroke-width="0.6"/><polygon points="33.0,11.0 22.0,22.0 22.0,33.0 33.0,22.0" fill="#c89468" stroke="#000" stroke-opacity="0.2" stroke-width="0.6"/><polygon points="22.0,22.0 33.0,33.0 33.0,44.0 22.0,33.0" fill="#c89468" stroke="#000" stroke-opacity="0.2" stroke-width="0.6"/><polygon points="33.0,33.0 22.0,44.0 22.0,55.0 33.0,44.0" fill="#c89468" stroke="#000" stroke-opacity="0.2" stroke-width="0.6"/><polygon points="22.0,44.0 33.0,55.0 33.0,66.0 22.0,55.0" fill="#dcaa78" stroke="#000" stroke-opacity="0.2" stroke-width="0.6"/><polygon points="33.0,55.0 22.0,66.0 22.0,77.0 33.0,66.0" fill="#e4b688" stroke="#000" stroke-opacity="0.2" stroke-width="0.6"/><polygon points="22.0,66.0 33.0,77.0 33.0,88.0 22.0,77.0" fill="#c89468" stroke="#000" stroke-opacity="0.2" stroke-width="0.6"/><polygon points="33.0,77.0 22.0,88.0 22.0,99.0 33.0,88.0" fill="#c89468" stroke="#000" stroke-opacity="0.2" stroke-width="0.6"/><polygon points="22.0,88.0 33.0,99.0 33.0,110.0 22.0,99.0" fill="#d09c6c" stroke="#000" stroke-opacity="0.2" stroke-width="0.6"/><polygon points="33.0,-27.5 44.0,-16.5 44.0,-5.5 33.0,-16.5" fill="#c89468" stroke="#000" stroke-opacity="0.2" stroke-width="0.6"/><polygon points="44.0,-16.5 33.0,-5.5 33.0,5.5 44.0,-5.5" fill="#c89468" stroke="#000" stroke-opacity="0.2" stroke-width="0.6"/><polygon points="33.0,-5.5 44.0,5.5 44.0,16.5 33.0,5.5" fill="#dcaa78" stroke="#000" stroke-opacity="0.2" stroke-width="0.6"/><polygon points="44.0,5.5 33.0,16.5 33.0,27.5 44.0,16.5" fill="#d09c6c" stroke="#000" stroke-opacity="0.2" stroke-width="0.6"/><polygon points="33.0,16.5 44.0,27.5 44.0,38.5 33.0,27.5" fill="#c89468" stroke="#000" stroke-opacity="0.2" stroke-width="0.6"/><polygon points="44.0,27.5 33.0,38.5 33.0,49.5 44.0,38.5" fill="#e4b688" stroke="#000" stroke-opacity="0.2" stroke-width="0.6"/><polygon points="33.0,38.5 44.0,49.5 44.0,60.5 33.0,49.5" fill="#c89468" stroke="#000" stroke-opacity="0.2" stroke-width="0.6"/><polygon points="44.0,49.5 33.0,60.5 33.0,71.5 44.0,60.5" fill="#dcaa78" stroke="#000" stroke-opacity="0.2" stroke-width="0.6"/><polygon points="33.0,60.5 44.0,71.5 44.0,82.5 33.0,71.5" fill="#c89468" stroke="#000" stroke-opacity="0.2" stroke-width="0.6"/><polygon points="44.0,71.5 33.0,82.5 33.0,93.5 44.0,82.5" fill="#c89468" stroke="#000" stroke-opacity="0.2" stroke-width="0.6"/><polygon points="33.0,82.5 44.0,93.5 44.0,104.5 33.0,93.5" fill="#dcaa78" stroke="#000" stroke-opacity="0.2" stroke-width="0.6"/><polygon points="44.0,93.5 33.0,104.5 33.0,115.5 44.0,104.5" fill="#e4b688" stroke="#000" stroke-opacity="0.2" stroke-width="0.6"/><polygon points="55.0,-33.0 44.0,-22.0 44.0,-11.0 55.0,-22.0" fill="#e4b688" stroke="#000" stroke-opacity="0.2" stroke-width="0.6"/><polygon points="44.0,-22.0 55.0,-11.0 55.0,0.0 44.0,-11.0" fill="#c89468" stroke="#000" stroke-opacity="0.2" stroke-width="0.6"/><polygon points="55.0,-11.0 44.0,0.0 44.0,11.0 55.0,0.0" fill="#e4b688" stroke="#000" stroke-opacity="0.2" stroke-width="0.6"/><polygon points="44.0,0.0 55.0,11.0 55.0,22.0 44.0,11.0" fill="#e4b688" stroke="#000" stroke-opacity="0.2" stroke-width="0.6"/><polygon points="55.0,11.0 44.0,22.0 44.0,33.0 55.0,22.0" fill="#e4b688" stroke="#000" stroke-opacity="0.2" stroke-width="0.6"/><polygon points="44.0,22.0 55.0,33.0 55.0,44.0 44.0,33.0" fill="#d09c6c" stroke="#000" stroke-opacity="0.2" stroke-width="0.6"/><polygon points="55.0,33.0 44.0,44.0 44.0,55.0 55.0,44.0" fill="#dcaa78" stroke="#000" stroke-opacity="0.2" stroke-width="0.6"/><polygon points="44.0,44.0 55.0,55.0 55.0,66.0 44.0,55.0" fill="#c89468" stroke="#000" stroke-opacity="0.2" stroke-width="0.6"/><polygon points="55.0,55.0 44.0,66.0 44.0,77.0 55.0,66.0" fill="#e4b688" stroke="#000" stroke-opacity="0.2" stroke-width="0.6"/><polygon points="44.0,66.0 55.0,77.0 55.0,88.0 44.0,77.0" fill="#dcaa78" stroke="#000" stroke-opacity="0.2" stroke-width="0.6"/><polygon points="55.0,77.0 44.0,88.0 44.0,99.0 55.0,88.0" fill="#c89468" stroke="#000" stroke-opacity="0.2" stroke-width="0.6"/><polygon points="44.0,88.0 55.0,99.0 55.0,110.0 44.0,99.0" fill="#dcaa78" stroke="#000" stroke-opacity="0.2" stroke-width="0.6"/><polygon points="55.0,-27.5 66.0,-16.5 66.0,-5.5 55.0,-16.5" fill="#dcaa78" stroke="#000" stroke-opacity="0.2" stroke-width="0.6"/><polygon points="66.0,-16.5 55.0,-5.5 55.0,5.5 66.0,-5.5" fill="#d09c6c" stroke="#000" stroke-opacity="0.2" stroke-width="0.6"/><polygon points="55.0,-5.5 66.0,5.5 66.0,16.5 55.0,5.5" fill="#e4b688" stroke="#000" stroke-opacity="0.2" stroke-width="0.6"/><polygon points="66.0,5.5 55.0,16.5 55.0,27.5 66.0,16.5" fill="#dcaa78" stroke="#000" stroke-opacity="0.2" stroke-width="0.6"/><polygon points="55.0,16.5 66.0,27.5 66.0,38.5 55.0,27.5" fill="#dcaa78" stroke="#000" stroke-opacity="0.2" stroke-width="0.6"/><polygon points="66.0,27.5 55.0,38.5 55.0,49.5 66.0,38.5" fill="#e4b688" stroke="#000" stroke-opacity="0.2" stroke-width="0.6"/><polygon points="55.0,38.5 66.0,49.5 66.0,60.5 55.0,49.5" fill="#e4b688" stroke="#000" stroke-opacity="0.2" stroke-width="0.6"/><polygon points="66.0,49.5 55.0,60.5 55.0,71.5 66.0,60.5" fill="#e4b688" stroke="#000" stroke-opacity="0.2" stroke-width="0.6"/><polygon points="55.0,60.5 66.0,71.5 66.0,82.5 55.0,71.5" fill="#dcaa78" stroke="#000" stroke-opacity="0.2" stroke-width="0.6"/><polygon points="66.0,71.5 55.0,82.5 55.0,93.5 66.0,82.5" fill="#dcaa78" stroke="#000" stroke-opacity="0.2" stroke-width="0.6"/><polygon points="55.0,82.5 66.0,93.5 66.0,104.5 55.0,93.5" fill="#d09c6c" stroke="#000" stroke-opacity="0.2" stroke-width="0.6"/><polygon points="66.0,93.5 55.0,104.5 55.0,115.5 66.0,104.5" fill="#d09c6c" stroke="#000" stroke-opacity="0.2" stroke-width="0.6"/><polygon points="77.0,-33.0 66.0,-22.0 66.0,-11.0 77.0,-22.0" fill="#dcaa78" stroke="#000" stroke-opacity="0.2" stroke-width="0.6"/><polygon points="66.0,-22.0 77.0,-11.0 77.0,0.0 66.0,-11.0" fill="#d09c6c" stroke="#000" stroke-opacity="0.2" stroke-width="0.6"/><polygon points="77.0,-11.0 66.0,0.0 66.0,11.0 77.0,0.0" fill="#e4b688" stroke="#000" stroke-opacity="0.2" stroke-width="0.6"/><polygon points="66.0,0.0 77.0,11.0 77.0,22.0 66.0,11.0" fill="#e4b688" stroke="#000" stroke-opacity="0.2" stroke-width="0.6"/><polygon points="77.0,11.0 66.0,22.0 66.0,33.0 77.0,22.0" fill="#d09c6c" stroke="#000" stroke-opacity="0.2" stroke-width="0.6"/><polygon points="66.0,22.0 77.0,33.0 77.0,44.0 66.0,33.0" fill="#d09c6c" stroke="#000" stroke-opacity="0.2" stroke-width="0.6"/><polygon points="77.0,33.0 66.0,44.0 66.0,55.0 77.0,44.0" fill="#d09c6c" stroke="#000" stroke-opacity="0.2" stroke-width="0.6"/><polygon points="66.0,44.0 77.0,55.0 77.0,66.0 66.0,55.0" fill="#e4b688" stroke="#000" stroke-opacity="0.2" stroke-width="0.6"/><polygon points="77.0,55.0 66.0,66.0 66.0,77.0 77.0,66.0" fill="#e4b688" stroke="#000" stroke-opacity="0.2" stroke-width="0.6"/><polygon points="66.0,66.0 77.0,77.0 77.0,88.0 66.0,77.0" fill="#e4b688" stroke="#000" stroke-opacity="0.2" stroke-width="0.6"/><polygon points="77.0,77.0 66.0,88.0 66.0,99.0 77.0,88.0" fill="#dcaa78" stroke="#000" stroke-opacity="0.2" stroke-width="0.6"/><polygon points="66.0,88.0 77.0,99.0 77.0,110.0 66.0,99.0" fill="#d09c6c" stroke="#000" stroke-opacity="0.2" stroke-width="0.6"/><polygon points="77.0,-27.5 88.0,-16.5 88.0,-5.5 77.0,-16.5" fill="#d09c6c" stroke="#000" stroke-opacity="0.2" stroke-width="0.6"/><polygon points="88.0,-16.5 77.0,-5.5 77.0,5.5 88.0,-5.5" fill="#e4b688" stroke="#000" stroke-opacity="0.2" stroke-width="0.6"/><polygon points="77.0,-5.5 88.0,5.5 88.0,16.5 77.0,5.5" fill="#c89468" stroke="#000" stroke-opacity="0.2" stroke-width="0.6"/><polygon points="88.0,5.5 77.0,16.5 77.0,27.5 88.0,16.5" fill="#c89468" stroke="#000" stroke-opacity="0.2" stroke-width="0.6"/><polygon points="77.0,16.5 88.0,27.5 88.0,38.5 77.0,27.5" fill="#d09c6c" stroke="#000" stroke-opacity="0.2" stroke-width="0.6"/><polygon points="88.0,27.5 77.0,38.5 77.0,49.5 88.0,38.5" fill="#c89468" stroke="#000" stroke-opacity="0.2" stroke-width="0.6"/><polygon points="77.0,38.5 88.0,49.5 88.0,60.5 77.0,49.5" fill="#e4b688" stroke="#000" stroke-opacity="0.2" stroke-width="0.6"/><polygon points="88.0,49.5 77.0,60.5 77.0,71.5 88.0,60.5" fill="#c89468" stroke="#000" stroke-opacity="0.2" stroke-width="0.6"/><polygon points="77.0,60.5 88.0,71.5 88.0,82.5 77.0,71.5" fill="#dcaa78" stroke="#000" stroke-opacity="0.2" stroke-width="0.6"/><polygon points="88.0,71.5 77.0,82.5 77.0,93.5 88.0,82.5" fill="#d09c6c" stroke="#000" stroke-opacity="0.2" stroke-width="0.6"/><polygon points="77.0,82.5 88.0,93.5 88.0,104.5 77.0,93.5" fill="#c89468" stroke="#000" stroke-opacity="0.2" stroke-width="0.6"/><polygon points="88.0,93.5 77.0,104.5 77.0,115.5 88.0,104.5" fill="#c89468" stroke="#000" stroke-opacity="0.2" stroke-width="0.6"/><polygon points="99.0,-33.0 88.0,-22.0 88.0,-11.0 99.0,-22.0" fill="#e4b688" stroke="#000" stroke-opacity="0.2" stroke-width="0.6"/><polygon points="88.0,-22.0 99.0,-11.0 99.0,0.0 88.0,-11.0" fill="#dcaa78" stroke="#000" stroke-opacity="0.2" stroke-width="0.6"/><polygon points="99.0,-11.0 88.0,0.0 88.0,11.0 99.0,0.0" fill="#e4b688" stroke="#000" stroke-opacity="0.2" stroke-width="0.6"/><polygon points="88.0,0.0 99.0,11.0 99.0,22.0 88.0,11.0" fill="#dcaa78" stroke="#000" stroke-opacity="0.2" stroke-width="0.6"/><polygon points="99.0,11.0 88.0,22.0 88.0,33.0 99.0,22.0" fill="#d09c6c" stroke="#000" stroke-opacity="0.2" stroke-width="0.6"/><polygon points="88.0,22.0 99.0,33.0 99.0,44.0 88.0,33.0" fill="#d09c6c" stroke="#000" stroke-opacity="0.2" stroke-width="0.6"/><polygon points="99.0,33.0 88.0,44.0 88.0,55.0 99.0,44.0" fill="#dcaa78" stroke="#000" stroke-opacity="0.2" stroke-width="0.6"/><polygon points="88.0,44.0 99.0,55.0 99.0,66.0 88.0,55.0" fill="#d09c6c" stroke="#000" stroke-opacity="0.2" stroke-width="0.6"/><polygon points="99.0,55.0 88.0,66.0 88.0,77.0 99.0,66.0" fill="#d09c6c" stroke="#000" stroke-opacity="0.2" stroke-width="0.6"/><polygon points="88.0,66.0 99.0,77.0 99.0,88.0 88.0,77.0" fill="#e4b688" stroke="#000" stroke-opacity="0.2" stroke-width="0.6"/><polygon points="99.0,77.0 88.0,88.0 88.0,99.0 99.0,88.0" fill="#c89468" stroke="#000" stroke-opacity="0.2" stroke-width="0.6"/><polygon points="88.0,88.0 99.0,99.0 99.0,110.0 88.0,99.0" fill="#c89468" stroke="#000" stroke-opacity="0.2" stroke-width="0.6"/></svg><div class="st"><svg width="16" height="16" viewBox="0 0 16 16"><rect x="0" y="0" width="16" height="16" rx="2.5" fill="#fff"/><path d="M8 0.9 L10.23 5.5 L15.1 6.05 L11.5 9.5 L12.4 14.4 L8 12.0 L3.6 14.4 L4.5 9.5 L0.9 6.05 L5.77 5.5 Z" fill="#a99af6" stroke="#333" stroke-width="1.05" stroke-linejoin="round"/></svg></div></div><div class="lb" style="left:380.5px;top:358px;color:#7b88ff">Herringbone -<br>Pine</div><div class="th" style="left:493px;top:293px"><svg width="63" height="63" viewBox="0 0 64 64" preserveAspectRatio="none"><rect width="64" height="64" fill="#7c7268"/><polygon points="-33.0,-27.5 -22.0,-16.5 -22.0,-5.5 -33.0,-16.5" fill="#6e665e" stroke="#000" stroke-opacity="0.3" stroke-width="0.6"/><polygon points="-22.0,-16.5 -33.0,-5.5 -33.0,5.5 -22.0,-5.5" fill="#7c7268" stroke="#000" stroke-opacity="0.3" stroke-width="0.6"/><polygon points="-33.0,-5.5 -22.0,5.5 -22.0,16.5 -33.0,5.5" fill="#7c7268" stroke="#000" stroke-opacity="0.3" stroke-width="0.6"/><polygon points="-22.0,5.5 -33.0,16.5 -33.0,27.5 -22.0,16.5" fill="#6e665e" stroke="#000" stroke-opacity="0.3" stroke-width="0.6"/><polygon points="-33.0,16.5 -22.0,27.5 -22.0,38.5 -33.0,27.5" fill="#6e665e" stroke="#000" stroke-opacity="0.3" stroke-width="0.6"/><polygon points="-22.0,27.5 -33.0,38.5 -33.0,49.5 -22.0,38.5" fill="#7c7268" stroke="#000" stroke-opacity="0.3" stroke-width="0.6"/><polygon points="-33.0,38.5 -22.0,49.5 -22.0,60.5 -33.0,49.5" fill="#7c7268" stroke="#000" stroke-opacity="0.3" stroke-width="0.6"/><polygon points="-22.0,49.5 -33.0,60.5 -33.0,71.5 -22.0,60.5" fill="#6e665e" stroke="#000" stroke-opacity="0.3" stroke-width="0.6"/><polygon points="-33.0,60.5 -22.0,71.5 -22.0,82.5 -33.0,71.5" fill="#887e74" stroke="#000" stroke-opacity="0.3" stroke-width="0.6"/><polygon points="-22.0,71.5 -33.0,82.5 -33.0,93.5 -22.0,82.5" fill="#6e665e" stroke="#000" stroke-opacity="0.3" stroke-width="0.6"/><polygon points="-33.0,82.5 -22.0,93.5 -22.0,104.5 -33.0,93.5" fill="#7c7268" stroke="#000" stroke-opacity="0.3" stroke-width="0.6"/><polygon points="-22.0,93.5 -33.0,104.5 -33.0,115.5 -22.0,104.5" fill="#887e74" stroke="#000" stroke-opacity="0.3" stroke-width="0.6"/><polygon points="-11.0,-33.0 -22.0,-22.0 -22.0,-11.0 -11.0,-22.0" fill="#645c54" stroke="#000" stroke-opacity="0.3" stroke-width="0.6"/><polygon points="-22.0,-22.0 -11.0,-11.0 -11.0,0.0 -22.0,-11.0" fill="#887e74" stroke="#000" stroke-opacity="0.3" stroke-width="0.6"/><polygon points="-11.0,-11.0 -22.0,0.0 -22.0,11.0 -11.0,0.0" fill="#887e74" stroke="#000" stroke-opacity="0.3" stroke-width="0.6"/><polygon points="-22.0,0.0 -11.0,11.0 -11.0,22.0 -22.0,11.0" fill="#645c54" stroke="#000" stroke-opacity="0.3" stroke-width="0.6"/><polygon points="-11.0,11.0 -22.0,22.0 -22.0,33.0 -11.0,22.0" fill="#887e74" stroke="#000" stroke-opacity="0.3" stroke-width="0.6"/><polygon points="-22.0,22.0 -11.0,33.0 -11.0,44.0 -22.0,33.0" fill="#887e74" stroke="#000" stroke-opacity="0.3" stroke-width="0.6"/><polygon points="-11.0,33.0 -22.0,44.0 -22.0,55.0 -11.0,44.0" fill="#6e665e" stroke="#000" stroke-opacity="0.3" stroke-width="0.6"/><polygon points="-22.0,44.0 -11.0,55.0 -11.0,66.0 -22.0,55.0" fill="#6e665e" stroke="#000" stroke-opacity="0.3" stroke-width="0.6"/><polygon points="-11.0,55.0 -22.0,66.0 -22.0,77.0 -11.0,66.0" fill="#887e74" stroke="#000" stroke-opacity="0.3" stroke-width="0.6"/><polygon points="-22.0,66.0 -11.0,77.0 -11.0,88.0 -22.0,77.0" fill="#887e74" stroke="#000" stroke-opacity="0.3" stroke-width="0.6"/><polygon points="-11.0,77.0 -22.0,88.0 -22.0,99.0 -11.0,88.0" fill="#6e665e" stroke="#000" stroke-opacity="0.3" stroke-width="0.6"/><polygon points="-22.0,88.0 -11.0,99.0 -11.0,110.0 -22.0,99.0" fill="#887e74" stroke="#000" stroke-opacity="0.3" stroke-width="0.6"/><polygon points="-11.0,-27.5 0.0,-16.5 0.0,-5.5 -11.0,-16.5" fill="#645c54" stroke="#000" stroke-opacity="0.3" stroke-width="0.6"/><polygon points="0.0,-16.5 -11.0,-5.5 -11.0,5.5 0.0,-5.5" fill="#6e665e" stroke="#000" stroke-opacity="0.3" stroke-width="0.6"/><polygon points="-11.0,-5.5 0.0,5.5 0.0,16.5 -11.0,5.5" fill="#645c54" stroke="#000" stroke-opacity="0.3" stroke-width="0.6"/><polygon points="0.0,5.5 -11.0,16.5 -11.0,27.5 0.0,16.5" fill="#645c54" stroke="#000" stroke-opacity="0.3" stroke-width="0.6"/><polygon points="-11.0,16.5 0.0,27.5 0.0,38.5 -11.0,27.5" fill="#645c54" stroke="#000" stroke-opacity="0.3" stroke-width="0.6"/><polygon points="0.0,27.5 -11.0,38.5 -11.0,49.5 0.0,38.5" fill="#7c7268" stroke="#000" stroke-opacity="0.3" stroke-width="0.6"/><polygon points="-11.0,38.5 0.0,49.5 0.0,60.5 -11.0,49.5" fill="#645c54" stroke="#000" stroke-opacity="0.3" stroke-width="0.6"/><polygon points="0.0,49.5 -11.0,60.5 -11.0,71.5 0.0,60.5" fill="#887e74" stroke="#000" stroke-opacity="0.3" stroke-width="0.6"/><polygon points="-11.0,60.5 0.0,71.5 0.0,82.5 -11.0,71.5" fill="#645c54" stroke="#000" stroke-opacity="0.3" stroke-width="0.6"/><polygon points="0.0,71.5 -11.0,82.5 -11.0,93.5 0.0,82.5" fill="#887e74" stroke="#000" stroke-opacity="0.3" stroke-width="0.6"/><polygon points="-11.0,82.5 0.0,93.5 0.0,104.5 -11.0,93.5" fill="#645c54" stroke="#000" stroke-opacity="0.3" stroke-width="0.6"/><polygon points="0.0,93.5 -11.0,104.5 -11.0,115.5 0.0,104.5" fill="#645c54" stroke="#000" stroke-opacity="0.3" stroke-width="0.6"/><polygon points="11.0,-33.0 0.0,-22.0 0.0,-11.0 11.0,-22.0" fill="#7c7268" stroke="#000" stroke-opacity="0.3" stroke-width="0.6"/><polygon points="0.0,-22.0 11.0,-11.0 11.0,0.0 0.0,-11.0" fill="#645c54" stroke="#000" stroke-opacity="0.3" stroke-width="0.6"/><polygon points="11.0,-11.0 0.0,0.0 0.0,11.0 11.0,0.0" fill="#7c7268" stroke="#000" stroke-opacity="0.3" stroke-width="0.6"/><polygon points="0.0,0.0 11.0,11.0 11.0,22.0 0.0,11.0" fill="#6e665e" stroke="#000" stroke-opacity="0.3" stroke-width="0.6"/><polygon points="11.0,11.0 0.0,22.0 0.0,33.0 11.0,22.0" fill="#6e665e" stroke="#000" stroke-opacity="0.3" stroke-width="0.6"/><polygon points="0.0,22.0 11.0,33.0 11.0,44.0 0.0,33.0" fill="#6e665e" stroke="#000" stroke-opacity="0.3" stroke-width="0.6"/><polygon points="11.0,33.0 0.0,44.0 0.0,55.0 11.0,44.0" fill="#7c7268" stroke="#000" stroke-opacity="0.3" stroke-width="0.6"/><polygon points="0.0,44.0 11.0,55.0 11.0,66.0 0.0,55.0" fill="#887e74" stroke="#000" stroke-opacity="0.3" stroke-width="0.6"/><polygon points="11.0,55.0 0.0,66.0 0.0,77.0 11.0,66.0" fill="#645c54" stroke="#000" stroke-opacity="0.3" stroke-width="0.6"/><polygon points="0.0,66.0 11.0,77.0 11.0,88.0 0.0,77.0" fill="#6e665e" stroke="#000" stroke-opacity="0.3" stroke-width="0.6"/><polygon points="11.0,77.0 0.0,88.0 0.0,99.0 11.0,88.0" fill="#7c7268" stroke="#000" stroke-opacity="0.3" stroke-width="0.6"/><polygon points="0.0,88.0 11.0,99.0 11.0,110.0 0.0,99.0" fill="#7c7268" stroke="#000" stroke-opacity="0.3" stroke-width="0.6"/><polygon points="11.0,-27.5 22.0,-16.5 22.0,-5.5 11.0,-16.5" fill="#645c54" stroke="#000" stroke-opacity="0.3" stroke-width="0.6"/><polygon points="22.0,-16.5 11.0,-5.5 11.0,5.5 22.0,-5.5" fill="#7c7268" stroke="#000" stroke-opacity="0.3" stroke-width="0.6"/><polygon points="11.0,-5.5 22.0,5.5 22.0,16.5 11.0,5.5" fill="#7c7268" stroke="#000" stroke-opacity="0.3" stroke-width="0.6"/><polygon points="22.0,5.5 11.0,16.5 11.0,27.5 22.0,16.5" fill="#645c54" stroke="#000" stroke-opacity="0.3" stroke-width="0.6"/><polygon points="11.0,16.5 22.0,27.5 22.0,38.5 11.0,27.5" fill="#887e74" stroke="#000" stroke-opacity="0.3" stroke-width="0.6"/><polygon points="22.0,27.5 11.0,38.5 11.0,49.5 22.0,38.5" fill="#645c54" stroke="#000" stroke-opacity="0.3" stroke-width="0.6"/><polygon points="11.0,38.5 22.0,49.5 22.0,60.5 11.0,49.5" fill="#6e665e" stroke="#000" stroke-opacity="0.3" stroke-width="0.6"/><polygon points="22.0,49.5 11.0,60.5 11.0,71.5 22.0,60.5" fill="#6e665e" stroke="#000" stroke-opacity="0.3" stroke-width="0.6"/><polygon points="11.0,60.5 22.0,71.5 22.0,82.5 11.0,71.5" fill="#887e74" stroke="#000" stroke-opacity="0.3" stroke-width="0.6"/><polygon points="22.0,71.5 11.0,82.5 11.0,93.5 22.0,82.5" fill="#7c7268" stroke="#000" stroke-opacity="0.3" stroke-width="0.6"/><polygon points="11.0,82.5 22.0,93.5 22.0,104.5 11.0,93.5" fill="#6e665e" stroke="#000" stroke-opacity="0.3" stroke-width="0.6"/><polygon points="22.0,93.5 11.0,104.5 11.0,115.5 22.0,104.5" fill="#887e74" stroke="#000" stroke-opacity="0.3" stroke-width="0.6"/><polygon points="33.0,-33.0 22.0,-22.0 22.0,-11.0 33.0,-22.0" fill="#887e74" stroke="#000" stroke-opacity="0.3" stroke-width="0.6"/><polygon points="22.0,-22.0 33.0,-11.0 33.0,0.0 22.0,-11.0" fill="#6e665e" stroke="#000" stroke-opacity="0.3" stroke-width="0.6"/><polygon points="33.0,-11.0 22.0,0.0 22.0,11.0 33.0,0.0" fill="#887e74" stroke="#000" stroke-opacity="0.3" stroke-width="0.6"/><polygon points="22.0,0.0 33.0,11.0 33.0,22.0 22.0,11.0" fill="#645c54" stroke="#000" stroke-opacity="0.3" stroke-width="0.6"/><polygon points="33.0,11.0 22.0,22.0 22.0,33.0 33.0,22.0" fill="#645c54" stroke="#000" stroke-opacity="0.3" stroke-width="0.6"/><polygon points="22.0,22.0 33.0,33.0 33.0,44.0 22.0,33.0" fill="#887e74" stroke="#000" stroke-opacity="0.3" stroke-width="0.6"/><polygon points="33.0,33.0 22.0,44.0 22.0,55.0 33.0,44.0" fill="#645c54" stroke="#000" stroke-opacity="0.3" stroke-width="0.6"/><polygon points="22.0,44.0 33.0,55.0 33.0,66.0 22.0,55.0" fill="#7c7268" stroke="#000" stroke-opacity="0.3" stroke-width="0.6"/><polygon points="33.0,55.0 22.0,66.0 22.0,77.0 33.0,66.0" fill="#887e74" stroke="#000" stroke-opacity="0.3" stroke-width="0.6"/><polygon points="22.0,66.0 33.0,77.0 33.0,88.0 22.0,77.0" fill="#645c54" stroke="#000" stroke-opacity="0.3" stroke-width="0.6"/><polygon points="33.0,77.0 22.0,88.0 22.0,99.0 33.0,88.0" fill="#6e665e" stroke="#000" stroke-opacity="0.3" stroke-width="0.6"/><polygon points="22.0,88.0 33.0,99.0 33.0,110.0 22.0,99.0" fill="#7c7268" stroke="#000" stroke-opacity="0.3" stroke-width="0.6"/><polygon points="33.0,-27.5 44.0,-16.5 44.0,-5.5 33.0,-16.5" fill="#645c54" stroke="#000" stroke-opacity="0.3" stroke-width="0.6"/><polygon points="44.0,-16.5 33.0,-5.5 33.0,5.5 44.0,-5.5" fill="#645c54" stroke="#000" stroke-opacity="0.3" stroke-width="0.6"/><polygon points="33.0,-5.5 44.0,5.5 44.0,16.5 33.0,5.5" fill="#645c54" stroke="#000" stroke-opacity="0.3" stroke-width="0.6"/><polygon points="44.0,5.5 33.0,16.5 33.0,27.5 44.0,16.5" fill="#7c7268" stroke="#000" stroke-opacity="0.3" stroke-width="0.6"/><polygon points="33.0,16.5 44.0,27.5 44.0,38.5 33.0,27.5" fill="#887e74" stroke="#000" stroke-opacity="0.3" stroke-width="0.6"/><polygon points="44.0,27.5 33.0,38.5 33.0,49.5 44.0,38.5" fill="#7c7268" stroke="#000" stroke-opacity="0.3" stroke-width="0.6"/><polygon points="33.0,38.5 44.0,49.5 44.0,60.5 33.0,49.5" fill="#887e74" stroke="#000" stroke-opacity="0.3" stroke-width="0.6"/><polygon points="44.0,49.5 33.0,60.5 33.0,71.5 44.0,60.5" fill="#7c7268" stroke="#000" stroke-opacity="0.3" stroke-width="0.6"/><polygon points="33.0,60.5 44.0,71.5 44.0,82.5 33.0,71.5" fill="#7c7268" stroke="#000" stroke-opacity="0.3" stroke-width="0.6"/><polygon points="44.0,71.5 33.0,82.5 33.0,93.5 44.0,82.5" fill="#645c54" stroke="#000" stroke-opacity="0.3" stroke-width="0.6"/><polygon points="33.0,82.5 44.0,93.5 44.0,104.5 33.0,93.5" fill="#7c7268" stroke="#000" stroke-opacity="0.3" stroke-width="0.6"/><polygon points="44.0,93.5 33.0,104.5 33.0,115.5 44.0,104.5" fill="#887e74" stroke="#000" stroke-opacity="0.3" stroke-width="0.6"/><polygon points="55.0,-33.0 44.0,-22.0 44.0,-11.0 55.0,-22.0" fill="#6e665e" stroke="#000" stroke-opacity="0.3" stroke-width="0.6"/><polygon points="44.0,-22.0 55.0,-11.0 55.0,0.0 44.0,-11.0" fill="#645c54" stroke="#000" stroke-opacity="0.3" stroke-width="0.6"/><polygon points="55.0,-11.0 44.0,0.0 44.0,11.0 55.0,0.0" fill="#645c54" stroke="#000" stroke-opacity="0.3" stroke-width="0.6"/><polygon points="44.0,0.0 55.0,11.0 55.0,22.0 44.0,11.0" fill="#645c54" stroke="#000" stroke-opacity="0.3" stroke-width="0.6"/><polygon points="55.0,11.0 44.0,22.0 44.0,33.0 55.0,22.0" fill="#7c7268" stroke="#000" stroke-opacity="0.3" stroke-width="0.6"/><polygon points="44.0,22.0 55.0,33.0 55.0,44.0 44.0,33.0" fill="#7c7268" stroke="#000" stroke-opacity="0.3" stroke-width="0.6"/><polygon points="55.0,33.0 44.0,44.0 44.0,55.0 55.0,44.0" fill="#645c54" stroke="#000" stroke-opacity="0.3" stroke-width="0.6"/><polygon points="44.0,44.0 55.0,55.0 55.0,66.0 44.0,55.0" fill="#7c7268" stroke="#000" stroke-opacity="0.3" stroke-width="0.6"/><polygon points="55.0,55.0 44.0,66.0 44.0,77.0 55.0,66.0" fill="#645c54" stroke="#000" stroke-opacity="0.3" stroke-width="0.6"/><polygon points="44.0,66.0 55.0,77.0 55.0,88.0 44.0,77.0" fill="#6e665e" stroke="#000" stroke-opacity="0.3" stroke-width="0.6"/><polygon points="55.0,77.0 44.0,88.0 44.0,99.0 55.0,88.0" fill="#645c54" stroke="#000" stroke-opacity="0.3" stroke-width="0.6"/><polygon points="44.0,88.0 55.0,99.0 55.0,110.0 44.0,99.0" fill="#887e74" stroke="#000" stroke-opacity="0.3" stroke-width="0.6"/><polygon points="55.0,-27.5 66.0,-16.5 66.0,-5.5 55.0,-16.5" fill="#7c7268" stroke="#000" stroke-opacity="0.3" stroke-width="0.6"/><polygon points="66.0,-16.5 55.0,-5.5 55.0,5.5 66.0,-5.5" fill="#7c7268" stroke="#000" stroke-opacity="0.3" stroke-width="0.6"/><polygon points="55.0,-5.5 66.0,5.5 66.0,16.5 55.0,5.5" fill="#7c7268" stroke="#000" stroke-opacity="0.3" stroke-width="0.6"/><polygon points="66.0,5.5 55.0,16.5 55.0,27.5 66.0,16.5" fill="#887e74" stroke="#000" stroke-opacity="0.3" stroke-width="0.6"/><polygon points="55.0,16.5 66.0,27.5 66.0,38.5 55.0,27.5" fill="#645c54" stroke="#000" stroke-opacity="0.3" stroke-width="0.6"/><polygon points="66.0,27.5 55.0,38.5 55.0,49.5 66.0,38.5" fill="#645c54" stroke="#000" stroke-opacity="0.3" stroke-width="0.6"/><polygon points="55.0,38.5 66.0,49.5 66.0,60.5 55.0,49.5" fill="#887e74" stroke="#000" stroke-opacity="0.3" stroke-width="0.6"/><polygon points="66.0,49.5 55.0,60.5 55.0,71.5 66.0,60.5" fill="#7c7268" stroke="#000" stroke-opacity="0.3" stroke-width="0.6"/><polygon points="55.0,60.5 66.0,71.5 66.0,82.5 55.0,71.5" fill="#887e74" stroke="#000" stroke-opacity="0.3" stroke-width="0.6"/><polygon points="66.0,71.5 55.0,82.5 55.0,93.5 66.0,82.5" fill="#645c54" stroke="#000" stroke-opacity="0.3" stroke-width="0.6"/><polygon points="55.0,82.5 66.0,93.5 66.0,104.5 55.0,93.5" fill="#887e74" stroke="#000" stroke-opacity="0.3" stroke-width="0.6"/><polygon points="66.0,93.5 55.0,104.5 55.0,115.5 66.0,104.5" fill="#7c7268" stroke="#000" stroke-opacity="0.3" stroke-width="0.6"/><polygon points="77.0,-33.0 66.0,-22.0 66.0,-11.0 77.0,-22.0" fill="#645c54" stroke="#000" stroke-opacity="0.3" stroke-width="0.6"/><polygon points="66.0,-22.0 77.0,-11.0 77.0,0.0 66.0,-11.0" fill="#645c54" stroke="#000" stroke-opacity="0.3" stroke-width="0.6"/><polygon points="77.0,-11.0 66.0,0.0 66.0,11.0 77.0,0.0" fill="#7c7268" stroke="#000" stroke-opacity="0.3" stroke-width="0.6"/><polygon points="66.0,0.0 77.0,11.0 77.0,22.0 66.0,11.0" fill="#887e74" stroke="#000" stroke-opacity="0.3" stroke-width="0.6"/><polygon points="77.0,11.0 66.0,22.0 66.0,33.0 77.0,22.0" fill="#645c54" stroke="#000" stroke-opacity="0.3" stroke-width="0.6"/><polygon points="66.0,22.0 77.0,33.0 77.0,44.0 66.0,33.0" fill="#7c7268" stroke="#000" stroke-opacity="0.3" stroke-width="0.6"/><polygon points="77.0,33.0 66.0,44.0 66.0,55.0 77.0,44.0" fill="#6e665e" stroke="#000" stroke-opacity="0.3" stroke-width="0.6"/><polygon points="66.0,44.0 77.0,55.0 77.0,66.0 66.0,55.0" fill="#887e74" stroke="#000" stroke-opacity="0.3" stroke-width="0.6"/><polygon points="77.0,55.0 66.0,66.0 66.0,77.0 77.0,66.0" fill="#6e665e" stroke="#000" stroke-opacity="0.3" stroke-width="0.6"/><polygon points="66.0,66.0 77.0,77.0 77.0,88.0 66.0,77.0" fill="#645c54" stroke="#000" stroke-opacity="0.3" stroke-width="0.6"/><polygon points="77.0,77.0 66.0,88.0 66.0,99.0 77.0,88.0" fill="#887e74" stroke="#000" stroke-opacity="0.3" stroke-width="0.6"/><polygon points="66.0,88.0 77.0,99.0 77.0,110.0 66.0,99.0" fill="#887e74" stroke="#000" stroke-opacity="0.3" stroke-width="0.6"/><polygon points="77.0,-27.5 88.0,-16.5 88.0,-5.5 77.0,-16.5" fill="#6e665e" stroke="#000" stroke-opacity="0.3" stroke-width="0.6"/><polygon points="88.0,-16.5 77.0,-5.5 77.0,5.5 88.0,-5.5" fill="#887e74" stroke="#000" stroke-opacity="0.3" stroke-width="0.6"/><polygon points="77.0,-5.5 88.0,5.5 88.0,16.5 77.0,5.5" fill="#645c54" stroke="#000" stroke-opacity="0.3" stroke-width="0.6"/><polygon points="88.0,5.5 77.0,16.5 77.0,27.5 88.0,16.5" fill="#887e74" stroke="#000" stroke-opacity="0.3" stroke-width="0.6"/><polygon points="77.0,16.5 88.0,27.5 88.0,38.5 77.0,27.5" fill="#7c7268" stroke="#000" stroke-opacity="0.3" stroke-width="0.6"/><polygon points="88.0,27.5 77.0,38.5 77.0,49.5 88.0,38.5" fill="#887e74" stroke="#000" stroke-opacity="0.3" stroke-width="0.6"/><polygon points="77.0,38.5 88.0,49.5 88.0,60.5 77.0,49.5" fill="#6e665e" stroke="#000" stroke-opacity="0.3" stroke-width="0.6"/><polygon points="88.0,49.5 77.0,60.5 77.0,71.5 88.0,60.5" fill="#887e74" stroke="#000" stroke-opacity="0.3" stroke-width="0.6"/><polygon points="77.0,60.5 88.0,71.5 88.0,82.5 77.0,71.5" fill="#7c7268" stroke="#000" stroke-opacity="0.3" stroke-width="0.6"/><polygon points="88.0,71.5 77.0,82.5 77.0,93.5 88.0,82.5" fill="#6e665e" stroke="#000" stroke-opacity="0.3" stroke-width="0.6"/><polygon points="77.0,82.5 88.0,93.5 88.0,104.5 77.0,93.5" fill="#7c7268" stroke="#000" stroke-opacity="0.3" stroke-width="0.6"/><polygon points="88.0,93.5 77.0,104.5 77.0,115.5 88.0,104.5" fill="#645c54" stroke="#000" stroke-opacity="0.3" stroke-width="0.6"/><polygon points="99.0,-33.0 88.0,-22.0 88.0,-11.0 99.0,-22.0" fill="#887e74" stroke="#000" stroke-opacity="0.3" stroke-width="0.6"/><polygon points="88.0,-22.0 99.0,-11.0 99.0,0.0 88.0,-11.0" fill="#6e665e" stroke="#000" stroke-opacity="0.3" stroke-width="0.6"/><polygon points="99.0,-11.0 88.0,0.0 88.0,11.0 99.0,0.0" fill="#887e74" stroke="#000" stroke-opacity="0.3" stroke-width="0.6"/><polygon points="88.0,0.0 99.0,11.0 99.0,22.0 88.0,11.0" fill="#7c7268" stroke="#000" stroke-opacity="0.3" stroke-width="0.6"/><polygon points="99.0,11.0 88.0,22.0 88.0,33.0 99.0,22.0" fill="#887e74" stroke="#000" stroke-opacity="0.3" stroke-width="0.6"/><polygon points="88.0,22.0 99.0,33.0 99.0,44.0 88.0,33.0" fill="#887e74" stroke="#000" stroke-opacity="0.3" stroke-width="0.6"/><polygon points="99.0,33.0 88.0,44.0 88.0,55.0 99.0,44.0" fill="#645c54" stroke="#000" stroke-opacity="0.3" stroke-width="0.6"/><polygon points="88.0,44.0 99.0,55.0 99.0,66.0 88.0,55.0" fill="#645c54" stroke="#000" stroke-opacity="0.3" stroke-width="0.6"/><polygon points="99.0,55.0 88.0,66.0 88.0,77.0 99.0,66.0" fill="#7c7268" stroke="#000" stroke-opacity="0.3" stroke-width="0.6"/><polygon points="88.0,66.0 99.0,77.0 99.0,88.0 88.0,77.0" fill="#645c54" stroke="#000" stroke-opacity="0.3" stroke-width="0.6"/><polygon points="99.0,77.0 88.0,88.0 88.0,99.0 99.0,88.0" fill="#7c7268" stroke="#000" stroke-opacity="0.3" stroke-width="0.6"/><polygon points="88.0,88.0 99.0,99.0 99.0,110.0 88.0,99.0" fill="#7c7268" stroke="#000" stroke-opacity="0.3" stroke-width="0.6"/></svg><div class="st"><svg width="16" height="16" viewBox="0 0 16 16"><rect x="0" y="0" width="16" height="16" rx="2.5" fill="#fff"/><path d="M8 0.9 L10.23 5.5 L15.1 6.05 L11.5 9.5 L12.4 14.4 L8 12.0 L3.6 14.4 L4.5 9.5 L0.9 6.05 L5.77 5.5 Z" fill="#a99af6" stroke="#333" stroke-width="1.05" stroke-linejoin="round"/></svg></div></div><div class="lb" style="left:476.5px;top:358px;color:#7b88ff">Herringbone -<br>Smoked Cedar</div><div class="th" style="left:589px;top:293px"><svg width="63" height="63" viewBox="0 0 64 64" preserveAspectRatio="none"><rect width="64" height="64" fill="#f2f2f2"/><circle cx="23.1" cy="30.8" r="0.7" fill="#e0e0e0"/><circle cx="0.4" cy="54.7" r="0.8" fill="#d8d8d8"/><circle cx="40.6" cy="0.6" r="0.6" fill="#e0e0e0"/><circle cx="42.7" cy="60.9" r="0.8" fill="#d8d8d8"/><circle cx="50.5" cy="61.2" r="0.6" fill="#d8d8d8"/><circle cx="51.7" cy="42.7" r="0.4" fill="#e0e0e0"/><circle cx="38.3" cy="45.0" r="1.0" fill="#e0e0e0"/><circle cx="23.2" cy="26.9" r="0.5" fill="#e0e0e0"/><circle cx="27.1" cy="41.2" r="1.0" fill="#e0e0e0"/><circle cx="37.0" cy="18.1" r="0.5" fill="#d8d8d8"/><circle cx="33.5" cy="15.0" r="0.5" fill="#e0e0e0"/><circle cx="20.3" cy="29.0" r="0.5" fill="#e0e0e0"/><circle cx="46.6" cy="0.8" r="0.9" fill="#e0e0e0"/><circle cx="0.9" cy="53.8" r="0.8" fill="#d8d8d8"/><circle cx="29.1" cy="39.2" r="0.7" fill="#d8d8d8"/><circle cx="62.0" cy="45.3" r="1.0" fill="#e0e0e0"/><circle cx="2.1" cy="2.8" r="0.8" fill="#ffffff"/><circle cx="20.4" cy="32.7" r="1.0" fill="#ffffff"/><circle cx="41.9" cy="52.3" r="0.5" fill="#d8d8d8"/><circle cx="45.3" cy="34.7" r="0.5" fill="#e0e0e0"/><circle cx="40.0" cy="58.8" r="0.5" fill="#ffffff"/><circle cx="3.1" cy="54.2" r="0.6" fill="#ffffff"/><circle cx="44.4" cy="15.3" r="0.7" fill="#d8d8d8"/><circle cx="33.6" cy="58.8" r="0.5" fill="#d8d8d8"/><circle cx="17.1" cy="26.0" r="0.6" fill="#ffffff"/><circle cx="29.8" cy="16.6" r="0.4" fill="#ffffff"/><circle cx="12.7" cy="42.7" r="1.0" fill="#ffffff"/><circle cx="24.6" cy="52.0" r="0.5" fill="#ffffff"/><circle cx="6.9" cy="7.4" r="0.7" fill="#e0e0e0"/><circle cx="15.2" cy="56.5" r="0.9" fill="#e0e0e0"/><circle cx="32.1" cy="25.3" r="0.6" fill="#e0e0e0"/><circle cx="52.8" cy="55.1" r="0.5" fill="#e0e0e0"/><circle cx="54.2" cy="31.2" r="0.7" fill="#d8d8d8"/><circle cx="54.2" cy="48.1" r="0.9" fill="#ffffff"/><circle cx="31.9" cy="34.2" r="0.7" fill="#ffffff"/><circle cx="28.3" cy="8.5" r="0.7" fill="#ffffff"/><circle cx="63.4" cy="6.9" r="0.8" fill="#d8d8d8"/><circle cx="29.6" cy="51.6" r="0.8" fill="#d8d8d8"/><circle cx="32.9" cy="34.0" r="0.5" fill="#e0e0e0"/><circle cx="25.8" cy="25.0" r="0.5" fill="#e0e0e0"/><circle cx="13.4" cy="0.8" r="0.4" fill="#e0e0e0"/><circle cx="25.3" cy="39.9" r="0.4" fill="#ffffff"/><circle cx="1.5" cy="40.0" r="0.5" fill="#ffffff"/><circle cx="44.3" cy="14.2" r="0.7" fill="#ffffff"/><circle cx="54.7" cy="42.4" r="0.8" fill="#ffffff"/><circle cx="60.4" cy="17.1" r="0.4" fill="#ffffff"/><circle cx="51.1" cy="32.7" r="0.5" fill="#ffffff"/><circle cx="30.8" cy="8.7" r="0.7" fill="#ffffff"/><circle cx="58.0" cy="7.0" r="0.4" fill="#e0e0e0"/><circle cx="46.7" cy="63.8" r="0.9" fill="#d8d8d8"/><circle cx="9.9" cy="11.9" r="0.8" fill="#ffffff"/><circle cx="7.5" cy="60.7" r="0.5" fill="#d8d8d8"/><circle cx="36.3" cy="5.8" r="1.0" fill="#e0e0e0"/><circle cx="5.0" cy="2.1" r="0.5" fill="#ffffff"/><circle cx="46.4" cy="10.1" r="0.5" fill="#d8d8d8"/><circle cx="48.2" cy="7.4" r="0.9" fill="#e0e0e0"/><circle cx="16.6" cy="39.1" r="0.8" fill="#e0e0e0"/><circle cx="47.6" cy="24.0" r="0.4" fill="#d8d8d8"/><circle cx="52.9" cy="13.6" r="0.6" fill="#d8d8d8"/><circle cx="38.0" cy="26.4" r="0.8" fill="#ffffff"/><circle cx="21.9" cy="33.1" r="0.6" fill="#d8d8d8"/><circle cx="41.7" cy="26.7" r="1.0" fill="#d8d8d8"/><circle cx="25.9" cy="24.1" r="0.9" fill="#ffffff"/><circle cx="54.3" cy="28.6" r="1.0" fill="#d8d8d8"/><circle cx="57.4" cy="0.0" r="0.8" fill="#d8d8d8"/><circle cx="42.6" cy="18.8" r="0.8" fill="#ffffff"/><circle cx="26.4" cy="53.9" r="0.4" fill="#ffffff"/><circle cx="52.2" cy="0.1" r="0.5" fill="#ffffff"/><circle cx="39.3" cy="37.5" r="0.6" fill="#d8d8d8"/><circle cx="38.2" cy="60.4" r="0.7" fill="#e0e0e0"/><circle cx="34.2" cy="58.0" r="0.9" fill="#d8d8d8"/><circle cx="39.5" cy="19.1" r="0.6" fill="#ffffff"/><circle cx="28.4" cy="46.4" r="0.4" fill="#ffffff"/><circle cx="16.7" cy="19.6" r="0.8" fill="#ffffff"/><circle cx="50.3" cy="1.4" r="0.5" fill="#e0e0e0"/><circle cx="17.5" cy="55.4" r="0.6" fill="#d8d8d8"/><circle cx="17.4" cy="0.9" r="0.8" fill="#ffffff"/><circle cx="12.7" cy="5.3" r="0.7" fill="#ffffff"/><circle cx="62.1" cy="59.4" r="0.6" fill="#d8d8d8"/><circle cx="47.6" cy="53.2" r="1.0" fill="#d8d8d8"/><circle cx="20.3" cy="10.9" r="0.7" fill="#e0e0e0"/><circle cx="23.3" cy="13.7" r="0.8" fill="#ffffff"/><circle cx="33.5" cy="34.1" r="0.6" fill="#ffffff"/><circle cx="1.3" cy="6.3" r="0.8" fill="#e0e0e0"/><circle cx="12.5" cy="7.6" r="0.7" fill="#d8d8d8"/><circle cx="0.2" cy="4.2" r="0.6" fill="#e0e0e0"/><circle cx="55.7" cy="21.0" r="0.8" fill="#e0e0e0"/><circle cx="59.4" cy="39.0" r="0.6" fill="#d8d8d8"/><circle cx="42.4" cy="11.1" r="0.8" fill="#e0e0e0"/><circle cx="62.0" cy="9.5" r="0.8" fill="#d8d8d8"/><circle cx="59.2" cy="48.5" r="0.8" fill="#d8d8d8"/><circle cx="44.8" cy="60.0" r="0.9" fill="#e0e0e0"/><circle cx="56.6" cy="21.6" r="0.9" fill="#e0e0e0"/><circle cx="12.5" cy="16.0" r="0.4" fill="#d8d8d8"/><circle cx="22.4" cy="28.1" r="0.7" fill="#ffffff"/><circle cx="26.2" cy="37.7" r="0.7" fill="#ffffff"/><circle cx="15.3" cy="15.7" r="0.5" fill="#d8d8d8"/><circle cx="16.8" cy="23.1" r="1.0" fill="#e0e0e0"/><circle cx="62.8" cy="53.5" r="0.5" fill="#e0e0e0"/><circle cx="26.9" cy="40.5" r="0.8" fill="#d8d8d8"/><circle cx="18.6" cy="41.1" r="1.0" fill="#e0e0e0"/><circle cx="56.1" cy="52.4" r="0.5" fill="#ffffff"/><circle cx="41.2" cy="40.8" r="0.4" fill="#ffffff"/><circle cx="58.5" cy="42.3" r="0.4" fill="#d8d8d8"/><circle cx="57.2" cy="12.9" r="0.5" fill="#e0e0e0"/><circle cx="17.5" cy="29.5" r="1.0" fill="#ffffff"/><circle cx="19.8" cy="44.4" r="0.9" fill="#d8d8d8"/><circle cx="2.6" cy="33.5" r="0.5" fill="#e0e0e0"/><circle cx="20.7" cy="22.4" r="0.5" fill="#e0e0e0"/><circle cx="3.3" cy="40.4" r="0.5" fill="#e0e0e0"/><circle cx="25.4" cy="10.0" r="0.6" fill="#ffffff"/><circle cx="3.8" cy="22.3" r="0.4" fill="#e0e0e0"/><circle cx="5.1" cy="20.6" r="0.6" fill="#ffffff"/><circle cx="19.6" cy="62.8" r="0.9" fill="#d8d8d8"/><circle cx="39.3" cy="57.2" r="0.8" fill="#d8d8d8"/><circle cx="37.8" cy="55.8" r="0.7" fill="#d8d8d8"/><circle cx="47.2" cy="35.8" r="0.9" fill="#d8d8d8"/><circle cx="38.8" cy="51.4" r="0.8" fill="#ffffff"/><circle cx="29.5" cy="15.9" r="0.5" fill="#ffffff"/><circle cx="18.5" cy="6.2" r="1.0" fill="#ffffff"/><circle cx="50.7" cy="24.0" r="0.9" fill="#e0e0e0"/><circle cx="14.9" cy="61.1" r="0.9" fill="#d8d8d8"/><circle cx="36.8" cy="0.9" r="0.8" fill="#d8d8d8"/><circle cx="10.0" cy="9.5" r="0.4" fill="#e0e0e0"/><circle cx="23.1" cy="14.8" r="0.5" fill="#e0e0e0"/><circle cx="44.8" cy="40.0" r="0.6" fill="#ffffff"/><circle cx="37.9" cy="34.7" r="0.5" fill="#e0e0e0"/><circle cx="26.2" cy="9.8" r="0.8" fill="#e0e0e0"/><circle cx="24.5" cy="22.8" r="0.6" fill="#e0e0e0"/><circle cx="59.2" cy="51.9" r="0.7" fill="#ffffff"/><circle cx="11.5" cy="27.9" r="1.0" fill="#ffffff"/><circle cx="24.0" cy="26.4" r="0.4" fill="#ffffff"/><circle cx="15.6" cy="42.2" r="1.0" fill="#e0e0e0"/><circle cx="4.3" cy="38.1" r="0.7" fill="#d8d8d8"/><circle cx="18.2" cy="6.1" r="0.6" fill="#e0e0e0"/><circle cx="39.2" cy="32.6" r="0.6" fill="#d8d8d8"/><circle cx="48.7" cy="27.9" r="0.6" fill="#e0e0e0"/><circle cx="15.1" cy="34.7" r="0.4" fill="#e0e0e0"/><circle cx="29.2" cy="15.5" r="0.7" fill="#e0e0e0"/><circle cx="23.1" cy="20.2" r="0.7" fill="#d8d8d8"/><circle cx="50.9" cy="46.1" r="0.5" fill="#ffffff"/><circle cx="63.0" cy="28.1" r="0.9" fill="#e0e0e0"/><circle cx="10.2" cy="58.6" r="0.8" fill="#ffffff"/><circle cx="49.5" cy="5.6" r="0.6" fill="#ffffff"/><circle cx="39.1" cy="8.1" r="0.8" fill="#e0e0e0"/><circle cx="43.1" cy="25.7" r="0.9" fill="#ffffff"/><circle cx="12.1" cy="51.1" r="0.6" fill="#e0e0e0"/><circle cx="10.2" cy="35.9" r="1.0" fill="#ffffff"/><circle cx="19.7" cy="51.5" r="0.7" fill="#e0e0e0"/><circle cx="51.7" cy="0.1" r="0.8" fill="#e0e0e0"/><circle cx="55.1" cy="47.7" r="0.7" fill="#e0e0e0"/><circle cx="56.3" cy="59.3" r="0.7" fill="#e0e0e0"/><circle cx="20.2" cy="37.7" r="0.4" fill="#e0e0e0"/><circle cx="10.5" cy="34.1" r="0.6" fill="#d8d8d8"/><circle cx="1.5" cy="21.6" r="0.4" fill="#d8d8d8"/><circle cx="43.8" cy="31.2" r="0.9" fill="#e0e0e0"/><circle cx="41.0" cy="24.3" r="0.7" fill="#e0e0e0"/><circle cx="56.7" cy="25.9" r="0.6" fill="#e0e0e0"/><circle cx="45.3" cy="17.3" r="0.4" fill="#d8d8d8"/><circle cx="53.3" cy="19.7" r="0.5" fill="#ffffff"/><circle cx="0.8" cy="26.7" r="0.8" fill="#e0e0e0"/><circle cx="24.0" cy="12.6" r="0.9" fill="#ffffff"/><circle cx="10.2" cy="19.5" r="0.4" fill="#e0e0e0"/><circle cx="48.8" cy="42.0" r="0.7" fill="#e0e0e0"/><circle cx="60.3" cy="34.2" r="0.7" fill="#d8d8d8"/><circle cx="35.9" cy="48.4" r="0.4" fill="#d8d8d8"/><circle cx="32.1" cy="4.6" r="0.5" fill="#ffffff"/><circle cx="28.5" cy="28.5" r="0.8" fill="#e0e0e0"/><circle cx="8.0" cy="48.4" r="0.9" fill="#ffffff"/><circle cx="6.0" cy="39.1" r="0.6" fill="#d8d8d8"/><circle cx="31.0" cy="5.9" r="0.5" fill="#e0e0e0"/><circle cx="13.9" cy="9.9" r="0.4" fill="#e0e0e0"/><circle cx="47.9" cy="40.7" r="0.4" fill="#d8d8d8"/><circle cx="10.0" cy="6.5" r="0.6" fill="#d8d8d8"/><circle cx="23.3" cy="54.8" r="0.7" fill="#d8d8d8"/><circle cx="0.7" cy="2.4" r="0.9" fill="#ffffff"/><circle cx="3.3" cy="29.7" r="0.6" fill="#d8d8d8"/><circle cx="28.3" cy="23.9" r="0.7" fill="#d8d8d8"/><circle cx="7.4" cy="54.0" r="1.0" fill="#d8d8d8"/><circle cx="37.7" cy="50.3" r="0.4" fill="#d8d8d8"/><circle cx="36.3" cy="63.9" r="0.8" fill="#ffffff"/><circle cx="17.4" cy="37.7" r="0.4" fill="#d8d8d8"/><circle cx="53.2" cy="57.5" r="0.7" fill="#ffffff"/><circle cx="12.7" cy="52.1" r="0.5" fill="#ffffff"/><circle cx="40.2" cy="15.4" r="0.7" fill="#ffffff"/><circle cx="57.5" cy="28.2" r="0.6" fill="#e0e0e0"/><circle cx="19.6" cy="62.4" r="0.8" fill="#d8d8d8"/><circle cx="15.2" cy="52.8" r="0.7" fill="#e0e0e0"/><circle cx="43.2" cy="54.7" r="0.7" fill="#d8d8d8"/><circle cx="24.2" cy="6.5" r="0.7" fill="#ffffff"/><circle cx="26.8" cy="23.3" r="0.5" fill="#d8d8d8"/><circle cx="5.7" cy="47.9" r="0.6" fill="#ffffff"/><circle cx="30.7" cy="61.3" r="1.0" fill="#e0e0e0"/><circle cx="33.0" cy="37.1" r="0.7" fill="#e0e0e0"/><circle cx="28.2" cy="3.4" r="0.9" fill="#d8d8d8"/><circle cx="42.9" cy="50.8" r="0.4" fill="#e0e0e0"/><circle cx="42.9" cy="21.5" r="0.5" fill="#ffffff"/><circle cx="6.5" cy="32.3" r="1.0" fill="#e0e0e0"/><circle cx="41.0" cy="55.6" r="0.4" fill="#e0e0e0"/><circle cx="22.1" cy="37.6" r="0.6" fill="#ffffff"/><circle cx="13.8" cy="49.0" r="0.7" fill="#d8d8d8"/><circle cx="3.9" cy="30.6" r="0.7" fill="#e0e0e0"/><circle cx="58.7" cy="0.5" r="0.9" fill="#d8d8d8"/><circle cx="19.1" cy="29.9" r="0.6" fill="#d8d8d8"/><circle cx="20.8" cy="36.8" r="0.6" fill="#d8d8d8"/><circle cx="45.2" cy="7.2" r="0.9" fill="#d8d8d8"/><circle cx="44.2" cy="35.3" r="0.4" fill="#ffffff"/><circle cx="33.0" cy="43.0" r="0.7" fill="#d8d8d8"/><circle cx="12.3" cy="13.9" r="0.7" fill="#ffffff"/><circle cx="28.1" cy="58.1" r="0.5" fill="#e0e0e0"/><circle cx="32.5" cy="46.5" r="1.0" fill="#ffffff"/><circle cx="50.4" cy="11.6" r="0.8" fill="#d8d8d8"/><circle cx="36.7" cy="8.0" r="0.9" fill="#ffffff"/><circle cx="60.3" cy="30.0" r="0.6" fill="#ffffff"/><circle cx="56.0" cy="57.4" r="0.6" fill="#ffffff"/><circle cx="40.5" cy="20.1" r="0.9" fill="#d8d8d8"/><circle cx="28.8" cy="4.6" r="0.9" fill="#e0e0e0"/><circle cx="48.3" cy="5.9" r="0.9" fill="#d8d8d8"/><circle cx="9.8" cy="34.8" r="0.9" fill="#ffffff"/><circle cx="13.0" cy="29.4" r="0.4" fill="#d8d8d8"/><circle cx="60.1" cy="15.5" r="0.4" fill="#ffffff"/><circle cx="27.1" cy="39.7" r="0.4" fill="#ffffff"/><circle cx="3.4" cy="6.2" r="1.0" fill="#ffffff"/><circle cx="27.9" cy="1.5" r="0.8" fill="#e0e0e0"/><circle cx="12.6" cy="51.4" r="0.9" fill="#e0e0e0"/><circle cx="6.3" cy="39.1" r="0.7" fill="#ffffff"/><circle cx="35.2" cy="2.6" r="0.5" fill="#e0e0e0"/><circle cx="37.8" cy="28.3" r="0.6" fill="#e0e0e0"/><circle cx="50.1" cy="42.9" r="0.8" fill="#e0e0e0"/><circle cx="11.4" cy="49.1" r="0.8" fill="#d8d8d8"/><circle cx="31.4" cy="63.5" r="0.5" fill="#ffffff"/><circle cx="62.1" cy="23.3" r="0.7" fill="#e0e0e0"/><circle cx="45.4" cy="58.3" r="0.6" fill="#e0e0e0"/><circle cx="19.2" cy="59.0" r="0.8" fill="#e0e0e0"/><circle cx="33.3" cy="5.4" r="0.7" fill="#e0e0e0"/><circle cx="54.0" cy="30.1" r="0.4" fill="#e0e0e0"/><circle cx="52.7" cy="24.3" r="0.7" fill="#ffffff"/><circle cx="34.0" cy="34.8" r="0.5" fill="#e0e0e0"/><circle cx="13.5" cy="39.3" r="0.7" fill="#ffffff"/><circle cx="4.7" cy="58.8" r="1.0" fill="#ffffff"/><circle cx="11.6" cy="32.0" r="1.0" fill="#e0e0e0"/><circle cx="17.4" cy="1.6" r="0.4" fill="#d8d8d8"/><circle cx="3.3" cy="23.9" r="0.8" fill="#d8d8d8"/><circle cx="41.3" cy="49.8" r="0.7" fill="#ffffff"/><circle cx="29.2" cy="43.6" r="0.6" fill="#d8d8d8"/><circle cx="2.1" cy="24.3" r="0.6" fill="#e0e0e0"/><circle cx="58.4" cy="26.1" r="0.9" fill="#d8d8d8"/><circle cx="19.6" cy="56.2" r="0.5" fill="#e0e0e0"/><circle cx="45.0" cy="1.9" r="0.6" fill="#e0e0e0"/><circle cx="32.2" cy="5.4" r="0.9" fill="#d8d8d8"/><circle cx="2.2" cy="24.5" r="0.7" fill="#d8d8d8"/><circle cx="4.8" cy="1.0" r="0.6" fill="#d8d8d8"/><circle cx="50.1" cy="31.4" r="1.0" fill="#d8d8d8"/><circle cx="37.1" cy="5.8" r="0.6" fill="#ffffff"/><circle cx="26.8" cy="22.6" r="0.5" fill="#ffffff"/><circle cx="2.1" cy="26.8" r="1.0" fill="#ffffff"/><circle cx="39.8" cy="35.2" r="0.6" fill="#d8d8d8"/><circle cx="33.7" cy="4.1" r="0.5" fill="#d8d8d8"/><circle cx="22.7" cy="23.2" r="0.7" fill="#ffffff"/><circle cx="45.1" cy="51.9" r="0.8" fill="#ffffff"/><circle cx="29.9" cy="54.4" r="0.8" fill="#d8d8d8"/><circle cx="4.8" cy="51.2" r="1.0" fill="#e0e0e0"/><circle cx="19.0" cy="14.3" r="1.0" fill="#d8d8d8"/><circle cx="5.6" cy="33.7" r="0.8" fill="#d8d8d8"/><circle cx="26.0" cy="53.5" r="0.7" fill="#e0e0e0"/><circle cx="12.8" cy="1.7" r="0.5" fill="#d8d8d8"/><circle cx="8.8" cy="11.3" r="0.9" fill="#d8d8d8"/><circle cx="51.0" cy="16.9" r="0.6" fill="#d8d8d8"/><circle cx="1.7" cy="48.0" r="0.7" fill="#e0e0e0"/><circle cx="53.4" cy="55.0" r="0.8" fill="#e0e0e0"/><circle cx="29.7" cy="22.7" r="0.7" fill="#ffffff"/><circle cx="23.2" cy="11.6" r="0.9" fill="#ffffff"/><circle cx="22.8" cy="31.7" r="0.5" fill="#e0e0e0"/><circle cx="31.4" cy="2.5" r="0.7" fill="#e0e0e0"/><circle cx="54.3" cy="16.9" r="0.5" fill="#e0e0e0"/><circle cx="7.1" cy="8.8" r="0.6" fill="#ffffff"/><circle cx="52.6" cy="47.3" r="0.8" fill="#e0e0e0"/><circle cx="54.0" cy="56.8" r="0.9" fill="#d8d8d8"/><circle cx="39.0" cy="2.6" r="0.9" fill="#d8d8d8"/><circle cx="36.1" cy="56.6" r="0.9" fill="#d8d8d8"/><circle cx="31.3" cy="26.8" r="0.9" fill="#ffffff"/><circle cx="15.2" cy="47.2" r="0.4" fill="#d8d8d8"/><circle cx="30.5" cy="2.3" r="0.8" fill="#e0e0e0"/><circle cx="45.4" cy="15.5" r="0.4" fill="#ffffff"/><circle cx="21.0" cy="17.0" r="0.5" fill="#ffffff"/><circle cx="25.6" cy="34.2" r="0.4" fill="#ffffff"/><circle cx="35.9" cy="19.1" r="0.8" fill="#ffffff"/><circle cx="57.7" cy="2.7" r="0.5" fill="#ffffff"/><circle cx="58.4" cy="61.7" r="0.8" fill="#d8d8d8"/><circle cx="51.7" cy="42.4" r="0.5" fill="#d8d8d8"/><circle cx="12.0" cy="37.6" r="0.7" fill="#ffffff"/><circle cx="49.1" cy="48.4" r="0.7" fill="#e0e0e0"/><circle cx="57.6" cy="14.7" r="0.9" fill="#d8d8d8"/><circle cx="7.9" cy="14.4" r="0.8" fill="#e0e0e0"/><circle cx="15.6" cy="18.3" r="0.5" fill="#ffffff"/><circle cx="51.5" cy="25.0" r="1.0" fill="#ffffff"/><circle cx="15.4" cy="43.1" r="0.7" fill="#e0e0e0"/><circle cx="55.9" cy="18.2" r="1.0" fill="#ffffff"/><circle cx="15.6" cy="16.5" r="0.5" fill="#e0e0e0"/><circle cx="58.6" cy="38.1" r="0.8" fill="#d8d8d8"/></svg><div class="st"><svg width="16" height="16" viewBox="0 0 16 16"><rect x="0" y="0" width="16" height="16" rx="2.5" fill="#fff"/><path d="M8 0.9 L10.23 5.5 L15.1 6.05 L11.5 9.5 L12.4 14.4 L8 12.0 L3.6 14.4 L4.5 9.5 L0.9 6.05 L5.77 5.5 Z" fill="#a99af6" stroke="#333" stroke-width="1.05" stroke-linejoin="round"/></svg></div><div style="position:absolute;left:51px;top:1px;width:12px;height:12px"><svg width="12" height="12" viewBox="0 0 14 14"><path d="M7 1.5 C10.5 1.5 12.5 3.5 12.5 6 C12.5 8 11 8.5 10 8.3 C9 8.1 8.6 9 9.2 10 C9.8 11.2 9 12.5 7 12.5 C3.8 12.5 1.5 10.2 1.5 7 C1.5 3.8 3.8 1.5 7 1.5 Z" fill="#f4e060" stroke="#222" stroke-width="1"/><circle cx="4.5" cy="6" r="1.2" fill="#e02020"/><circle cx="7" cy="4" r="1.1" fill="#2040e0"/><circle cx="10" cy="5" r="1.1" fill="#20a020"/><circle cx="5" cy="9.3" r="1.1" fill="#a020c0"/></svg></div><div class="d3"><span style="display:block;width:20px;margin-left:-4.5px;text-align:center;transform:scaleX(0.8)">3D</span></div></div><div class="lb" style="left:572.5px;top:358px;color:#7b88ff">Hexagon - Gloss</div><div class="th" style="left:685px;top:293px"><svg width="63" height="63" viewBox="0 0 64 64" preserveAspectRatio="none"><defs><linearGradient id="hm" x1="1" y1="0" x2="0" y2="1"><stop offset="0" stop-color="#1c5aa0"/><stop offset="1" stop-color="#5a8cc4"/></linearGradient></defs>
<filter id="hmb"><feGaussianBlur stdDeviation="1.6"/></filter>
<rect width="64" height="64" fill="url(#hm)"/>
<g fill="#eef2f8" filter="url(#hmb)"><ellipse cx="12" cy="24" rx="9" ry="7"/><ellipse cx="40" cy="30" rx="12" ry="6" transform="rotate(20 40 30)"/><ellipse cx="12" cy="54" rx="14" ry="9"/><ellipse cx="30" cy="42" rx="5" ry="4"/><ellipse cx="44" cy="56" rx="8" ry="6"/><ellipse cx="26" cy="8" rx="4" ry="6"/><ellipse cx="46" cy="10" rx="3" ry="5"/></g></svg><div class="st"><svg width="16" height="16" viewBox="0 0 16 16"><rect x="0" y="0" width="16" height="16" rx="2.5" fill="#fff"/><path d="M8 0.9 L10.23 5.5 L15.1 6.05 L11.5 9.5 L12.4 14.4 L8 12.0 L3.6 14.4 L4.5 9.5 L0.9 6.05 L5.77 5.5 Z" fill="#a99af6" stroke="#333" stroke-width="1.05" stroke-linejoin="round"/></svg></div></div><div class="lb" style="left:668.5px;top:358px;color:#7b88ff">Himmel-01</div><div class="th" style="left:781px;top:293px"><svg width="63" height="63" viewBox="0 0 64 64" preserveAspectRatio="none"><defs><radialGradient id="k7" cx="0.6" cy="0.45" r="0.75"><stop offset="0" stop-color="#f2e8d0"/><stop offset="0.65" stop-color="#dccaa0"/><stop offset="1" stop-color="#7a5a30"/></radialGradient>
<filter id="k7b"><feGaussianBlur stdDeviation="0.6"/></filter></defs>
<rect width="64" height="64" fill="url(#k7)"/>
<g filter="url(#k7b)">
<g fill="#6a8a38"><polygon points="0,44 34,22 38,26 0,56"/><polygon points="0,64 44,34 48,40 14,64"/><polygon points="2,30 30,30 26,36"/><polygon points="10,64 30,46 40,52 24,64"/></g>
<g fill="#4a6a28"><polygon points="0,52 36,30 38,34 0,60"/></g>
<g fill="#c24a2e">
<ellipse cx="34" cy="8" rx="6" ry="5" transform="rotate(-30 34 8)"/>
<ellipse cx="38" cy="20" rx="8" ry="6" transform="rotate(-20 38 20)"/>
<ellipse cx="36" cy="32" rx="6" ry="5"/>
<ellipse cx="46" cy="36" rx="8" ry="7"/>
<ellipse cx="58" cy="40" rx="6" ry="8"/>
<ellipse cx="54" cy="26" rx="5" ry="4"/>
</g>
<g fill="#f0c8a8" opacity="0.7"><ellipse cx="40" cy="18" rx="3" ry="1.5"/><ellipse cx="46" cy="33" rx="3" ry="1.5"/><ellipse cx="58" cy="37" rx="2" ry="1.5"/></g>
</g></svg><div class="st"><svg width="16" height="16" viewBox="0 0 16 16"><rect x="0" y="0" width="16" height="16" rx="2.5" fill="#fff"/><path d="M8 0.9 L10.23 5.5 L15.1 6.05 L11.5 9.5 L12.4 14.4 L8 12.0 L3.6 14.4 L4.5 9.5 L0.9 6.05 L5.77 5.5 Z" fill="#a99af6" stroke="#333" stroke-width="1.05" stroke-linejoin="round"/></svg></div></div><div class="lb" style="left:764.5px;top:358px;color:#7b88ff">Kunst-07</div><div class="th" style="left:877px;top:293px"><svg width="63" height="63" viewBox="0 0 64 64" preserveAspectRatio="none"><rect width="64" height="64" fill="#1a2e2a"/><circle cx="33.4" cy="51.6" r="1.3" fill="#8ac0a0"/><circle cx="11.2" cy="45.1" r="0.9" fill="#8ac0a0"/><circle cx="7.1" cy="1.7" r="0.7" fill="#5aa07a"/><circle cx="26.9" cy="55.0" r="1.1" fill="#5aa07a"/><circle cx="54.2" cy="60.5" r="0.8" fill="#0e1a18"/><circle cx="4.0" cy="52.0" r="1.2" fill="#2a5a44"/><circle cx="56.5" cy="34.1" r="1.1" fill="#5aa07a"/><circle cx="13.4" cy="34.6" r="1.2" fill="#5aa07a"/><circle cx="4.4" cy="26.2" r="0.9" fill="#4a8a68"/><circle cx="41.0" cy="38.4" r="1.0" fill="#4a8a68"/><circle cx="52.1" cy="58.9" r="0.4" fill="#8ac0a0"/><circle cx="36.6" cy="57.4" r="1.1" fill="#3a7a5a"/><circle cx="61.4" cy="24.0" r="1.1" fill="#4a8a68"/><circle cx="15.3" cy="35.6" r="1.3" fill="#0e1a18"/><circle cx="61.3" cy="3.7" r="0.5" fill="#8ac0a0"/><circle cx="12.3" cy="38.6" r="0.9" fill="#0e1a18"/><circle cx="57.7" cy="16.0" r="0.7" fill="#8ac0a0"/><circle cx="20.4" cy="21.3" r="1.2" fill="#0e1a18"/><circle cx="50.1" cy="21.4" r="0.4" fill="#8ac0a0"/><circle cx="1.2" cy="47.7" r="0.8" fill="#3a7a5a"/><circle cx="46.7" cy="19.8" r="0.5" fill="#5aa07a"/><circle cx="58.2" cy="1.3" r="0.9" fill="#5aa07a"/><circle cx="8.9" cy="31.0" r="1.3" fill="#0e1a18"/><circle cx="52.3" cy="11.7" r="1.3" fill="#2a5a44"/><circle cx="43.3" cy="58.1" r="0.4" fill="#0e1a18"/><circle cx="19.5" cy="56.9" r="0.7" fill="#8ac0a0"/><circle cx="3.2" cy="59.3" r="0.5" fill="#8ac0a0"/><circle cx="53.7" cy="42.1" r="0.8" fill="#3a7a5a"/><circle cx="34.7" cy="34.8" r="1.3" fill="#2a5a44"/><circle cx="34.1" cy="17.0" r="0.5" fill="#8ac0a0"/><circle cx="3.1" cy="56.8" r="0.9" fill="#4a8a68"/><circle cx="14.2" cy="26.1" r="1.0" fill="#3a7a5a"/><circle cx="61.9" cy="48.1" r="0.6" fill="#8ac0a0"/><circle cx="52.5" cy="62.1" r="0.9" fill="#5aa07a"/><circle cx="37.0" cy="33.2" r="0.4" fill="#8ac0a0"/><circle cx="61.7" cy="10.8" r="1.3" fill="#2a5a44"/><circle cx="39.2" cy="23.5" r="1.3" fill="#2a5a44"/><circle cx="19.4" cy="22.8" r="0.9" fill="#0e1a18"/><circle cx="6.8" cy="0.7" r="1.2" fill="#5aa07a"/><circle cx="35.4" cy="11.4" r="0.8" fill="#0e1a18"/><circle cx="8.8" cy="35.2" r="0.8" fill="#8ac0a0"/><circle cx="16.9" cy="63.2" r="1.1" fill="#4a8a68"/><circle cx="21.6" cy="21.0" r="0.4" fill="#3a7a5a"/><circle cx="33.1" cy="44.8" r="0.4" fill="#4a8a68"/><circle cx="45.5" cy="19.3" r="0.6" fill="#3a7a5a"/><circle cx="49.8" cy="52.5" r="1.3" fill="#4a8a68"/><circle cx="34.3" cy="48.6" r="0.6" fill="#5aa07a"/><circle cx="1.9" cy="25.6" r="0.5" fill="#3a7a5a"/><circle cx="47.3" cy="3.8" r="1.3" fill="#8ac0a0"/><circle cx="17.2" cy="22.2" r="0.9" fill="#4a8a68"/><circle cx="26.0" cy="0.5" r="1.1" fill="#8ac0a0"/><circle cx="5.2" cy="48.0" r="1.1" fill="#5aa07a"/><circle cx="46.8" cy="18.2" r="0.7" fill="#8ac0a0"/><circle cx="8.1" cy="53.6" r="1.2" fill="#8ac0a0"/><circle cx="28.3" cy="16.3" r="0.5" fill="#4a8a68"/><circle cx="19.9" cy="12.8" r="0.7" fill="#2a5a44"/><circle cx="32.3" cy="62.4" r="0.9" fill="#8ac0a0"/><circle cx="5.3" cy="28.0" r="1.2" fill="#0e1a18"/><circle cx="38.7" cy="57.6" r="1.0" fill="#2a5a44"/><circle cx="10.5" cy="34.2" r="0.7" fill="#8ac0a0"/><circle cx="61.2" cy="26.1" r="1.0" fill="#2a5a44"/><circle cx="57.7" cy="9.7" r="0.6" fill="#0e1a18"/><circle cx="20.6" cy="48.5" r="1.1" fill="#2a5a44"/><circle cx="18.5" cy="15.5" r="0.6" fill="#2a5a44"/><circle cx="23.8" cy="40.7" r="0.7" fill="#3a7a5a"/><circle cx="27.6" cy="56.9" r="0.7" fill="#2a5a44"/><circle cx="4.5" cy="19.0" r="0.7" fill="#4a8a68"/><circle cx="20.6" cy="61.7" r="1.1" fill="#8ac0a0"/><circle cx="24.5" cy="20.8" r="0.9" fill="#5aa07a"/><circle cx="9.2" cy="6.7" r="1.1" fill="#5aa07a"/><circle cx="40.0" cy="57.5" r="0.6" fill="#2a5a44"/><circle cx="13.6" cy="55.5" r="1.2" fill="#4a8a68"/><circle cx="24.0" cy="60.5" r="0.7" fill="#5aa07a"/><circle cx="13.0" cy="20.2" r="0.4" fill="#0e1a18"/><circle cx="37.3" cy="22.5" r="1.0" fill="#4a8a68"/><circle cx="27.1" cy="16.6" r="0.7" fill="#2a5a44"/><circle cx="48.1" cy="13.6" r="0.6" fill="#8ac0a0"/><circle cx="47.2" cy="45.3" r="0.6" fill="#5aa07a"/><circle cx="53.9" cy="4.6" r="1.0" fill="#8ac0a0"/><circle cx="46.2" cy="50.1" r="1.2" fill="#4a8a68"/><circle cx="47.2" cy="52.1" r="0.5" fill="#2a5a44"/><circle cx="56.2" cy="49.2" r="0.6" fill="#4a8a68"/><circle cx="24.2" cy="21.4" r="1.2" fill="#2a5a44"/><circle cx="20.9" cy="24.7" r="0.6" fill="#2a5a44"/><circle cx="31.5" cy="30.3" r="0.8" fill="#5aa07a"/><circle cx="30.8" cy="61.4" r="0.6" fill="#3a7a5a"/><circle cx="16.9" cy="8.3" r="0.5" fill="#2a5a44"/><circle cx="2.3" cy="8.0" r="0.8" fill="#3a7a5a"/><circle cx="57.5" cy="54.3" r="1.0" fill="#0e1a18"/><circle cx="19.9" cy="24.2" r="0.6" fill="#0e1a18"/><circle cx="2.2" cy="41.5" r="1.0" fill="#8ac0a0"/><circle cx="34.2" cy="58.8" r="1.0" fill="#8ac0a0"/><circle cx="18.9" cy="22.5" r="0.8" fill="#2a5a44"/><circle cx="49.1" cy="6.9" r="0.7" fill="#4a8a68"/><circle cx="28.6" cy="51.4" r="1.3" fill="#8ac0a0"/><circle cx="62.6" cy="0.5" r="1.1" fill="#3a7a5a"/><circle cx="22.3" cy="50.4" r="1.2" fill="#3a7a5a"/><circle cx="39.1" cy="61.4" r="0.4" fill="#4a8a68"/><circle cx="60.1" cy="43.3" r="0.8" fill="#5aa07a"/><circle cx="12.6" cy="51.8" r="0.4" fill="#8ac0a0"/><circle cx="1.2" cy="38.0" r="1.1" fill="#2a5a44"/><circle cx="30.5" cy="19.8" r="1.0" fill="#8ac0a0"/><circle cx="38.8" cy="35.4" r="0.8" fill="#4a8a68"/><circle cx="0.2" cy="29.5" r="1.2" fill="#0e1a18"/><circle cx="48.2" cy="47.1" r="1.2" fill="#3a7a5a"/><circle cx="55.7" cy="6.0" r="1.0" fill="#8ac0a0"/><circle cx="38.9" cy="7.9" r="1.2" fill="#5aa07a"/><circle cx="9.9" cy="61.3" r="1.0" fill="#5aa07a"/><circle cx="2.5" cy="9.9" r="1.2" fill="#0e1a18"/><circle cx="43.4" cy="56.0" r="1.1" fill="#3a7a5a"/><circle cx="6.9" cy="49.0" r="1.1" fill="#4a8a68"/><circle cx="32.9" cy="26.5" r="1.1" fill="#8ac0a0"/><circle cx="36.9" cy="36.0" r="1.1" fill="#0e1a18"/><circle cx="8.3" cy="47.1" r="1.2" fill="#2a5a44"/><circle cx="42.1" cy="30.1" r="1.1" fill="#2a5a44"/><circle cx="39.7" cy="53.4" r="1.1" fill="#4a8a68"/><circle cx="13.3" cy="27.9" r="1.1" fill="#0e1a18"/><circle cx="3.4" cy="61.5" r="0.6" fill="#8ac0a0"/><circle cx="3.3" cy="16.7" r="1.0" fill="#4a8a68"/><circle cx="24.7" cy="2.9" r="0.9" fill="#3a7a5a"/><circle cx="1.5" cy="34.6" r="1.1" fill="#5aa07a"/><circle cx="37.9" cy="51.9" r="1.0" fill="#2a5a44"/><circle cx="62.9" cy="22.9" r="0.9" fill="#8ac0a0"/><circle cx="38.3" cy="52.8" r="0.9" fill="#4a8a68"/><circle cx="7.1" cy="1.5" r="0.5" fill="#0e1a18"/><circle cx="9.8" cy="28.5" r="0.9" fill="#3a7a5a"/><circle cx="11.1" cy="24.0" r="1.0" fill="#3a7a5a"/><circle cx="17.9" cy="13.0" r="1.0" fill="#0e1a18"/><circle cx="60.1" cy="29.9" r="0.5" fill="#2a5a44"/><circle cx="61.6" cy="44.8" r="0.6" fill="#5aa07a"/><circle cx="57.3" cy="30.0" r="0.6" fill="#2a5a44"/><circle cx="31.9" cy="19.9" r="0.6" fill="#5aa07a"/><circle cx="37.2" cy="20.7" r="0.6" fill="#4a8a68"/><circle cx="0.5" cy="51.5" r="0.6" fill="#2a5a44"/><circle cx="61.1" cy="13.6" r="0.5" fill="#8ac0a0"/><circle cx="7.3" cy="2.6" r="0.7" fill="#8ac0a0"/><circle cx="14.6" cy="32.4" r="0.5" fill="#0e1a18"/><circle cx="62.6" cy="39.6" r="0.8" fill="#3a7a5a"/><circle cx="45.6" cy="52.2" r="0.8" fill="#4a8a68"/><circle cx="21.5" cy="34.6" r="0.9" fill="#3a7a5a"/><circle cx="1.7" cy="4.1" r="0.6" fill="#0e1a18"/><circle cx="51.8" cy="41.8" r="0.5" fill="#8ac0a0"/><circle cx="12.0" cy="21.3" r="1.1" fill="#5aa07a"/><circle cx="54.8" cy="59.5" r="0.7" fill="#2a5a44"/><circle cx="36.1" cy="61.6" r="0.7" fill="#5aa07a"/><circle cx="40.0" cy="45.2" r="0.6" fill="#0e1a18"/><circle cx="38.3" cy="58.2" r="1.2" fill="#4a8a68"/><circle cx="34.8" cy="40.5" r="1.0" fill="#0e1a18"/><circle cx="47.8" cy="8.5" r="1.3" fill="#3a7a5a"/><circle cx="0.3" cy="61.7" r="1.1" fill="#3a7a5a"/><circle cx="23.2" cy="7.3" r="0.6" fill="#3a7a5a"/><circle cx="52.0" cy="23.7" r="0.8" fill="#0e1a18"/><circle cx="30.4" cy="59.4" r="1.1" fill="#4a8a68"/><circle cx="61.5" cy="38.9" r="1.1" fill="#4a8a68"/><circle cx="1.9" cy="15.3" r="0.9" fill="#2a5a44"/><circle cx="49.2" cy="41.1" r="0.8" fill="#2a5a44"/><circle cx="30.3" cy="37.8" r="0.9" fill="#8ac0a0"/><circle cx="28.8" cy="42.0" r="1.3" fill="#8ac0a0"/><circle cx="17.7" cy="61.8" r="1.2" fill="#8ac0a0"/><circle cx="58.0" cy="24.8" r="1.0" fill="#0e1a18"/><circle cx="49.3" cy="26.0" r="1.0" fill="#3a7a5a"/><circle cx="13.5" cy="47.6" r="0.8" fill="#3a7a5a"/><circle cx="39.3" cy="40.6" r="0.7" fill="#8ac0a0"/><circle cx="32.7" cy="45.0" r="1.0" fill="#3a7a5a"/><circle cx="15.8" cy="31.8" r="1.1" fill="#3a7a5a"/><circle cx="25.2" cy="60.5" r="0.7" fill="#0e1a18"/><circle cx="52.1" cy="48.2" r="1.2" fill="#0e1a18"/><circle cx="41.2" cy="16.9" r="1.2" fill="#8ac0a0"/><circle cx="36.4" cy="34.1" r="0.5" fill="#8ac0a0"/><circle cx="60.8" cy="51.9" r="0.4" fill="#0e1a18"/><circle cx="46.9" cy="35.4" r="0.5" fill="#4a8a68"/><circle cx="2.4" cy="53.9" r="1.1" fill="#0e1a18"/><circle cx="49.2" cy="23.5" r="0.6" fill="#0e1a18"/><circle cx="51.1" cy="16.5" r="1.1" fill="#0e1a18"/><circle cx="0.6" cy="27.0" r="0.6" fill="#5aa07a"/><circle cx="56.5" cy="62.6" r="1.2" fill="#8ac0a0"/><circle cx="63.2" cy="59.9" r="0.9" fill="#4a8a68"/><circle cx="34.6" cy="13.9" r="0.5" fill="#3a7a5a"/><circle cx="36.4" cy="58.8" r="0.8" fill="#0e1a18"/><circle cx="41.5" cy="19.6" r="1.2" fill="#3a7a5a"/><circle cx="3.3" cy="13.0" r="0.6" fill="#0e1a18"/><circle cx="58.1" cy="31.5" r="0.4" fill="#4a8a68"/><circle cx="63.2" cy="28.9" r="1.0" fill="#5aa07a"/><circle cx="10.6" cy="41.5" r="0.7" fill="#4a8a68"/><circle cx="44.4" cy="0.3" r="0.8" fill="#2a5a44"/><circle cx="39.2" cy="51.4" r="0.5" fill="#8ac0a0"/><circle cx="20.8" cy="52.3" r="0.6" fill="#5aa07a"/><circle cx="56.4" cy="36.8" r="0.6" fill="#5aa07a"/><circle cx="47.7" cy="7.6" r="0.6" fill="#5aa07a"/><circle cx="13.8" cy="16.5" r="0.5" fill="#0e1a18"/><circle cx="61.8" cy="42.6" r="1.2" fill="#8ac0a0"/><circle cx="57.2" cy="5.6" r="0.8" fill="#8ac0a0"/><circle cx="40.3" cy="26.0" r="0.8" fill="#8ac0a0"/><circle cx="37.5" cy="57.4" r="1.0" fill="#2a5a44"/><circle cx="15.5" cy="17.4" r="0.7" fill="#8ac0a0"/><circle cx="10.7" cy="38.6" r="1.0" fill="#8ac0a0"/><circle cx="14.3" cy="49.6" r="0.6" fill="#0e1a18"/><circle cx="49.9" cy="43.3" r="1.2" fill="#8ac0a0"/><circle cx="29.8" cy="25.6" r="0.8" fill="#5aa07a"/><circle cx="57.2" cy="14.0" r="1.0" fill="#0e1a18"/><circle cx="36.4" cy="22.0" r="0.5" fill="#0e1a18"/><circle cx="50.9" cy="30.8" r="0.4" fill="#2a5a44"/><circle cx="12.4" cy="43.7" r="1.2" fill="#3a7a5a"/><circle cx="55.7" cy="27.0" r="1.0" fill="#5aa07a"/><circle cx="60.6" cy="15.7" r="1.3" fill="#2a5a44"/><circle cx="22.1" cy="1.4" r="0.6" fill="#4a8a68"/><circle cx="37.0" cy="40.3" r="1.2" fill="#5aa07a"/><circle cx="16.4" cy="5.0" r="1.2" fill="#8ac0a0"/><circle cx="15.3" cy="20.6" r="1.0" fill="#4a8a68"/><circle cx="2.2" cy="10.8" r="0.8" fill="#3a7a5a"/><circle cx="58.7" cy="36.8" r="0.7" fill="#4a8a68"/><circle cx="44.8" cy="37.1" r="0.9" fill="#8ac0a0"/><circle cx="22.7" cy="60.9" r="0.4" fill="#4a8a68"/><circle cx="32.6" cy="11.1" r="1.2" fill="#5aa07a"/><circle cx="20.8" cy="8.5" r="0.5" fill="#5aa07a"/><circle cx="32.2" cy="4.0" r="0.8" fill="#0e1a18"/><circle cx="15.9" cy="21.0" r="0.6" fill="#3a7a5a"/><circle cx="40.0" cy="58.2" r="0.9" fill="#0e1a18"/><circle cx="5.8" cy="41.5" r="0.7" fill="#0e1a18"/><circle cx="47.2" cy="61.8" r="1.3" fill="#0e1a18"/><circle cx="61.0" cy="11.2" r="0.5" fill="#4a8a68"/><circle cx="48.2" cy="32.8" r="1.1" fill="#8ac0a0"/><circle cx="51.6" cy="52.9" r="0.6" fill="#0e1a18"/><circle cx="31.3" cy="40.6" r="0.9" fill="#5aa07a"/><circle cx="12.2" cy="45.5" r="0.6" fill="#2a5a44"/><circle cx="8.6" cy="29.2" r="0.8" fill="#3a7a5a"/><circle cx="43.5" cy="49.9" r="1.0" fill="#2a5a44"/><circle cx="45.9" cy="39.3" r="1.1" fill="#8ac0a0"/><circle cx="7.7" cy="3.7" r="1.0" fill="#0e1a18"/><circle cx="1.2" cy="26.2" r="1.1" fill="#2a5a44"/><circle cx="49.2" cy="10.1" r="0.7" fill="#3a7a5a"/><circle cx="19.6" cy="40.1" r="1.2" fill="#3a7a5a"/><circle cx="62.2" cy="16.7" r="0.8" fill="#0e1a18"/><circle cx="11.6" cy="45.3" r="0.6" fill="#3a7a5a"/><circle cx="51.7" cy="37.2" r="1.3" fill="#8ac0a0"/><circle cx="56.9" cy="60.3" r="1.0" fill="#4a8a68"/><circle cx="26.4" cy="3.7" r="1.1" fill="#3a7a5a"/><circle cx="30.7" cy="3.3" r="0.7" fill="#0e1a18"/><circle cx="24.0" cy="60.9" r="1.0" fill="#3a7a5a"/><circle cx="7.2" cy="58.5" r="0.8" fill="#2a5a44"/><circle cx="46.4" cy="33.6" r="0.8" fill="#8ac0a0"/><circle cx="20.2" cy="23.2" r="1.2" fill="#5aa07a"/><circle cx="34.7" cy="45.0" r="1.1" fill="#8ac0a0"/><circle cx="63.3" cy="24.6" r="1.1" fill="#3a7a5a"/><circle cx="10.1" cy="47.7" r="0.9" fill="#2a5a44"/><circle cx="24.3" cy="20.3" r="0.5" fill="#3a7a5a"/><circle cx="60.2" cy="5.4" r="0.5" fill="#2a5a44"/><circle cx="21.8" cy="18.7" r="0.9" fill="#2a5a44"/><circle cx="40.6" cy="13.3" r="1.0" fill="#5aa07a"/><circle cx="6.3" cy="53.9" r="0.4" fill="#4a8a68"/><circle cx="29.5" cy="63.4" r="0.9" fill="#8ac0a0"/><circle cx="57.1" cy="25.7" r="0.8" fill="#4a8a68"/><circle cx="19.1" cy="20.4" r="0.4" fill="#8ac0a0"/><circle cx="15.9" cy="41.3" r="1.0" fill="#0e1a18"/><circle cx="50.5" cy="5.7" r="0.8" fill="#4a8a68"/><circle cx="17.4" cy="60.2" r="1.1" fill="#4a8a68"/><circle cx="54.5" cy="27.7" r="0.9" fill="#2a5a44"/><circle cx="39.4" cy="52.9" r="0.8" fill="#5aa07a"/><circle cx="59.9" cy="12.6" r="1.0" fill="#2a5a44"/><circle cx="3.7" cy="44.0" r="1.0" fill="#8ac0a0"/><circle cx="41.2" cy="18.1" r="0.9" fill="#8ac0a0"/><circle cx="14.0" cy="29.4" r="1.0" fill="#2a5a44"/><circle cx="36.8" cy="28.8" r="0.7" fill="#2a5a44"/><circle cx="14.2" cy="20.2" r="1.2" fill="#2a5a44"/><circle cx="1.0" cy="52.5" r="1.1" fill="#4a8a68"/><circle cx="55.9" cy="19.5" r="0.4" fill="#2a5a44"/><circle cx="18.3" cy="41.3" r="1.2" fill="#2a5a44"/><circle cx="5.4" cy="51.2" r="0.6" fill="#5aa07a"/><circle cx="29.9" cy="53.6" r="1.1" fill="#5aa07a"/><circle cx="63.0" cy="12.9" r="0.8" fill="#3a7a5a"/><circle cx="40.4" cy="6.4" r="0.5" fill="#0e1a18"/><circle cx="44.5" cy="29.6" r="0.6" fill="#8ac0a0"/><circle cx="18.5" cy="30.4" r="0.8" fill="#5aa07a"/><circle cx="4.3" cy="3.2" r="1.3" fill="#3a7a5a"/><circle cx="51.1" cy="26.3" r="0.8" fill="#0e1a18"/><circle cx="62.5" cy="17.0" r="0.7" fill="#0e1a18"/><circle cx="38.2" cy="35.3" r="0.6" fill="#3a7a5a"/><circle cx="42.5" cy="19.6" r="1.3" fill="#8ac0a0"/><circle cx="20.2" cy="6.6" r="0.4" fill="#5aa07a"/><circle cx="18.4" cy="60.7" r="0.9" fill="#3a7a5a"/><circle cx="8.7" cy="28.5" r="0.4" fill="#4a8a68"/><circle cx="0.5" cy="10.2" r="0.6" fill="#8ac0a0"/><circle cx="35.8" cy="42.2" r="1.3" fill="#8ac0a0"/><circle cx="37.8" cy="32.9" r="0.6" fill="#4a8a68"/><circle cx="52.4" cy="21.0" r="0.5" fill="#3a7a5a"/><circle cx="62.4" cy="34.6" r="0.8" fill="#0e1a18"/><circle cx="45.1" cy="54.3" r="0.6" fill="#8ac0a0"/><circle cx="28.7" cy="60.5" r="0.6" fill="#8ac0a0"/><circle cx="57.1" cy="4.4" r="0.5" fill="#2a5a44"/><circle cx="51.6" cy="34.2" r="0.6" fill="#0e1a18"/><circle cx="34.0" cy="37.8" r="0.7" fill="#3a7a5a"/><circle cx="63.3" cy="62.3" r="1.1" fill="#2a5a44"/><circle cx="47.7" cy="59.6" r="0.8" fill="#3a7a5a"/><circle cx="33.1" cy="62.7" r="1.3" fill="#4a8a68"/><circle cx="52.4" cy="23.7" r="1.2" fill="#5aa07a"/><circle cx="28.2" cy="63.2" r="0.5" fill="#2a5a44"/><circle cx="41.0" cy="59.8" r="1.1" fill="#3a7a5a"/><circle cx="26.5" cy="27.1" r="1.0" fill="#3a7a5a"/><circle cx="30.5" cy="27.3" r="0.8" fill="#3a7a5a"/><circle cx="19.1" cy="42.5" r="0.4" fill="#2a5a44"/><circle cx="43.3" cy="33.7" r="0.7" fill="#4a8a68"/><circle cx="57.6" cy="37.2" r="1.0" fill="#4a8a68"/><circle cx="18.6" cy="3.6" r="1.0" fill="#3a7a5a"/><circle cx="18.3" cy="14.1" r="0.5" fill="#3a7a5a"/><circle cx="6.9" cy="36.0" r="0.8" fill="#4a8a68"/><circle cx="1.0" cy="55.3" r="1.1" fill="#4a8a68"/><circle cx="50.9" cy="18.4" r="1.1" fill="#3a7a5a"/><circle cx="34.9" cy="13.2" r="1.2" fill="#3a7a5a"/><circle cx="10.7" cy="59.8" r="0.8" fill="#2a5a44"/><circle cx="26.3" cy="24.1" r="1.1" fill="#3a7a5a"/><circle cx="52.9" cy="26.5" r="0.9" fill="#5aa07a"/><circle cx="39.2" cy="42.0" r="0.5" fill="#0e1a18"/><circle cx="23.7" cy="39.3" r="0.6" fill="#2a5a44"/><circle cx="13.9" cy="30.5" r="0.8" fill="#3a7a5a"/><circle cx="31.2" cy="33.7" r="0.9" fill="#2a5a44"/><circle cx="25.4" cy="30.7" r="1.1" fill="#2a5a44"/><circle cx="57.9" cy="14.2" r="1.0" fill="#8ac0a0"/><circle cx="18.6" cy="48.4" r="0.4" fill="#3a7a5a"/><circle cx="31.9" cy="26.9" r="0.5" fill="#8ac0a0"/><circle cx="20.2" cy="29.9" r="1.2" fill="#5aa07a"/><circle cx="7.1" cy="36.1" r="0.4" fill="#0e1a18"/><circle cx="41.0" cy="15.5" r="1.3" fill="#2a5a44"/><circle cx="53.3" cy="9.6" r="1.0" fill="#5aa07a"/><circle cx="15.6" cy="17.6" r="0.8" fill="#2a5a44"/><circle cx="39.7" cy="21.8" r="0.6" fill="#2a5a44"/><circle cx="19.9" cy="38.8" r="0.7" fill="#4a8a68"/><circle cx="49.2" cy="42.9" r="1.0" fill="#2a5a44"/><circle cx="47.1" cy="58.6" r="1.1" fill="#8ac0a0"/><circle cx="36.3" cy="15.2" r="0.7" fill="#5aa07a"/><circle cx="56.0" cy="31.8" r="0.6" fill="#2a5a44"/><circle cx="38.0" cy="12.1" r="0.7" fill="#0e1a18"/><circle cx="32.6" cy="29.6" r="1.1" fill="#4a8a68"/><circle cx="12.6" cy="51.9" r="1.1" fill="#2a5a44"/><circle cx="29.7" cy="27.6" r="0.7" fill="#2a5a44"/><circle cx="28.0" cy="19.9" r="0.9" fill="#3a7a5a"/><circle cx="37.4" cy="10.9" r="0.7" fill="#2a5a44"/><circle cx="35.1" cy="31.6" r="0.6" fill="#5aa07a"/><circle cx="26.9" cy="54.7" r="1.0" fill="#4a8a68"/><circle cx="63.9" cy="49.5" r="0.9" fill="#2a5a44"/><circle cx="56.6" cy="51.5" r="1.1" fill="#0e1a18"/><circle cx="61.2" cy="32.4" r="1.0" fill="#4a8a68"/><circle cx="1.1" cy="56.6" r="1.1" fill="#5aa07a"/><circle cx="54.2" cy="19.4" r="0.8" fill="#0e1a18"/><circle cx="38.0" cy="45.0" r="1.0" fill="#2a5a44"/><circle cx="0.7" cy="63.8" r="0.7" fill="#5aa07a"/><circle cx="11.1" cy="26.6" r="0.7" fill="#4a8a68"/><circle cx="5.3" cy="9.1" r="1.3" fill="#8ac0a0"/><circle cx="33.9" cy="5.7" r="1.1" fill="#0e1a18"/><circle cx="52.8" cy="5.8" r="0.7" fill="#2a5a44"/><circle cx="22.9" cy="19.0" r="0.5" fill="#8ac0a0"/><circle cx="46.2" cy="16.8" r="0.5" fill="#3a7a5a"/><circle cx="53.5" cy="8.4" r="1.0" fill="#4a8a68"/><circle cx="52.2" cy="61.5" r="1.2" fill="#2a5a44"/><circle cx="11.2" cy="43.9" r="1.1" fill="#5aa07a"/><circle cx="10.1" cy="20.6" r="1.1" fill="#2a5a44"/><circle cx="61.4" cy="60.3" r="0.7" fill="#8ac0a0"/><circle cx="14.0" cy="54.3" r="0.7" fill="#8ac0a0"/><circle cx="14.0" cy="20.9" r="1.0" fill="#4a8a68"/><circle cx="24.3" cy="39.6" r="1.2" fill="#5aa07a"/><circle cx="33.2" cy="31.5" r="0.5" fill="#3a7a5a"/><circle cx="41.0" cy="26.2" r="1.1" fill="#3a7a5a"/><circle cx="21.4" cy="6.2" r="0.5" fill="#2a5a44"/><circle cx="17.7" cy="47.2" r="0.9" fill="#2a5a44"/><circle cx="22.2" cy="1.4" r="1.1" fill="#2a5a44"/><circle cx="0.5" cy="15.6" r="0.6" fill="#0e1a18"/><circle cx="1.7" cy="38.7" r="1.0" fill="#0e1a18"/><circle cx="55.0" cy="25.3" r="0.5" fill="#0e1a18"/><circle cx="18.6" cy="44.3" r="1.0" fill="#5aa07a"/><circle cx="51.3" cy="38.7" r="1.1" fill="#5aa07a"/><circle cx="29.2" cy="61.0" r="0.6" fill="#5aa07a"/><circle cx="39.0" cy="55.3" r="0.9" fill="#5aa07a"/><circle cx="57.0" cy="41.9" r="1.2" fill="#4a8a68"/><circle cx="16.2" cy="59.2" r="1.2" fill="#0e1a18"/><circle cx="27.1" cy="22.6" r="0.5" fill="#0e1a18"/><circle cx="39.9" cy="35.3" r="0.8" fill="#2a5a44"/><circle cx="35.4" cy="44.8" r="0.6" fill="#3a7a5a"/><circle cx="43.2" cy="22.9" r="1.0" fill="#0e1a18"/><circle cx="45.9" cy="15.6" r="1.2" fill="#0e1a18"/><circle cx="46.7" cy="4.4" r="1.1" fill="#8ac0a0"/><circle cx="2.6" cy="5.3" r="1.0" fill="#2a5a44"/><circle cx="28.6" cy="58.2" r="1.1" fill="#3a7a5a"/><circle cx="8.2" cy="40.1" r="1.1" fill="#2a5a44"/><circle cx="63.1" cy="18.4" r="0.9" fill="#5aa07a"/><circle cx="6.1" cy="22.5" r="1.0" fill="#5aa07a"/><circle cx="25.7" cy="8.2" r="0.8" fill="#8ac0a0"/><circle cx="3.6" cy="13.3" r="0.4" fill="#4a8a68"/><circle cx="24.6" cy="58.6" r="0.8" fill="#0e1a18"/><circle cx="17.9" cy="36.2" r="1.1" fill="#4a8a68"/><circle cx="37.6" cy="7.2" r="1.2" fill="#5aa07a"/><circle cx="15.3" cy="51.5" r="0.8" fill="#2a5a44"/><circle cx="10.5" cy="24.9" r="0.6" fill="#3a7a5a"/><circle cx="59.5" cy="54.8" r="0.6" fill="#4a8a68"/><circle cx="0.8" cy="30.0" r="1.1" fill="#2a5a44"/><circle cx="1.0" cy="39.3" r="0.8" fill="#0e1a18"/><circle cx="10.2" cy="54.0" r="1.1" fill="#3a7a5a"/><circle cx="57.9" cy="43.0" r="0.4" fill="#3a7a5a"/><circle cx="50.0" cy="52.3" r="1.0" fill="#5aa07a"/><circle cx="4.1" cy="3.1" r="0.4" fill="#3a7a5a"/><circle cx="45.1" cy="49.8" r="0.6" fill="#4a8a68"/><circle cx="8.2" cy="48.9" r="1.2" fill="#5aa07a"/><circle cx="12.5" cy="31.0" r="0.4" fill="#2a5a44"/><circle cx="11.0" cy="43.6" r="0.8" fill="#5aa07a"/><circle cx="7.6" cy="44.0" r="0.6" fill="#2a5a44"/><circle cx="44.8" cy="4.6" r="0.8" fill="#4a8a68"/><circle cx="45.3" cy="47.4" r="1.1" fill="#3a7a5a"/><circle cx="18.2" cy="52.1" r="1.0" fill="#2a5a44"/><circle cx="31.3" cy="61.0" r="0.9" fill="#4a8a68"/><circle cx="37.6" cy="36.9" r="1.0" fill="#3a7a5a"/><circle cx="29.6" cy="2.2" r="1.2" fill="#3a7a5a"/><circle cx="61.5" cy="2.7" r="0.5" fill="#0e1a18"/><circle cx="8.7" cy="39.1" r="1.1" fill="#2a5a44"/><circle cx="22.5" cy="30.1" r="1.1" fill="#4a8a68"/><circle cx="34.6" cy="37.5" r="0.9" fill="#3a7a5a"/><circle cx="11.3" cy="3.0" r="0.9" fill="#5aa07a"/><circle cx="16.1" cy="43.0" r="0.5" fill="#5aa07a"/><circle cx="19.3" cy="44.3" r="1.2" fill="#4a8a68"/><circle cx="10.6" cy="16.3" r="0.5" fill="#5aa07a"/><circle cx="35.5" cy="28.7" r="0.9" fill="#2a5a44"/><circle cx="12.0" cy="21.1" r="0.9" fill="#2a5a44"/><circle cx="2.2" cy="17.1" r="1.3" fill="#5aa07a"/><circle cx="54.8" cy="47.4" r="1.2" fill="#5aa07a"/><circle cx="3.4" cy="15.7" r="0.6" fill="#5aa07a"/><circle cx="14.0" cy="13.9" r="1.1" fill="#8ac0a0"/><circle cx="31.4" cy="18.6" r="0.9" fill="#5aa07a"/><circle cx="55.9" cy="42.4" r="0.7" fill="#5aa07a"/><circle cx="18.3" cy="47.3" r="1.0" fill="#2a5a44"/><circle cx="40.8" cy="39.8" r="0.7" fill="#4a8a68"/><circle cx="45.9" cy="1.3" r="1.2" fill="#3a7a5a"/><circle cx="55.4" cy="49.7" r="1.1" fill="#5aa07a"/><circle cx="8.6" cy="21.0" r="0.5" fill="#4a8a68"/><circle cx="2.8" cy="61.9" r="0.6" fill="#3a7a5a"/><circle cx="47.6" cy="1.8" r="0.9" fill="#2a5a44"/><circle cx="36.5" cy="39.8" r="1.3" fill="#5aa07a"/><circle cx="32.7" cy="50.8" r="0.4" fill="#0e1a18"/><circle cx="4.2" cy="15.9" r="0.7" fill="#3a7a5a"/><circle cx="6.1" cy="7.1" r="0.6" fill="#8ac0a0"/><circle cx="60.4" cy="33.9" r="1.1" fill="#2a5a44"/><circle cx="24.9" cy="51.5" r="0.6" fill="#5aa07a"/><circle cx="44.8" cy="11.9" r="0.6" fill="#0e1a18"/><circle cx="60.7" cy="31.6" r="0.7" fill="#3a7a5a"/><circle cx="41.9" cy="58.1" r="1.2" fill="#8ac0a0"/><circle cx="11.3" cy="31.6" r="0.9" fill="#8ac0a0"/><circle cx="46.6" cy="49.8" r="0.7" fill="#0e1a18"/><circle cx="21.1" cy="51.8" r="0.5" fill="#0e1a18"/><circle cx="50.6" cy="11.4" r="0.5" fill="#3a7a5a"/><circle cx="2.6" cy="54.8" r="1.1" fill="#3a7a5a"/><circle cx="3.4" cy="9.8" r="1.3" fill="#4a8a68"/><circle cx="49.8" cy="3.9" r="0.8" fill="#5aa07a"/><circle cx="8.3" cy="23.9" r="1.0" fill="#8ac0a0"/><circle cx="54.0" cy="13.3" r="0.7" fill="#8ac0a0"/><circle cx="15.6" cy="11.9" r="0.8" fill="#3a7a5a"/><circle cx="33.2" cy="17.1" r="0.5" fill="#0e1a18"/><circle cx="8.9" cy="31.2" r="0.9" fill="#5aa07a"/><circle cx="38.0" cy="38.8" r="0.5" fill="#3a7a5a"/><circle cx="11.7" cy="43.5" r="1.2" fill="#5aa07a"/><circle cx="46.6" cy="55.9" r="0.6" fill="#3a7a5a"/><circle cx="42.7" cy="33.3" r="1.0" fill="#0e1a18"/><circle cx="38.1" cy="12.8" r="1.0" fill="#2a5a44"/><circle cx="27.3" cy="53.3" r="1.0" fill="#5aa07a"/><circle cx="43.4" cy="51.0" r="1.2" fill="#3a7a5a"/><circle cx="17.7" cy="40.7" r="0.5" fill="#0e1a18"/><circle cx="0.6" cy="3.0" r="0.5" fill="#8ac0a0"/><circle cx="41.8" cy="17.0" r="1.0" fill="#4a8a68"/><circle cx="11.7" cy="7.6" r="0.9" fill="#0e1a18"/><circle cx="1.5" cy="7.1" r="0.6" fill="#4a8a68"/><circle cx="46.0" cy="55.4" r="0.6" fill="#5aa07a"/><circle cx="35.4" cy="36.2" r="0.6" fill="#3a7a5a"/><circle cx="3.4" cy="61.6" r="0.6" fill="#5aa07a"/><circle cx="48.0" cy="17.9" r="1.2" fill="#3a7a5a"/><circle cx="32.0" cy="27.6" r="1.0" fill="#0e1a18"/><circle cx="55.4" cy="28.6" r="1.1" fill="#3a7a5a"/><circle cx="44.6" cy="33.7" r="1.1" fill="#5aa07a"/><circle cx="53.8" cy="46.1" r="0.8" fill="#3a7a5a"/><circle cx="63.4" cy="62.9" r="1.1" fill="#5aa07a"/><circle cx="21.9" cy="33.7" r="0.9" fill="#0e1a18"/><circle cx="37.3" cy="21.0" r="0.8" fill="#8ac0a0"/><circle cx="43.0" cy="56.9" r="1.2" fill="#0e1a18"/><circle cx="59.0" cy="13.0" r="1.1" fill="#2a5a44"/><circle cx="59.2" cy="43.7" r="1.3" fill="#4a8a68"/><circle cx="10.0" cy="9.3" r="0.7" fill="#8ac0a0"/><circle cx="13.0" cy="47.1" r="0.4" fill="#5aa07a"/><circle cx="28.3" cy="0.5" r="0.6" fill="#5aa07a"/><circle cx="17.1" cy="34.5" r="0.6" fill="#2a5a44"/><circle cx="18.4" cy="50.7" r="0.6" fill="#0e1a18"/><circle cx="4.7" cy="35.5" r="0.9" fill="#4a8a68"/><circle cx="37.9" cy="60.8" r="1.2" fill="#8ac0a0"/><circle cx="27.6" cy="16.0" r="0.9" fill="#5aa07a"/><circle cx="23.2" cy="10.0" r="1.0" fill="#8ac0a0"/><circle cx="52.1" cy="50.4" r="0.6" fill="#0e1a18"/><circle cx="12.1" cy="48.5" r="0.6" fill="#0e1a18"/><circle cx="41.3" cy="34.0" r="0.8" fill="#8ac0a0"/><circle cx="8.6" cy="59.5" r="0.6" fill="#4a8a68"/><circle cx="26.9" cy="30.0" r="0.6" fill="#5aa07a"/><circle cx="14.2" cy="7.7" r="0.9" fill="#4a8a68"/><circle cx="6.5" cy="63.6" r="0.6" fill="#8ac0a0"/><circle cx="40.4" cy="41.1" r="0.5" fill="#2a5a44"/><circle cx="50.0" cy="17.0" r="0.9" fill="#2a5a44"/><circle cx="43.7" cy="37.4" r="1.1" fill="#0e1a18"/><circle cx="44.9" cy="17.4" r="0.9" fill="#5aa07a"/><circle cx="21.7" cy="37.8" r="0.7" fill="#5aa07a"/></svg><div class="st"><svg width="16" height="16" viewBox="0 0 16 16"><rect x="0" y="0" width="16" height="16" rx="2.5" fill="#fff"/><path d="M8 0.9 L10.23 5.5 L15.1 6.05 L11.5 9.5 L12.4 14.4 L8 12.0 L3.6 14.4 L4.5 9.5 L0.9 6.05 L5.77 5.5 Z" fill="#a99af6" stroke="#333" stroke-width="1.05" stroke-linejoin="round"/></svg></div></div><div class="lb" style="left:860.5px;top:358px;color:#7b88ff">Kunst-42</div><div class="th" style="left:301px;top:389px"><svg width="63" height="63" viewBox="0 0 64 64" preserveAspectRatio="none"><defs><linearGradient id="l2" x1="0" y1="0" x2="0" y2="1"><stop offset="0" stop-color="#a8c8e8"/><stop offset="1" stop-color="#e8eef4"/></linearGradient></defs>
<rect width="64" height="26" fill="url(#l2)"/>
<rect y="22" width="64" height="14" fill="#3a5a30"/>
<g fill="#2a4a24"><circle cx="56" cy="26" r="8"/><circle cx="4" cy="30" r="5"/></g>
<rect x="22" y="28" width="12" height="5" fill="#7a4a3a"/>
<rect y="34" width="64" height="30" fill="#8a8850"/>
<path d="M0 44 Q30 38 64 46 L64 64 L0 64 Z" fill="#6a8a40"/>
<path d="M0 54 Q30 48 64 56 L64 64 L0 64 Z" fill="#8a8a48"/>
<ellipse cx="30" cy="40" rx="12" ry="3" fill="#b0a070"/></svg><div class="st"><svg width="16" height="16" viewBox="0 0 16 16"><rect x="0" y="0" width="16" height="16" rx="2.5" fill="#fff"/><path d="M8 0.9 L10.23 5.5 L15.1 6.05 L11.5 9.5 L12.4 14.4 L8 12.0 L3.6 14.4 L4.5 9.5 L0.9 6.05 L5.77 5.5 Z" fill="#a99af6" stroke="#333" stroke-width="1.05" stroke-linejoin="round"/></svg></div></div><div class="lb" style="left:284.5px;top:454px;color:#7b88ff">Landskap-02</div><div class="th" style="left:397px;top:389px"><svg width="63" height="63" viewBox="0 0 64 64" preserveAspectRatio="none"><rect width="64" height="64" fill="#3a8028"/>
<rect x="40" y="0" width="24" height="20" fill="#9ac8e8"/>
<g fill="#2a6a20"><circle cx="16" cy="14" r="16"/><circle cx="34" cy="26" r="12"/><circle cx="56" cy="30" r="10"/><circle cx="8" cy="36" r="10"/></g>
<g fill="#4a9a34"><circle cx="22" cy="8" r="8"/><circle cx="44" cy="20" r="6"/></g>
<rect y="44" width="64" height="20" fill="#6abf40"/>
<rect y="52" width="64" height="12" fill="#7acc48"/></svg><div class="st"><svg width="16" height="16" viewBox="0 0 16 16"><rect x="0" y="0" width="16" height="16" rx="2.5" fill="#fff"/><path d="M8 0.9 L10.23 5.5 L15.1 6.05 L11.5 9.5 L12.4 14.4 L8 12.0 L3.6 14.4 L4.5 9.5 L0.9 6.05 L5.77 5.5 Z" fill="#a99af6" stroke="#333" stroke-width="1.05" stroke-linejoin="round"/></svg></div></div><div class="lb" style="left:380.5px;top:454px;color:#7b88ff">Landskap-13</div><div class="th" style="left:493px;top:389px"><svg width="63" height="63" viewBox="0 0 64 64" preserveAspectRatio="none"><defs><linearGradient id="l15" x1="0" y1="0" x2="0" y2="1"><stop offset="0" stop-color="#a0b8d0"/><stop offset="1" stop-color="#e8e0c0"/></linearGradient></defs>
<rect width="64" height="26" fill="url(#l15)"/>
<rect y="22" width="64" height="14" fill="#3a5a38"/>
<polygon points="0,36 64,32 64,64 0,64" fill="#a8a050"/>
<polygon points="0,50 64,44 64,64 0,64" fill="#b8b060"/>
<path d="M0 38 L30 34" stroke="#6a6a40" stroke-width="1"/></svg><div class="st"><svg width="16" height="16" viewBox="0 0 16 16"><rect x="0" y="0" width="16" height="16" rx="2.5" fill="#fff"/><path d="M8 0.9 L10.23 5.5 L15.1 6.05 L11.5 9.5 L12.4 14.4 L8 12.0 L3.6 14.4 L4.5 9.5 L0.9 6.05 L5.77 5.5 Z" fill="#a99af6" stroke="#333" stroke-width="1.05" stroke-linejoin="round"/></svg></div></div><div class="lb" style="left:476.5px;top:454px;color:#7b88ff">Landskap-15</div><div class="th" style="left:589px;top:389px"><svg width="63" height="63" viewBox="0 0 64 64" preserveAspectRatio="none"><defs><radialGradient id="l42" cx="0.55" cy="0.25" r="0.5"><stop offset="0" stop-color="#fff0a0"/><stop offset="0.5" stop-color="#f0b030"/><stop offset="1" stop-color="#c86a10"/></radialGradient></defs>
<rect width="64" height="64" fill="url(#l42)"/>
<g fill="#d86a10"><circle cx="6" cy="10" r="10"/><circle cx="60" cy="8" r="10"/><circle cx="14" cy="30" r="8"/></g>
<rect x="44" y="12" width="4" height="36" fill="#3a2a1a"/>
<rect y="40" width="64" height="6" fill="#a8a030"/>
<rect y="44" width="64" height="20" fill="#d88a20"/>
<g fill="#b86010"><circle cx="10" cy="52" r="4"/><circle cx="30" cy="58" r="5"/><circle cx="50" cy="54" r="4"/></g></svg><div class="st"><svg width="16" height="16" viewBox="0 0 16 16"><rect x="0" y="0" width="16" height="16" rx="2.5" fill="#fff"/><path d="M8 0.9 L10.23 5.5 L15.1 6.05 L11.5 9.5 L12.4 14.4 L8 12.0 L3.6 14.4 L4.5 9.5 L0.9 6.05 L5.77 5.5 Z" fill="#a99af6" stroke="#333" stroke-width="1.05" stroke-linejoin="round"/></svg></div></div><div class="lb" style="left:572.5px;top:454px;color:#7b88ff">Landskap-42</div><div class="th" style="left:685px;top:389px"><svg width="63" height="63" viewBox="0 0 64 64" preserveAspectRatio="none"><rect width="64" height="64" fill="#d0d0d0"/><circle cx="11.6" cy="42.3" r="0.5" fill="#c4c4c4"/><circle cx="60.9" cy="40.2" r="0.5" fill="#d8d8d8"/><circle cx="29.3" cy="16.9" r="0.5" fill="#cacaca"/><circle cx="7.6" cy="33.4" r="0.7" fill="#c4c4c4"/><circle cx="55.4" cy="60.4" r="0.5" fill="#c4c4c4"/><circle cx="12.8" cy="23.4" r="0.6" fill="#cacaca"/><circle cx="57.1" cy="48.4" r="0.6" fill="#cacaca"/><circle cx="19.1" cy="0.4" r="0.8" fill="#c4c4c4"/><circle cx="49.4" cy="26.0" r="0.5" fill="#cacaca"/><circle cx="33.7" cy="52.8" r="0.6" fill="#d8d8d8"/><circle cx="35.3" cy="18.0" r="0.6" fill="#cacaca"/><circle cx="9.3" cy="43.8" r="0.7" fill="#c4c4c4"/><circle cx="12.2" cy="41.4" r="0.7" fill="#c4c4c4"/><circle cx="26.0" cy="30.7" r="0.4" fill="#cacaca"/><circle cx="12.9" cy="16.6" r="0.7" fill="#cacaca"/><circle cx="34.9" cy="5.7" r="0.5" fill="#c4c4c4"/><circle cx="31.3" cy="16.0" r="0.4" fill="#d8d8d8"/><circle cx="13.0" cy="58.3" r="0.7" fill="#cacaca"/><circle cx="52.4" cy="43.6" r="0.6" fill="#c4c4c4"/><circle cx="49.5" cy="54.2" r="0.4" fill="#d8d8d8"/><circle cx="52.3" cy="11.6" r="0.6" fill="#d8d8d8"/><circle cx="45.3" cy="43.5" r="0.5" fill="#d8d8d8"/><circle cx="21.7" cy="54.1" r="0.5" fill="#c4c4c4"/><circle cx="27.8" cy="44.7" r="0.7" fill="#cacaca"/><circle cx="27.1" cy="49.2" r="0.6" fill="#cacaca"/><circle cx="57.0" cy="0.4" r="0.6" fill="#d8d8d8"/><circle cx="35.1" cy="0.6" r="0.6" fill="#d8d8d8"/><circle cx="27.0" cy="25.9" r="0.6" fill="#d8d8d8"/><circle cx="55.6" cy="53.5" r="0.7" fill="#c4c4c4"/><circle cx="14.4" cy="54.7" r="0.5" fill="#d8d8d8"/><circle cx="46.7" cy="19.0" r="0.4" fill="#c4c4c4"/><circle cx="59.5" cy="48.6" r="0.7" fill="#cacaca"/><circle cx="9.7" cy="13.5" r="0.8" fill="#c4c4c4"/><circle cx="53.7" cy="44.7" r="0.7" fill="#c4c4c4"/><circle cx="59.3" cy="6.8" r="0.5" fill="#d8d8d8"/><circle cx="21.0" cy="38.6" r="0.8" fill="#cacaca"/><circle cx="10.9" cy="44.7" r="0.7" fill="#d8d8d8"/><circle cx="47.5" cy="63.7" r="0.4" fill="#d8d8d8"/><circle cx="51.4" cy="2.9" r="0.5" fill="#d8d8d8"/><circle cx="5.7" cy="18.2" r="0.5" fill="#cacaca"/><circle cx="43.3" cy="28.0" r="0.4" fill="#d8d8d8"/><circle cx="53.4" cy="16.6" r="0.7" fill="#d8d8d8"/><circle cx="33.9" cy="5.6" r="0.7" fill="#d8d8d8"/><circle cx="56.8" cy="60.8" r="0.5" fill="#cacaca"/><circle cx="6.0" cy="23.3" r="0.6" fill="#cacaca"/><circle cx="31.4" cy="49.3" r="0.6" fill="#d8d8d8"/><circle cx="55.0" cy="43.3" r="0.6" fill="#c4c4c4"/><circle cx="32.6" cy="59.1" r="0.7" fill="#cacaca"/><circle cx="63.8" cy="1.1" r="0.6" fill="#d8d8d8"/><circle cx="45.7" cy="36.9" r="0.5" fill="#c4c4c4"/><circle cx="34.5" cy="45.6" r="0.5" fill="#c4c4c4"/><circle cx="14.7" cy="45.4" r="0.5" fill="#cacaca"/><circle cx="27.2" cy="59.2" r="0.6" fill="#d8d8d8"/><circle cx="26.5" cy="57.0" r="0.6" fill="#cacaca"/><circle cx="17.6" cy="3.9" r="0.6" fill="#d8d8d8"/><circle cx="32.4" cy="39.2" r="0.5" fill="#cacaca"/><circle cx="18.4" cy="58.7" r="0.4" fill="#cacaca"/><circle cx="40.7" cy="33.3" r="0.8" fill="#c4c4c4"/><circle cx="10.7" cy="63.3" r="0.8" fill="#c4c4c4"/><circle cx="12.1" cy="4.3" r="0.6" fill="#c4c4c4"/><circle cx="1.9" cy="34.9" r="0.5" fill="#c4c4c4"/><circle cx="47.0" cy="53.3" r="0.6" fill="#c4c4c4"/><circle cx="48.6" cy="20.6" r="0.5" fill="#d8d8d8"/><circle cx="8.5" cy="24.2" r="0.7" fill="#cacaca"/><circle cx="59.7" cy="44.0" r="0.6" fill="#d8d8d8"/><circle cx="13.7" cy="42.3" r="0.7" fill="#cacaca"/><circle cx="59.4" cy="62.3" r="0.6" fill="#c4c4c4"/><circle cx="31.5" cy="62.1" r="0.5" fill="#c4c4c4"/><circle cx="30.5" cy="56.7" r="0.7" fill="#c4c4c4"/><circle cx="21.8" cy="0.9" r="0.5" fill="#c4c4c4"/><circle cx="59.5" cy="13.4" r="0.5" fill="#c4c4c4"/><circle cx="39.3" cy="22.1" r="0.7" fill="#c4c4c4"/><circle cx="37.7" cy="8.0" r="0.7" fill="#d8d8d8"/><circle cx="60.3" cy="3.5" r="0.7" fill="#cacaca"/><circle cx="10.3" cy="19.4" r="0.6" fill="#cacaca"/><circle cx="20.6" cy="33.2" r="0.6" fill="#d8d8d8"/><circle cx="18.2" cy="22.8" r="0.8" fill="#d8d8d8"/><circle cx="26.7" cy="23.4" r="0.6" fill="#c4c4c4"/><circle cx="17.5" cy="9.8" r="0.8" fill="#c4c4c4"/><circle cx="31.4" cy="14.8" r="0.5" fill="#c4c4c4"/><circle cx="30.6" cy="16.6" r="0.8" fill="#cacaca"/><circle cx="60.5" cy="48.4" r="0.8" fill="#d8d8d8"/><circle cx="19.8" cy="18.8" r="0.4" fill="#d8d8d8"/><circle cx="63.6" cy="14.7" r="0.7" fill="#cacaca"/><circle cx="25.2" cy="33.3" r="0.4" fill="#cacaca"/><circle cx="22.8" cy="49.2" r="0.6" fill="#d8d8d8"/><circle cx="53.2" cy="54.1" r="0.4" fill="#cacaca"/><circle cx="45.2" cy="60.7" r="0.8" fill="#d8d8d8"/><circle cx="22.1" cy="35.5" r="0.8" fill="#cacaca"/><circle cx="27.4" cy="19.3" r="0.6" fill="#c4c4c4"/><circle cx="45.7" cy="48.5" r="0.4" fill="#c4c4c4"/><circle cx="48.3" cy="37.2" r="0.6" fill="#d8d8d8"/><circle cx="27.0" cy="43.4" r="0.6" fill="#d8d8d8"/><circle cx="36.6" cy="45.5" r="0.7" fill="#d8d8d8"/><circle cx="11.0" cy="20.2" r="0.7" fill="#c4c4c4"/><circle cx="24.5" cy="15.5" r="0.6" fill="#d8d8d8"/><circle cx="6.9" cy="54.5" r="0.7" fill="#c4c4c4"/><circle cx="40.3" cy="19.0" r="0.8" fill="#c4c4c4"/><circle cx="56.3" cy="26.2" r="0.5" fill="#c4c4c4"/><circle cx="26.5" cy="20.3" r="0.7" fill="#c4c4c4"/><circle cx="46.3" cy="56.4" r="0.8" fill="#cacaca"/><circle cx="43.3" cy="35.6" r="0.6" fill="#c4c4c4"/><circle cx="58.3" cy="43.1" r="0.4" fill="#c4c4c4"/><circle cx="62.9" cy="53.9" r="0.4" fill="#c4c4c4"/><circle cx="53.6" cy="39.3" r="0.8" fill="#d8d8d8"/><circle cx="14.0" cy="8.9" r="0.6" fill="#d8d8d8"/><circle cx="27.6" cy="3.0" r="0.6" fill="#c4c4c4"/><circle cx="31.7" cy="44.8" r="0.8" fill="#cacaca"/><circle cx="39.5" cy="3.6" r="0.4" fill="#cacaca"/><circle cx="38.0" cy="10.0" r="0.7" fill="#cacaca"/><circle cx="17.3" cy="56.4" r="0.7" fill="#d8d8d8"/><circle cx="63.7" cy="7.1" r="0.7" fill="#c4c4c4"/><circle cx="1.8" cy="19.3" r="0.5" fill="#d8d8d8"/><circle cx="29.2" cy="34.6" r="0.8" fill="#d8d8d8"/><circle cx="52.9" cy="47.7" r="0.4" fill="#cacaca"/><circle cx="39.2" cy="56.6" r="0.8" fill="#d8d8d8"/><circle cx="61.1" cy="33.5" r="0.5" fill="#c4c4c4"/><circle cx="1.0" cy="59.5" r="0.7" fill="#d8d8d8"/><circle cx="40.8" cy="24.4" r="0.7" fill="#cacaca"/><circle cx="27.0" cy="7.6" r="0.7" fill="#cacaca"/><circle cx="46.0" cy="20.2" r="0.4" fill="#d8d8d8"/><circle cx="13.5" cy="11.2" r="0.7" fill="#cacaca"/><circle cx="30.3" cy="39.6" r="0.5" fill="#c4c4c4"/><circle cx="9.5" cy="22.0" r="0.5" fill="#cacaca"/><circle cx="32.1" cy="39.0" r="0.8" fill="#cacaca"/><circle cx="13.9" cy="15.3" r="0.5" fill="#d8d8d8"/><circle cx="46.2" cy="22.4" r="0.7" fill="#d8d8d8"/><circle cx="34.8" cy="49.1" r="0.6" fill="#d8d8d8"/><circle cx="10.0" cy="35.3" r="0.5" fill="#d8d8d8"/><circle cx="19.8" cy="61.2" r="0.4" fill="#d8d8d8"/><circle cx="45.2" cy="0.4" r="0.7" fill="#c4c4c4"/><circle cx="30.6" cy="39.3" r="0.4" fill="#d8d8d8"/><circle cx="32.8" cy="2.7" r="0.8" fill="#d8d8d8"/><circle cx="54.2" cy="21.2" r="0.5" fill="#c4c4c4"/><circle cx="35.2" cy="42.7" r="0.8" fill="#cacaca"/><circle cx="37.7" cy="49.7" r="0.5" fill="#c4c4c4"/><circle cx="11.1" cy="56.4" r="0.7" fill="#cacaca"/><circle cx="53.1" cy="25.1" r="0.8" fill="#c4c4c4"/><circle cx="41.7" cy="10.0" r="0.7" fill="#d8d8d8"/><circle cx="50.7" cy="50.2" r="0.6" fill="#cacaca"/><circle cx="23.9" cy="16.3" r="0.6" fill="#cacaca"/><circle cx="3.6" cy="5.0" r="0.7" fill="#cacaca"/><circle cx="33.4" cy="58.1" r="0.7" fill="#d8d8d8"/><circle cx="37.2" cy="61.3" r="0.6" fill="#cacaca"/><circle cx="31.7" cy="42.6" r="0.7" fill="#cacaca"/><circle cx="22.3" cy="2.6" r="0.5" fill="#cacaca"/><circle cx="39.2" cy="45.5" r="0.5" fill="#cacaca"/><circle cx="3.0" cy="30.4" r="0.5" fill="#c4c4c4"/><circle cx="3.4" cy="10.7" r="0.5" fill="#c4c4c4"/><circle cx="57.5" cy="17.3" r="0.4" fill="#d8d8d8"/><circle cx="15.5" cy="42.3" r="0.7" fill="#d8d8d8"/><circle cx="60.1" cy="49.2" r="0.4" fill="#c4c4c4"/><circle cx="62.0" cy="9.6" r="0.5" fill="#d8d8d8"/><circle cx="37.9" cy="58.6" r="0.4" fill="#d8d8d8"/><circle cx="27.2" cy="53.7" r="0.5" fill="#d8d8d8"/><circle cx="41.8" cy="35.1" r="0.6" fill="#cacaca"/><circle cx="56.6" cy="27.8" r="0.5" fill="#cacaca"/><circle cx="53.0" cy="17.1" r="0.6" fill="#d8d8d8"/><circle cx="17.7" cy="16.4" r="0.4" fill="#c4c4c4"/><circle cx="7.7" cy="59.0" r="0.7" fill="#d8d8d8"/><circle cx="3.5" cy="37.2" r="0.7" fill="#cacaca"/><circle cx="8.4" cy="10.0" r="0.4" fill="#cacaca"/><circle cx="63.7" cy="47.0" r="0.4" fill="#c4c4c4"/><circle cx="49.1" cy="16.5" r="0.6" fill="#c4c4c4"/><circle cx="6.5" cy="11.8" r="0.4" fill="#cacaca"/><circle cx="27.2" cy="28.0" r="0.6" fill="#d8d8d8"/><circle cx="36.5" cy="41.5" r="0.6" fill="#c4c4c4"/><circle cx="47.9" cy="37.3" r="0.5" fill="#c4c4c4"/><circle cx="51.9" cy="34.4" r="0.5" fill="#d8d8d8"/><circle cx="41.5" cy="37.6" r="0.7" fill="#cacaca"/><circle cx="30.8" cy="40.8" r="0.5" fill="#cacaca"/><circle cx="32.1" cy="33.0" r="0.5" fill="#d8d8d8"/><circle cx="28.4" cy="7.9" r="0.5" fill="#cacaca"/><circle cx="1.5" cy="7.9" r="0.5" fill="#cacaca"/><circle cx="4.4" cy="6.6" r="0.8" fill="#d8d8d8"/><circle cx="29.5" cy="44.6" r="0.4" fill="#cacaca"/><circle cx="58.9" cy="60.1" r="0.6" fill="#c4c4c4"/><circle cx="55.0" cy="4.1" r="0.4" fill="#cacaca"/><circle cx="53.0" cy="21.8" r="0.5" fill="#cacaca"/><circle cx="7.2" cy="41.9" r="0.7" fill="#cacaca"/><circle cx="5.5" cy="24.8" r="0.7" fill="#cacaca"/><circle cx="32.5" cy="5.0" r="0.5" fill="#c4c4c4"/><circle cx="32.5" cy="3.4" r="0.5" fill="#c4c4c4"/><circle cx="29.8" cy="21.9" r="0.4" fill="#c4c4c4"/><circle cx="60.3" cy="2.4" r="0.5" fill="#cacaca"/><circle cx="63.5" cy="33.5" r="0.8" fill="#c4c4c4"/><circle cx="19.1" cy="31.8" r="0.6" fill="#d8d8d8"/><circle cx="40.2" cy="21.3" r="0.7" fill="#d8d8d8"/><circle cx="58.4" cy="39.0" r="0.4" fill="#d8d8d8"/><circle cx="33.4" cy="4.5" r="0.7" fill="#d8d8d8"/><circle cx="3.4" cy="13.5" r="0.6" fill="#d8d8d8"/><circle cx="58.5" cy="50.4" r="0.5" fill="#c4c4c4"/><circle cx="61.2" cy="49.5" r="0.4" fill="#d8d8d8"/><circle cx="0.8" cy="18.7" r="0.5" fill="#cacaca"/><circle cx="15.0" cy="24.9" r="0.7" fill="#cacaca"/><circle cx="62.7" cy="56.3" r="0.4" fill="#cacaca"/><circle cx="22.8" cy="41.8" r="0.7" fill="#c4c4c4"/><circle cx="30.9" cy="19.7" r="0.7" fill="#cacaca"/><circle cx="53.0" cy="26.3" r="0.8" fill="#cacaca"/><circle cx="33.8" cy="17.5" r="0.5" fill="#cacaca"/></svg><div class="st"><svg width="16" height="16" viewBox="0 0 16 16"><rect x="0" y="0" width="16" height="16" rx="2.5" fill="#fff"/><path d="M8 0.9 L10.23 5.5 L15.1 6.05 L11.5 9.5 L12.4 14.4 L8 12.0 L3.6 14.4 L4.5 9.5 L0.9 6.05 L5.77 5.5 Z" fill="#a99af6" stroke="#333" stroke-width="1.05" stroke-linejoin="round"/></svg></div><div style="position:absolute;left:51px;top:1px;width:12px;height:12px"><svg width="12" height="12" viewBox="0 0 14 14"><path d="M7 1.5 C10.5 1.5 12.5 3.5 12.5 6 C12.5 8 11 8.5 10 8.3 C9 8.1 8.6 9 9.2 10 C9.8 11.2 9 12.5 7 12.5 C3.8 12.5 1.5 10.2 1.5 7 C1.5 3.8 3.8 1.5 7 1.5 Z" fill="#f4e060" stroke="#222" stroke-width="1"/><circle cx="4.5" cy="6" r="1.2" fill="#e02020"/><circle cx="7" cy="4" r="1.1" fill="#2040e0"/><circle cx="10" cy="5" r="1.1" fill="#20a020"/><circle cx="5" cy="9.3" r="1.1" fill="#a020c0"/></svg></div></div><div class="lb" style="left:668.5px;top:454px;color:#7b88ff">Leather-03</div><div class="th" style="left:781px;top:389px"><svg width="63" height="63" viewBox="0 0 64 64" preserveAspectRatio="none"><rect width="64" height="64" fill="#a68a74"/><rect x="0.5" y="0.5" width="15" height="9" fill="#b89a80"/><rect x="16.5" y="0.5" width="15" height="9" fill="#b49680"/><rect x="32.5" y="0.5" width="15" height="9" fill="#b89a80"/><rect x="48.5" y="0.5" width="15" height="9" fill="#b49680"/><rect x="8.5" y="10.5" width="15" height="9" fill="#b09276"/><rect x="24.5" y="10.5" width="15" height="9" fill="#a88c76"/><rect x="40.5" y="10.5" width="15" height="9" fill="#bea086"/><rect x="56.5" y="10.5" width="15" height="9" fill="#b49680"/><rect x="0.5" y="20.5" width="15" height="9" fill="#bea086"/><rect x="16.5" y="20.5" width="15" height="9" fill="#b49680"/><rect x="32.5" y="20.5" width="15" height="9" fill="#b09276"/><rect x="48.5" y="20.5" width="15" height="9" fill="#b49680"/><rect x="8.5" y="30.5" width="15" height="9" fill="#bea086"/><rect x="24.5" y="30.5" width="15" height="9" fill="#b89a80"/><rect x="40.5" y="30.5" width="15" height="9" fill="#bea086"/><rect x="56.5" y="30.5" width="15" height="9" fill="#a88c76"/><rect x="0.5" y="40.5" width="15" height="9" fill="#bea086"/><rect x="16.5" y="40.5" width="15" height="9" fill="#bea086"/><rect x="32.5" y="40.5" width="15" height="9" fill="#b89a80"/><rect x="48.5" y="40.5" width="15" height="9" fill="#bea086"/><rect x="8.5" y="50.5" width="15" height="9" fill="#bea086"/><rect x="24.5" y="50.5" width="15" height="9" fill="#b89a80"/><rect x="40.5" y="50.5" width="15" height="9" fill="#b49680"/><rect x="56.5" y="50.5" width="15" height="9" fill="#b49680"/><rect x="0.5" y="60.5" width="15" height="9" fill="#b09276"/><rect x="16.5" y="60.5" width="15" height="9" fill="#b89a80"/><rect x="32.5" y="60.5" width="15" height="9" fill="#b09276"/><rect x="48.5" y="60.5" width="15" height="9" fill="#b89a80"/></svg><div class="st"><svg width="16" height="16" viewBox="0 0 16 16"><rect x="0" y="0" width="16" height="16" rx="2.5" fill="#fff"/><path d="M8 0.9 L10.23 5.5 L15.1 6.05 L11.5 9.5 L12.4 14.4 L8 12.0 L3.6 14.4 L4.5 9.5 L0.9 6.05 L5.77 5.5 Z" fill="#a99af6" stroke="#333" stroke-width="1.05" stroke-linejoin="round"/></svg></div></div><div class="lb" style="left:764.5px;top:454px;color:#7b88ff">MSD Astillada</div><div class="th" style="left:877px;top:389px"><svg width="63" height="63" viewBox="0 0 64 64" preserveAspectRatio="none"><rect width="64" height="64" fill="#dcdcdc"/>
<path d="M0 24 Q10 50 32 54 Q54 50 64 24" stroke="#888" stroke-width="0.8" fill="none"/>
<path d="M0 52 Q8 44 20 48 M64 52 Q56 44 44 48" stroke="#888" stroke-width="0.8" fill="none"/></svg><div class="st"><svg width="16" height="16" viewBox="0 0 16 16"><rect x="0" y="0" width="16" height="16" rx="2.5" fill="#fff"/><path d="M8 0.9 L10.23 5.5 L15.1 6.05 L11.5 9.5 L12.4 14.4 L8 12.0 L3.6 14.4 L4.5 9.5 L0.9 6.05 L5.77 5.5 Z" fill="#a99af6" stroke="#333" stroke-width="1.05" stroke-linejoin="round"/></svg></div><div style="position:absolute;left:51px;top:1px;width:12px;height:12px"><svg width="12" height="12" viewBox="0 0 14 14"><path d="M7 1.5 C10.5 1.5 12.5 3.5 12.5 6 C12.5 8 11 8.5 10 8.3 C9 8.1 8.6 9 9.2 10 C9.8 11.2 9 12.5 7 12.5 C3.8 12.5 1.5 10.2 1.5 7 C1.5 3.8 3.8 1.5 7 1.5 Z" fill="#f4e060" stroke="#222" stroke-width="1"/><circle cx="4.5" cy="6" r="1.2" fill="#e02020"/><circle cx="7" cy="4" r="1.1" fill="#2040e0"/><circle cx="10" cy="5" r="1.1" fill="#20a020"/><circle cx="5" cy="9.3" r="1.1" fill="#a020c0"/></svg></div></div><div class="lb" style="left:860.5px;top:454px;color:#7b88ff">Mønstere-26</div><div class="th" style="left:301px;top:485px"><svg width="63" height="63" viewBox="0 0 64 64" preserveAspectRatio="none"><rect width="64" height="64" fill="#fdfdfd"/><g stroke="#d4d4d4" stroke-width="0.9" fill="none"><path d="M14 -20 Q0 -12 2 -3 Q4 6 14 14 Q24 6 26 -3 Q28 -12 14 -20 Z"/><path d="M14 14 Q0 22 2 31 Q4 40 14 48 Q24 40 26 31 Q28 22 14 14 Z"/><path d="M14 48 Q0 56 2 65 Q4 74 14 82 Q24 74 26 65 Q28 56 14 48 Z"/><path d="M46 -20 Q32 -12 34 -3 Q36 6 46 14 Q56 6 58 -3 Q60 -12 46 -20 Z"/><path d="M46 14 Q32 22 34 31 Q36 40 46 48 Q56 40 58 31 Q60 22 46 14 Z"/><path d="M46 48 Q32 56 34 65 Q36 74 46 82 Q56 74 58 65 Q60 56 46 48 Z"/><path d="M78 -20 Q64 -12 66 -3 Q68 6 78 14 Q88 6 90 -3 Q92 -12 78 -20 Z"/><path d="M78 14 Q64 22 66 31 Q68 40 78 48 Q88 40 90 31 Q92 22 78 14 Z"/><path d="M78 48 Q64 56 66 65 Q68 74 78 82 Q88 74 90 65 Q92 56 78 48 Z"/><path d="M-2 -3 Q-16 5 -14 14 Q-12 23 -2 31 Q8 23 10 14 Q12 5 -2 -3 Z"/><path d="M-2 31 Q-16 39 -14 48 Q-12 57 -2 65 Q8 57 10 48 Q12 39 -2 31 Z"/><path d="M30 -3 Q16 5 18 14 Q20 23 30 31 Q40 23 42 14 Q44 5 30 -3 Z"/><path d="M30 31 Q16 39 18 48 Q20 57 30 65 Q40 57 42 48 Q44 39 30 31 Z"/><path d="M62 -3 Q48 5 50 14 Q52 23 62 31 Q72 23 74 14 Q76 5 62 -3 Z"/><path d="M62 31 Q48 39 50 48 Q52 57 62 65 Q72 57 74 48 Q76 39 62 31 Z"/></g></svg><div class="st"><svg width="16" height="16" viewBox="0 0 16 16"><rect x="0" y="0" width="16" height="16" rx="2.5" fill="#fff"/><path d="M8 0.9 L10.23 5.5 L15.1 6.05 L11.5 9.5 L12.4 14.4 L8 12.0 L3.6 14.4 L4.5 9.5 L0.9 6.05 L5.77 5.5 Z" fill="#a99af6" stroke="#333" stroke-width="1.05" stroke-linejoin="round"/></svg></div><div style="position:absolute;left:51px;top:1px;width:12px;height:12px"><svg width="12" height="12" viewBox="0 0 14 14"><path d="M7 1.5 C10.5 1.5 12.5 3.5 12.5 6 C12.5 8 11 8.5 10 8.3 C9 8.1 8.6 9 9.2 10 C9.8 11.2 9 12.5 7 12.5 C3.8 12.5 1.5 10.2 1.5 7 C1.5 3.8 3.8 1.5 7 1.5 Z" fill="#f4e060" stroke="#222" stroke-width="1"/><circle cx="4.5" cy="6" r="1.2" fill="#e02020"/><circle cx="7" cy="4" r="1.1" fill="#2040e0"/><circle cx="10" cy="5" r="1.1" fill="#20a020"/><circle cx="5" cy="9.3" r="1.1" fill="#a020c0"/></svg></div></div><div class="lb" style="left:284.5px;top:550px;color:#7b88ff">Mønstere-30</div><div class="th" style="left:397px;top:485px"><svg width="63" height="63" viewBox="0 0 64 64" preserveAspectRatio="none"><rect width="64" height="64" fill="#f2f2f2"/><circle cx="58.0" cy="43.9" r="0.8" fill="#e4e4e4"/><circle cx="16.6" cy="40.7" r="0.9" fill="#ffffff"/><circle cx="36.7" cy="10.8" r="0.6" fill="#e4e4e4"/><circle cx="6.6" cy="20.4" r="0.9" fill="#ffffff"/><circle cx="26.4" cy="12.8" r="0.7" fill="#dadada"/><circle cx="21.5" cy="27.4" r="0.7" fill="#ffffff"/><circle cx="25.9" cy="13.2" r="0.5" fill="#e4e4e4"/><circle cx="6.0" cy="12.2" r="0.7" fill="#ffffff"/><circle cx="19.5" cy="16.4" r="0.7" fill="#e4e4e4"/><circle cx="17.1" cy="15.0" r="0.8" fill="#dadada"/><circle cx="15.2" cy="0.8" r="0.7" fill="#ffffff"/><circle cx="17.9" cy="44.5" r="0.6" fill="#dadada"/><circle cx="28.6" cy="9.8" r="0.7" fill="#dadada"/><circle cx="53.3" cy="10.0" r="0.6" fill="#dadada"/><circle cx="55.2" cy="44.1" r="0.9" fill="#dadada"/><circle cx="27.4" cy="14.3" r="0.9" fill="#e4e4e4"/><circle cx="33.2" cy="27.9" r="0.9" fill="#e4e4e4"/><circle cx="7.3" cy="56.6" r="0.4" fill="#dadada"/><circle cx="51.1" cy="43.0" r="0.6" fill="#ffffff"/><circle cx="33.9" cy="48.8" r="0.4" fill="#dadada"/><circle cx="10.5" cy="60.0" r="0.7" fill="#e4e4e4"/><circle cx="4.7" cy="47.8" r="0.4" fill="#ffffff"/><circle cx="41.1" cy="61.2" r="0.8" fill="#dadada"/><circle cx="2.8" cy="1.7" r="0.5" fill="#dadada"/><circle cx="44.8" cy="10.0" r="0.9" fill="#dadada"/><circle cx="33.7" cy="8.6" r="0.6" fill="#e4e4e4"/><circle cx="26.8" cy="7.0" r="0.4" fill="#e4e4e4"/><circle cx="12.6" cy="14.5" r="0.6" fill="#dadada"/><circle cx="24.9" cy="8.9" r="0.4" fill="#ffffff"/><circle cx="0.2" cy="12.1" r="0.7" fill="#ffffff"/><circle cx="60.3" cy="6.1" r="0.8" fill="#e4e4e4"/><circle cx="23.3" cy="19.1" r="0.7" fill="#e4e4e4"/><circle cx="0.3" cy="4.0" r="0.6" fill="#dadada"/><circle cx="62.1" cy="25.3" r="0.8" fill="#ffffff"/><circle cx="51.9" cy="4.3" r="0.6" fill="#e4e4e4"/><circle cx="44.9" cy="33.9" r="0.9" fill="#dadada"/><circle cx="39.8" cy="21.8" r="0.4" fill="#ffffff"/><circle cx="18.8" cy="54.1" r="0.4" fill="#e4e4e4"/><circle cx="13.5" cy="13.2" r="0.9" fill="#dadada"/><circle cx="38.5" cy="37.3" r="0.6" fill="#ffffff"/><circle cx="28.3" cy="51.8" r="0.5" fill="#dadada"/><circle cx="24.1" cy="54.9" r="0.6" fill="#ffffff"/><circle cx="0.2" cy="49.9" r="0.6" fill="#dadada"/><circle cx="55.8" cy="20.4" r="0.8" fill="#ffffff"/><circle cx="28.8" cy="56.8" r="0.6" fill="#dadada"/><circle cx="3.4" cy="8.6" r="0.4" fill="#ffffff"/><circle cx="1.3" cy="7.5" r="0.5" fill="#e4e4e4"/><circle cx="18.9" cy="46.6" r="0.5" fill="#ffffff"/><circle cx="22.4" cy="9.4" r="0.5" fill="#dadada"/><circle cx="28.7" cy="59.1" r="0.9" fill="#dadada"/><circle cx="34.3" cy="44.9" r="0.5" fill="#dadada"/><circle cx="41.5" cy="63.5" r="0.7" fill="#e4e4e4"/><circle cx="41.9" cy="17.2" r="0.8" fill="#ffffff"/><circle cx="42.2" cy="54.5" r="0.6" fill="#ffffff"/><circle cx="54.6" cy="21.0" r="0.8" fill="#dadada"/><circle cx="9.0" cy="47.7" r="0.8" fill="#dadada"/><circle cx="34.5" cy="48.1" r="0.8" fill="#dadada"/><circle cx="2.5" cy="12.1" r="0.6" fill="#dadada"/><circle cx="32.5" cy="19.7" r="0.6" fill="#e4e4e4"/><circle cx="60.0" cy="8.7" r="0.5" fill="#e4e4e4"/><circle cx="36.3" cy="58.3" r="0.8" fill="#e4e4e4"/><circle cx="21.7" cy="15.7" r="0.8" fill="#ffffff"/><circle cx="5.4" cy="16.9" r="0.4" fill="#ffffff"/><circle cx="63.9" cy="31.7" r="0.7" fill="#ffffff"/><circle cx="30.2" cy="45.6" r="0.7" fill="#dadada"/><circle cx="6.1" cy="57.7" r="0.8" fill="#ffffff"/><circle cx="32.1" cy="26.8" r="0.9" fill="#ffffff"/><circle cx="28.4" cy="57.5" r="0.7" fill="#e4e4e4"/><circle cx="11.4" cy="12.9" r="0.5" fill="#ffffff"/><circle cx="25.7" cy="4.4" r="0.8" fill="#ffffff"/><circle cx="40.7" cy="7.3" r="0.5" fill="#e4e4e4"/><circle cx="46.6" cy="55.6" r="0.5" fill="#ffffff"/><circle cx="63.6" cy="54.6" r="0.4" fill="#dadada"/><circle cx="15.7" cy="52.0" r="0.5" fill="#dadada"/><circle cx="23.8" cy="18.7" r="0.4" fill="#ffffff"/><circle cx="9.4" cy="32.8" r="0.8" fill="#dadada"/><circle cx="8.2" cy="4.2" r="0.7" fill="#dadada"/><circle cx="33.4" cy="7.4" r="0.5" fill="#ffffff"/><circle cx="36.0" cy="5.7" r="0.5" fill="#dadada"/><circle cx="28.3" cy="26.1" r="0.8" fill="#dadada"/><circle cx="43.8" cy="53.2" r="0.8" fill="#e4e4e4"/><circle cx="31.8" cy="38.3" r="0.8" fill="#ffffff"/><circle cx="10.1" cy="61.6" r="0.9" fill="#e4e4e4"/><circle cx="6.0" cy="44.3" r="0.7" fill="#ffffff"/><circle cx="21.5" cy="15.2" r="0.8" fill="#dadada"/><circle cx="3.6" cy="5.7" r="0.4" fill="#e4e4e4"/><circle cx="57.5" cy="49.1" r="0.5" fill="#ffffff"/><circle cx="62.1" cy="25.7" r="0.9" fill="#dadada"/><circle cx="4.0" cy="55.4" r="0.4" fill="#dadada"/><circle cx="47.4" cy="54.3" r="0.5" fill="#dadada"/><circle cx="4.6" cy="28.2" r="0.8" fill="#e4e4e4"/><circle cx="38.5" cy="13.9" r="0.7" fill="#dadada"/><circle cx="51.5" cy="6.0" r="0.8" fill="#ffffff"/><circle cx="57.3" cy="54.9" r="0.8" fill="#dadada"/><circle cx="18.9" cy="6.7" r="0.5" fill="#dadada"/><circle cx="40.7" cy="47.6" r="0.8" fill="#e4e4e4"/><circle cx="42.4" cy="11.5" r="0.5" fill="#e4e4e4"/><circle cx="3.3" cy="14.4" r="0.6" fill="#dadada"/><circle cx="40.7" cy="24.2" r="0.5" fill="#ffffff"/><circle cx="41.2" cy="38.4" r="0.9" fill="#ffffff"/><circle cx="56.5" cy="54.8" r="0.4" fill="#e4e4e4"/><circle cx="32.6" cy="33.7" r="0.5" fill="#e4e4e4"/><circle cx="13.5" cy="62.9" r="0.6" fill="#e4e4e4"/><circle cx="56.6" cy="63.9" r="0.5" fill="#e4e4e4"/><circle cx="10.9" cy="61.7" r="0.6" fill="#ffffff"/><circle cx="13.0" cy="5.4" r="0.5" fill="#dadada"/><circle cx="10.0" cy="48.1" r="0.6" fill="#ffffff"/><circle cx="23.4" cy="47.9" r="0.4" fill="#dadada"/><circle cx="1.7" cy="0.1" r="0.8" fill="#dadada"/><circle cx="30.1" cy="29.0" r="0.6" fill="#e4e4e4"/><circle cx="63.0" cy="5.4" r="0.7" fill="#ffffff"/><circle cx="27.0" cy="29.4" r="0.9" fill="#e4e4e4"/><circle cx="52.0" cy="41.1" r="0.9" fill="#dadada"/><circle cx="4.5" cy="56.8" r="0.8" fill="#ffffff"/><circle cx="47.1" cy="62.1" r="0.9" fill="#dadada"/><circle cx="37.6" cy="4.3" r="0.9" fill="#ffffff"/><circle cx="46.0" cy="31.7" r="0.5" fill="#dadada"/><circle cx="1.7" cy="0.8" r="0.5" fill="#dadada"/><circle cx="63.6" cy="42.1" r="0.4" fill="#dadada"/><circle cx="14.7" cy="15.9" r="0.6" fill="#e4e4e4"/><circle cx="45.5" cy="52.9" r="0.8" fill="#e4e4e4"/><circle cx="53.8" cy="16.1" r="0.6" fill="#ffffff"/><circle cx="32.0" cy="57.7" r="0.8" fill="#dadada"/><circle cx="29.6" cy="11.6" r="0.5" fill="#dadada"/><circle cx="39.9" cy="35.8" r="0.8" fill="#dadada"/><circle cx="60.3" cy="15.7" r="0.5" fill="#e4e4e4"/><circle cx="8.4" cy="22.2" r="0.7" fill="#dadada"/><circle cx="46.5" cy="38.1" r="0.9" fill="#ffffff"/><circle cx="28.0" cy="0.1" r="0.5" fill="#e4e4e4"/><circle cx="23.0" cy="12.6" r="0.5" fill="#e4e4e4"/><circle cx="38.2" cy="45.6" r="0.8" fill="#dadada"/><circle cx="63.0" cy="11.4" r="0.8" fill="#e4e4e4"/><circle cx="16.3" cy="33.2" r="0.8" fill="#e4e4e4"/><circle cx="40.3" cy="6.9" r="0.5" fill="#ffffff"/><circle cx="60.3" cy="17.5" r="0.9" fill="#e4e4e4"/><circle cx="27.9" cy="16.0" r="0.8" fill="#ffffff"/><circle cx="19.9" cy="22.3" r="0.6" fill="#e4e4e4"/><circle cx="58.2" cy="13.1" r="0.8" fill="#dadada"/><circle cx="31.9" cy="53.3" r="0.6" fill="#ffffff"/><circle cx="42.3" cy="61.5" r="0.9" fill="#e4e4e4"/><circle cx="48.3" cy="30.3" r="0.7" fill="#dadada"/><circle cx="32.7" cy="30.9" r="0.5" fill="#e4e4e4"/><circle cx="32.8" cy="2.6" r="0.5" fill="#e4e4e4"/><circle cx="8.6" cy="57.3" r="0.9" fill="#ffffff"/><circle cx="33.5" cy="35.1" r="0.5" fill="#dadada"/><circle cx="46.3" cy="62.5" r="0.9" fill="#e4e4e4"/><circle cx="45.2" cy="56.1" r="0.4" fill="#dadada"/><circle cx="34.6" cy="47.5" r="0.7" fill="#dadada"/><circle cx="28.2" cy="26.9" r="0.8" fill="#e4e4e4"/><circle cx="62.0" cy="39.9" r="0.6" fill="#ffffff"/><circle cx="8.0" cy="62.2" r="0.7" fill="#e4e4e4"/><circle cx="8.7" cy="14.5" r="0.7" fill="#e4e4e4"/><circle cx="13.5" cy="21.1" r="0.4" fill="#e4e4e4"/><circle cx="58.9" cy="62.5" r="0.8" fill="#ffffff"/><circle cx="7.0" cy="16.1" r="0.8" fill="#dadada"/><circle cx="13.0" cy="3.2" r="0.6" fill="#ffffff"/><circle cx="28.4" cy="26.6" r="0.5" fill="#dadada"/><circle cx="52.1" cy="14.2" r="0.8" fill="#dadada"/><circle cx="47.2" cy="55.7" r="0.8" fill="#ffffff"/><circle cx="6.1" cy="56.8" r="0.7" fill="#e4e4e4"/><circle cx="58.9" cy="0.3" r="0.8" fill="#e4e4e4"/><circle cx="21.6" cy="10.8" r="0.8" fill="#dadada"/><circle cx="26.8" cy="3.2" r="0.5" fill="#ffffff"/><circle cx="30.3" cy="39.6" r="0.5" fill="#ffffff"/><circle cx="4.7" cy="40.4" r="0.6" fill="#dadada"/><circle cx="14.2" cy="18.4" r="0.7" fill="#e4e4e4"/><circle cx="24.4" cy="35.5" r="0.5" fill="#ffffff"/><circle cx="25.8" cy="30.9" r="0.7" fill="#ffffff"/><circle cx="13.4" cy="5.5" r="0.9" fill="#ffffff"/><circle cx="31.0" cy="43.8" r="0.8" fill="#dadada"/><circle cx="32.7" cy="45.8" r="0.4" fill="#ffffff"/><circle cx="16.0" cy="24.6" r="0.4" fill="#e4e4e4"/><circle cx="39.2" cy="23.8" r="0.5" fill="#e4e4e4"/><circle cx="62.3" cy="8.4" r="0.5" fill="#e4e4e4"/><circle cx="16.6" cy="27.6" r="0.7" fill="#e4e4e4"/><circle cx="49.8" cy="49.7" r="0.6" fill="#e4e4e4"/><circle cx="58.1" cy="57.6" r="0.4" fill="#e4e4e4"/><circle cx="58.4" cy="22.7" r="0.9" fill="#ffffff"/><circle cx="52.3" cy="54.8" r="0.6" fill="#ffffff"/><circle cx="57.3" cy="56.8" r="0.9" fill="#dadada"/><circle cx="48.2" cy="61.0" r="0.4" fill="#dadada"/><circle cx="49.6" cy="36.0" r="0.5" fill="#dadada"/><circle cx="47.7" cy="42.2" r="0.7" fill="#dadada"/><circle cx="47.7" cy="10.4" r="0.4" fill="#dadada"/><circle cx="35.9" cy="9.4" r="0.7" fill="#dadada"/><circle cx="22.4" cy="54.1" r="0.7" fill="#e4e4e4"/><circle cx="52.1" cy="41.1" r="0.5" fill="#ffffff"/><circle cx="3.4" cy="38.4" r="0.4" fill="#dadada"/><circle cx="44.1" cy="38.2" r="0.8" fill="#dadada"/><circle cx="23.1" cy="62.0" r="0.9" fill="#e4e4e4"/><circle cx="25.2" cy="45.7" r="0.7" fill="#ffffff"/><circle cx="36.5" cy="13.1" r="0.9" fill="#ffffff"/><circle cx="42.4" cy="61.6" r="0.4" fill="#dadada"/><circle cx="44.4" cy="50.5" r="0.7" fill="#e4e4e4"/><circle cx="27.4" cy="9.3" r="0.6" fill="#dadada"/><circle cx="37.3" cy="46.5" r="0.5" fill="#dadada"/><circle cx="50.1" cy="54.8" r="0.6" fill="#dadada"/><circle cx="41.1" cy="27.6" r="0.6" fill="#dadada"/><circle cx="17.6" cy="13.7" r="0.6" fill="#e4e4e4"/><circle cx="54.8" cy="31.2" r="0.6" fill="#e4e4e4"/><circle cx="36.8" cy="46.5" r="0.6" fill="#dadada"/><circle cx="19.1" cy="36.5" r="0.9" fill="#ffffff"/><circle cx="62.9" cy="37.6" r="0.4" fill="#ffffff"/><circle cx="55.9" cy="18.5" r="0.6" fill="#e4e4e4"/><circle cx="44.1" cy="52.7" r="0.9" fill="#ffffff"/><circle cx="30.9" cy="24.3" r="0.9" fill="#e4e4e4"/><circle cx="51.7" cy="19.1" r="0.5" fill="#dadada"/><circle cx="10.7" cy="40.5" r="0.7" fill="#dadada"/><circle cx="53.2" cy="43.8" r="0.9" fill="#ffffff"/><circle cx="27.5" cy="31.6" r="0.7" fill="#e4e4e4"/><circle cx="8.6" cy="2.5" r="0.7" fill="#e4e4e4"/><circle cx="46.1" cy="50.5" r="0.8" fill="#dadada"/><circle cx="58.0" cy="61.4" r="0.6" fill="#dadada"/><circle cx="7.1" cy="3.6" r="0.9" fill="#e4e4e4"/><circle cx="6.5" cy="17.8" r="0.5" fill="#e4e4e4"/><circle cx="19.9" cy="39.1" r="0.6" fill="#e4e4e4"/><circle cx="6.5" cy="10.1" r="0.8" fill="#ffffff"/><circle cx="45.3" cy="53.4" r="0.4" fill="#e4e4e4"/><circle cx="25.4" cy="25.5" r="0.9" fill="#dadada"/><circle cx="8.4" cy="43.9" r="0.8" fill="#ffffff"/><circle cx="60.7" cy="20.8" r="0.6" fill="#dadada"/><circle cx="28.7" cy="53.5" r="0.9" fill="#dadada"/><circle cx="39.7" cy="20.0" r="0.5" fill="#dadada"/><circle cx="53.6" cy="7.5" r="0.5" fill="#e4e4e4"/><circle cx="59.1" cy="45.2" r="0.6" fill="#ffffff"/><circle cx="43.7" cy="15.6" r="0.5" fill="#ffffff"/><circle cx="5.3" cy="36.0" r="0.7" fill="#ffffff"/><circle cx="55.0" cy="27.2" r="0.4" fill="#dadada"/><circle cx="23.9" cy="30.1" r="0.4" fill="#ffffff"/><circle cx="43.1" cy="22.7" r="0.8" fill="#e4e4e4"/><circle cx="44.3" cy="25.6" r="0.5" fill="#ffffff"/><circle cx="45.5" cy="48.3" r="0.7" fill="#ffffff"/><circle cx="0.5" cy="37.8" r="0.5" fill="#ffffff"/><circle cx="32.2" cy="1.6" r="0.6" fill="#ffffff"/><circle cx="39.4" cy="63.6" r="0.6" fill="#ffffff"/><circle cx="51.8" cy="48.0" r="0.6" fill="#e4e4e4"/><circle cx="6.5" cy="41.8" r="0.6" fill="#e4e4e4"/><circle cx="30.6" cy="40.3" r="0.9" fill="#ffffff"/><circle cx="57.1" cy="34.9" r="0.5" fill="#e4e4e4"/><circle cx="37.3" cy="7.4" r="0.6" fill="#ffffff"/><circle cx="63.7" cy="16.2" r="0.5" fill="#e4e4e4"/><circle cx="13.8" cy="31.8" r="0.7" fill="#dadada"/><circle cx="41.3" cy="10.1" r="0.4" fill="#ffffff"/><circle cx="27.0" cy="43.0" r="0.8" fill="#ffffff"/><circle cx="0.8" cy="45.1" r="0.4" fill="#ffffff"/><circle cx="36.6" cy="43.9" r="0.7" fill="#e4e4e4"/><circle cx="51.8" cy="5.0" r="0.5" fill="#ffffff"/><circle cx="16.1" cy="64.0" r="0.5" fill="#e4e4e4"/><circle cx="38.6" cy="37.3" r="0.4" fill="#dadada"/><circle cx="21.7" cy="2.6" r="0.6" fill="#e4e4e4"/></svg><div class="st"><svg width="16" height="16" viewBox="0 0 16 16"><rect x="0" y="0" width="16" height="16" rx="2.5" fill="#fff"/><path d="M8 0.9 L10.23 5.5 L15.1 6.05 L11.5 9.5 L12.4 14.4 L8 12.0 L3.6 14.4 L4.5 9.5 L0.9 6.05 L5.77 5.5 Z" fill="#a99af6" stroke="#333" stroke-width="1.05" stroke-linejoin="round"/></svg></div><div style="position:absolute;left:51px;top:1px;width:12px;height:12px"><svg width="12" height="12" viewBox="0 0 14 14"><path d="M7 1.5 C10.5 1.5 12.5 3.5 12.5 6 C12.5 8 11 8.5 10 8.3 C9 8.1 8.6 9 9.2 10 C9.8 11.2 9 12.5 7 12.5 C3.8 12.5 1.5 10.2 1.5 7 C1.5 3.8 3.8 1.5 7 1.5 Z" fill="#f4e060" stroke="#222" stroke-width="1"/><circle cx="4.5" cy="6" r="1.2" fill="#e02020"/><circle cx="7" cy="4" r="1.1" fill="#2040e0"/><circle cx="10" cy="5" r="1.1" fill="#20a020"/><circle cx="5" cy="9.3" r="1.1" fill="#a020c0"/></svg></div></div><div class="lb" style="left:380.5px;top:550px;color:#7b88ff">Rendering</div><div class="th" style="left:493px;top:485px"><svg width="63" height="63" viewBox="0 0 64 64" preserveAspectRatio="none"><rect x="0.0" y="0" width="8.5" height="64" fill="#88562e"/><rect x="8.0" y="0" width="8.5" height="64" fill="#86552e"/><rect x="16.0" y="0" width="8.5" height="64" fill="#86552e"/><rect x="24.0" y="0" width="8.5" height="64" fill="#905e34"/><rect x="32.0" y="0" width="8.5" height="64" fill="#86552e"/><rect x="40.0" y="0" width="8.5" height="64" fill="#88562e"/><rect x="48.0" y="0" width="8.5" height="64" fill="#86552e"/><rect x="56.0" y="0" width="8.5" height="64" fill="#88562e"/></svg><div class="st"><svg width="16" height="16" viewBox="0 0 16 16"><rect x="0" y="0" width="16" height="16" rx="2.5" fill="#fff"/><path d="M8 0.9 L10.23 5.5 L15.1 6.05 L11.5 9.5 L12.4 14.4 L8 12.0 L3.6 14.4 L4.5 9.5 L0.9 6.05 L5.77 5.5 Z" fill="#a99af6" stroke="#333" stroke-width="1.05" stroke-linejoin="round"/></svg></div></div><div class="lb" style="left:476.5px;top:550px;color:#fff">Rustic Oak</div><div class="th" style="left:589px;top:485px"><svg width="63" height="63" viewBox="0 0 64 64" preserveAspectRatio="none"><rect width="64" height="64" fill="#9a8888"/><rect x="0.8" y="0.8" width="10.4" height="4.4" fill="#7a3430"/><rect x="12.8" y="0.8" width="10.4" height="4.4" fill="#7a3430"/><rect x="24.8" y="0.8" width="10.4" height="4.4" fill="#8a3a30"/><rect x="36.8" y="0.8" width="10.4" height="4.4" fill="#5e4a4a"/><rect x="48.8" y="0.8" width="10.4" height="4.4" fill="#9a4a3a"/><rect x="60.8" y="0.8" width="10.4" height="4.4" fill="#7a3430"/><rect x="-5.2" y="6.8" width="10.4" height="4.4" fill="#a05a50"/><rect x="6.8" y="6.8" width="10.4" height="4.4" fill="#8a3a30"/><rect x="18.8" y="6.8" width="10.4" height="4.4" fill="#a05a50"/><rect x="30.8" y="6.8" width="10.4" height="4.4" fill="#a05a50"/><rect x="42.8" y="6.8" width="10.4" height="4.4" fill="#6a5050"/><rect x="54.8" y="6.8" width="10.4" height="4.4" fill="#8e4038"/><rect x="0.8" y="12.8" width="10.4" height="4.4" fill="#8a3a30"/><rect x="12.8" y="12.8" width="10.4" height="4.4" fill="#7a3430"/><rect x="24.8" y="12.8" width="10.4" height="4.4" fill="#6a5050"/><rect x="36.8" y="12.8" width="10.4" height="4.4" fill="#8a3a30"/><rect x="48.8" y="12.8" width="10.4" height="4.4" fill="#6a5050"/><rect x="60.8" y="12.8" width="10.4" height="4.4" fill="#5e4a4a"/><rect x="-5.2" y="18.8" width="10.4" height="4.4" fill="#7a3430"/><rect x="6.8" y="18.8" width="10.4" height="4.4" fill="#5e4a4a"/><rect x="18.8" y="18.8" width="10.4" height="4.4" fill="#a05a50"/><rect x="30.8" y="18.8" width="10.4" height="4.4" fill="#a05a50"/><rect x="42.8" y="18.8" width="10.4" height="4.4" fill="#9a4a3a"/><rect x="54.8" y="18.8" width="10.4" height="4.4" fill="#a05a50"/><rect x="0.8" y="24.8" width="10.4" height="4.4" fill="#8a3a30"/><rect x="12.8" y="24.8" width="10.4" height="4.4" fill="#5e4a4a"/><rect x="24.8" y="24.8" width="10.4" height="4.4" fill="#8a3a30"/><rect x="36.8" y="24.8" width="10.4" height="4.4" fill="#5e4a4a"/><rect x="48.8" y="24.8" width="10.4" height="4.4" fill="#6a5050"/><rect x="60.8" y="24.8" width="10.4" height="4.4" fill="#6a5050"/><rect x="-5.2" y="30.8" width="10.4" height="4.4" fill="#9a4a3a"/><rect x="6.8" y="30.8" width="10.4" height="4.4" fill="#7a3430"/><rect x="18.8" y="30.8" width="10.4" height="4.4" fill="#7a3430"/><rect x="30.8" y="30.8" width="10.4" height="4.4" fill="#8e4038"/><rect x="42.8" y="30.8" width="10.4" height="4.4" fill="#8a3a30"/><rect x="54.8" y="30.8" width="10.4" height="4.4" fill="#5e4a4a"/><rect x="0.8" y="36.8" width="10.4" height="4.4" fill="#5e4a4a"/><rect x="12.8" y="36.8" width="10.4" height="4.4" fill="#a05a50"/><rect x="24.8" y="36.8" width="10.4" height="4.4" fill="#8e4038"/><rect x="36.8" y="36.8" width="10.4" height="4.4" fill="#5e4a4a"/><rect x="48.8" y="36.8" width="10.4" height="4.4" fill="#8a3a30"/><rect x="60.8" y="36.8" width="10.4" height="4.4" fill="#a05a50"/><rect x="-5.2" y="42.8" width="10.4" height="4.4" fill="#6a5050"/><rect x="6.8" y="42.8" width="10.4" height="4.4" fill="#5e4a4a"/><rect x="18.8" y="42.8" width="10.4" height="4.4" fill="#6a5050"/><rect x="30.8" y="42.8" width="10.4" height="4.4" fill="#6a5050"/><rect x="42.8" y="42.8" width="10.4" height="4.4" fill="#7a3430"/><rect x="54.8" y="42.8" width="10.4" height="4.4" fill="#9a4a3a"/><rect x="0.8" y="48.8" width="10.4" height="4.4" fill="#6a5050"/><rect x="12.8" y="48.8" width="10.4" height="4.4" fill="#8e4038"/><rect x="24.8" y="48.8" width="10.4" height="4.4" fill="#8e4038"/><rect x="36.8" y="48.8" width="10.4" height="4.4" fill="#a05a50"/><rect x="48.8" y="48.8" width="10.4" height="4.4" fill="#5e4a4a"/><rect x="60.8" y="48.8" width="10.4" height="4.4" fill="#7a3430"/><rect x="-5.2" y="54.8" width="10.4" height="4.4" fill="#6a5050"/><rect x="6.8" y="54.8" width="10.4" height="4.4" fill="#8e4038"/><rect x="18.8" y="54.8" width="10.4" height="4.4" fill="#6a5050"/><rect x="30.8" y="54.8" width="10.4" height="4.4" fill="#a05a50"/><rect x="42.8" y="54.8" width="10.4" height="4.4" fill="#a05a50"/><rect x="54.8" y="54.8" width="10.4" height="4.4" fill="#7a3430"/><rect x="0.8" y="60.8" width="10.4" height="4.4" fill="#9a4a3a"/><rect x="12.8" y="60.8" width="10.4" height="4.4" fill="#8a3a30"/><rect x="24.8" y="60.8" width="10.4" height="4.4" fill="#6a5050"/><rect x="36.8" y="60.8" width="10.4" height="4.4" fill="#5e4a4a"/><rect x="48.8" y="60.8" width="10.4" height="4.4" fill="#8a3a30"/><rect x="60.8" y="60.8" width="10.4" height="4.4" fill="#9a4a3a"/></svg><div class="st"><svg width="16" height="16" viewBox="0 0 16 16"><rect x="0" y="0" width="16" height="16" rx="2.5" fill="#fff"/><path d="M8 0.9 L10.23 5.5 L15.1 6.05 L11.5 9.5 L12.4 14.4 L8 12.0 L3.6 14.4 L4.5 9.5 L0.9 6.05 L5.77 5.5 Z" fill="#a99af6" stroke="#333" stroke-width="1.05" stroke-linejoin="round"/></svg></div></div><div class="lb" style="left:572.5px;top:550px;color:#7b88ff">Rød-01</div><div class="th" style="left:685px;top:485px"><svg width="63" height="63" viewBox="0 0 64 64" preserveAspectRatio="none"><rect width="64" height="64" fill="#a09a94"/><rect x="0.8" y="-1.2" width="28.4" height="10.9" fill="#92342c"/><rect x="30.8" y="-1.2" width="28.4" height="10.9" fill="#8a2c26"/><rect x="60.8" y="-1.2" width="28.4" height="10.9" fill="#8a2c26"/><rect x="-14.2" y="11.3" width="28.4" height="10.9" fill="#6e2a26"/><rect x="15.8" y="11.3" width="28.4" height="10.9" fill="#92342c"/><rect x="45.8" y="11.3" width="28.4" height="10.9" fill="#80302a"/><rect x="0.8" y="23.8" width="28.4" height="10.9" fill="#80302a"/><rect x="30.8" y="23.8" width="28.4" height="10.9" fill="#6e2a26"/><rect x="60.8" y="23.8" width="28.4" height="10.9" fill="#92342c"/><rect x="-14.2" y="36.3" width="28.4" height="10.9" fill="#7a2824"/><rect x="15.8" y="36.3" width="28.4" height="10.9" fill="#7a2824"/><rect x="45.8" y="36.3" width="28.4" height="10.9" fill="#92342c"/><rect x="0.8" y="48.8" width="28.4" height="10.9" fill="#80302a"/><rect x="30.8" y="48.8" width="28.4" height="10.9" fill="#8a2c26"/><rect x="60.8" y="48.8" width="28.4" height="10.9" fill="#7a2824"/><rect x="-14.2" y="61.3" width="28.4" height="10.9" fill="#6e2a26"/><rect x="15.8" y="61.3" width="28.4" height="10.9" fill="#80302a"/><rect x="45.8" y="61.3" width="28.4" height="10.9" fill="#8a2c26"/></svg><div class="st"><svg width="16" height="16" viewBox="0 0 16 16"><rect x="0" y="0" width="16" height="16" rx="2.5" fill="#fff"/><path d="M8 0.9 L10.23 5.5 L15.1 6.05 L11.5 9.5 L12.4 14.4 L8 12.0 L3.6 14.4 L4.5 9.5 L0.9 6.05 L5.77 5.5 Z" fill="#a99af6" stroke="#333" stroke-width="1.05" stroke-linejoin="round"/></svg></div></div><div class="lb" style="left:668.5px;top:550px;color:#7b88ff">Rød-02</div><div class="th" style="left:781px;top:485px"><svg width="63" height="63" viewBox="0 0 64 64" preserveAspectRatio="none"><rect x="0.0" y="0" width="16.5" height="64" fill="#cab28c"/><rect x="16.0" y="0" width="16.5" height="64" fill="#c8b08a"/><rect x="32.0" y="0" width="16.5" height="64" fill="#c8b08a"/><rect x="48.0" y="0" width="16.5" height="64" fill="#c8b08a"/></svg><div class="st"><svg width="16" height="16" viewBox="0 0 16 16"><rect x="0" y="0" width="16" height="16" rx="2.5" fill="#fff"/><path d="M8 0.9 L10.23 5.5 L15.1 6.05 L11.5 9.5 L12.4 14.4 L8 12.0 L3.6 14.4 L4.5 9.5 L0.9 6.05 L5.77 5.5 Z" fill="#a99af6" stroke="#333" stroke-width="1.05" stroke-linejoin="round"/></svg></div></div><div class="lb" style="left:764.5px;top:550px;color:#7b88ff">Satinert eik-02</div><div class="th" style="left:877px;top:485px"><svg width="63" height="63" viewBox="0 0 64 64" preserveAspectRatio="none"><rect width="64" height="64" fill="#a09890"/><rect x="0.8" y="-2.2" width="22.4" height="9.4" fill="#b4988a"/><rect x="24.8" y="-2.2" width="22.4" height="9.4" fill="#c4a88e"/><rect x="48.8" y="-2.2" width="22.4" height="9.4" fill="#b89c88"/><rect x="-11.2" y="8.8" width="22.4" height="9.4" fill="#c8ac94"/><rect x="12.8" y="8.8" width="22.4" height="9.4" fill="#b4988a"/><rect x="36.8" y="8.8" width="22.4" height="9.4" fill="#c4a88e"/><rect x="60.8" y="8.8" width="22.4" height="9.4" fill="#c8ac94"/><rect x="0.8" y="19.8" width="22.4" height="9.4" fill="#c4a88e"/><rect x="24.8" y="19.8" width="22.4" height="9.4" fill="#c8ac94"/><rect x="48.8" y="19.8" width="22.4" height="9.4" fill="#bea48a"/><rect x="-11.2" y="30.8" width="22.4" height="9.4" fill="#b4988a"/><rect x="12.8" y="30.8" width="22.4" height="9.4" fill="#c4a88e"/><rect x="36.8" y="30.8" width="22.4" height="9.4" fill="#bea48a"/><rect x="60.8" y="30.8" width="22.4" height="9.4" fill="#c4a88e"/><rect x="0.8" y="41.8" width="22.4" height="9.4" fill="#bea48a"/><rect x="24.8" y="41.8" width="22.4" height="9.4" fill="#b89c88"/><rect x="48.8" y="41.8" width="22.4" height="9.4" fill="#bea48a"/><rect x="-11.2" y="52.8" width="22.4" height="9.4" fill="#bea48a"/><rect x="12.8" y="52.8" width="22.4" height="9.4" fill="#c8ac94"/><rect x="36.8" y="52.8" width="22.4" height="9.4" fill="#b89c88"/><rect x="60.8" y="52.8" width="22.4" height="9.4" fill="#bea48a"/><rect x="0.8" y="63.8" width="22.4" height="9.4" fill="#c8ac94"/><rect x="24.8" y="63.8" width="22.4" height="9.4" fill="#bea48a"/><rect x="48.8" y="63.8" width="22.4" height="9.4" fill="#b4988a"/></svg><div class="st"><svg width="16" height="16" viewBox="0 0 16 16"><rect x="0" y="0" width="16" height="16" rx="2.5" fill="#fff"/><path d="M8 0.9 L10.23 5.5 L15.1 6.05 L11.5 9.5 L12.4 14.4 L8 12.0 L3.6 14.4 L4.5 9.5 L0.9 6.05 L5.77 5.5 Z" fill="#a99af6" stroke="#333" stroke-width="1.05" stroke-linejoin="round"/></svg></div></div><div class="lb" style="left:860.5px;top:550px;color:#7b88ff">Terracotta</div><div class="th" style="left:301px;top:581px"><svg width="63" height="63" viewBox="0 0 64 64" preserveAspectRatio="none"><defs><radialGradient id="us" cx="0.5" cy="0.45" r="0.6"><stop offset="0" stop-color="#c8c8c8"/><stop offset="1" stop-color="#a8a8a8"/></radialGradient></defs>
<rect width="64" height="64" fill="url(#us)"/>
<g stroke="#8e8e8e" stroke-width="0.7"><path d="M0 11.5 H64 M0 22.5 H64 M0 33.5 H64 M0 44.5 H64 M0 55.5 H64 M5.5 0 V64 M16 0 V64 M26.5 0 V64 M37 0 V64 M47.5 0 V64 M58 0 V64"/></g>
<g stroke="#d0d0d0" stroke-width="0.8" opacity="0.7"><path d="M0 48 H64 M0 51 H64"/></g></svg><div class="st"><svg width="16" height="16" viewBox="0 0 16 16"><rect x="0" y="0" width="16" height="16" rx="2.5" fill="#fff"/><path d="M8 0.9 L10.23 5.5 L15.1 6.05 L11.5 9.5 L12.4 14.4 L8 12.0 L3.6 14.4 L4.5 9.5 L0.9 6.05 L5.77 5.5 Z" fill="#a99af6" stroke="#333" stroke-width="1.05" stroke-linejoin="round"/></svg></div></div><div class="lb" style="left:284.5px;top:646px;color:#7b88ff">Usynlig-01</div><div class="th" style="left:397px;top:581px"><svg width="58" height="63" viewBox="0 0 58 64" preserveAspectRatio="none"><rect width="58" height="64" fill="#d6bea0"/><rect x="2.2" y="0" width="3.6" height="64" fill="#e2cbb0" opacity="0.6"/><rect x="1.0" y="0" width="1.1" height="64" fill="#3a3028"/><rect x="8.5" y="0" width="3.6" height="64" fill="#e2cbb0" opacity="0.6"/><rect x="7.3" y="0" width="1.1" height="64" fill="#3a3028"/><rect x="14.8" y="0" width="3.6" height="64" fill="#e2cbb0" opacity="0.6"/><rect x="13.6" y="0" width="1.1" height="64" fill="#3a3028"/><rect x="21.1" y="0" width="3.6" height="64" fill="#e2cbb0" opacity="0.6"/><rect x="19.9" y="0" width="1.1" height="64" fill="#3a3028"/><rect x="27.4" y="0" width="3.6" height="64" fill="#e2cbb0" opacity="0.6"/><rect x="26.2" y="0" width="1.1" height="64" fill="#3a3028"/><rect x="33.7" y="0" width="3.6" height="64" fill="#e2cbb0" opacity="0.6"/><rect x="32.5" y="0" width="1.1" height="64" fill="#3a3028"/><rect x="40.0" y="0" width="3.6" height="64" fill="#e2cbb0" opacity="0.6"/><rect x="38.8" y="0" width="1.1" height="64" fill="#3a3028"/><rect x="46.3" y="0" width="3.6" height="64" fill="#e2cbb0" opacity="0.6"/><rect x="45.1" y="0" width="1.1" height="64" fill="#3a3028"/><rect x="52.6" y="0" width="3.6" height="64" fill="#e2cbb0" opacity="0.6"/><rect x="51.4" y="0" width="1.1" height="64" fill="#3a3028"/><rect x="58.9" y="0" width="3.6" height="64" fill="#e2cbb0" opacity="0.6"/><rect x="57.7" y="0" width="1.1" height="64" fill="#3a3028"/></svg><div class="st"><svg width="16" height="16" viewBox="0 0 16 16"><rect x="0" y="0" width="16" height="16" rx="2.5" fill="#fff"/><path d="M8 0.9 L10.23 5.5 L15.1 6.05 L11.5 9.5 L12.4 14.4 L8 12.0 L3.6 14.4 L4.5 9.5 L0.9 6.05 L5.77 5.5 Z" fill="#a99af6" stroke="#333" stroke-width="1.05" stroke-linejoin="round"/></svg></div></div><div class="lb" style="left:380.5px;top:646px;color:#7b88ff">Vertikal-06</div><div class="th" style="left:493px;top:581px"><svg width="63" height="63" viewBox="0 0 64 64" preserveAspectRatio="none"><rect width="64" height="64" fill="#000"/>
<g stroke="#d8d8d8" stroke-width="0.8" fill="none"><path d="M20 8 Q30 2 44 4 Q52 2 62 3"/><path d="M44 34 Q54 28 62 32 Q58 40 50 38"/></g>
<g fill="#f4f4f4" font-family="Liberation Sans" font-weight="bold">
<text x="1" y="31" font-size="17" textLength="62" lengthAdjust="spacingAndGlyphs" transform="rotate(-10 32 24)">KITCHEN</text>
<text x="0" y="63" font-size="17" textLength="64" lengthAdjust="spacingAndGlyphs">HOME</text>
</g>
<g fill="#e0e0e0" font-family="Liberation Serif" font-style="italic" font-size="6"><text x="1" y="45">is the</text><text x="40" y="45">of the</text></g>
<path d="M25 40 Q21 33 26 32.5 Q30 32 32 36 Q34 32 38 32.5 Q43 33 39 40 L32 49 Z" stroke="#f0f0f0" stroke-width="1.2" fill="none"/>
<path d="M0 47 H64" stroke="#cfcfcf" stroke-width="0.6"/></svg><div class="st"><svg width="16" height="16" viewBox="0 0 16 16"><rect x="0" y="0" width="16" height="16" rx="2.5" fill="#fff"/><path d="M8 0.9 L10.23 5.5 L15.1 6.05 L11.5 9.5 L12.4 14.4 L8 12.0 L3.6 14.4 L4.5 9.5 L0.9 6.05 L5.77 5.5 Z" fill="#a99af6" stroke="#333" stroke-width="1.05" stroke-linejoin="round"/></svg></div><div style="position:absolute;left:51px;top:1px;width:12px;height:12px"><svg width="12" height="12" viewBox="0 0 14 14"><path d="M7 1.5 C10.5 1.5 12.5 3.5 12.5 6 C12.5 8 11 8.5 10 8.3 C9 8.1 8.6 9 9.2 10 C9.8 11.2 9 12.5 7 12.5 C3.8 12.5 1.5 10.2 1.5 7 C1.5 3.8 3.8 1.5 7 1.5 Z" fill="#f4e060" stroke="#222" stroke-width="1"/><circle cx="4.5" cy="6" r="1.2" fill="#e02020"/><circle cx="7" cy="4" r="1.1" fill="#2040e0"/><circle cx="10" cy="5" r="1.1" fill="#20a020"/><circle cx="5" cy="9.3" r="1.1" fill="#a020c0"/></svg></div></div><div class="lb" style="left:476.5px;top:646px;color:#7b88ff">Wallpaper_09</div><div class="th" style="left:589px;top:581px"><svg width="63" height="63" viewBox="0 0 64 64" preserveAspectRatio="none"><filter id="zbb"><feGaussianBlur stdDeviation="1.2"/></filter>
<rect width="64" height="64" fill="#c8a8e0"/>
<g filter="url(#zbb)">
<rect x="0" y="0" width="18" height="64" fill="#c09ee0"/>
<rect x="18" y="0" width="12" height="64" fill="#78c8f0"/>
<rect x="30" y="0" width="8" height="64" fill="#d8a0d8"/>
<rect x="38" y="0" width="10" height="64" fill="#80c8f0"/>
<rect x="48" y="0" width="16" height="64" fill="#d0a8e0"/>
<g fill="#e8e8f4" opacity="0.55"><ellipse cx="24" cy="32" rx="12" ry="8"/><ellipse cx="46" cy="34" rx="12" ry="8"/><rect x="14" y="38" width="4" height="14"/><rect x="28" y="38" width="4" height="14"/><rect x="38" y="40" width="4" height="12"/><rect x="52" y="40" width="4" height="12"/></g>
<g fill="#f0f0f8" opacity="0.6"><polygon points="2,54 12,50 14,56 4,60"/><polygon points="24,52 30,50 32,58 26,60"/><polygon points="48,52 58,50 60,56 50,58"/></g>
</g></svg><div class="st"><svg width="16" height="16" viewBox="0 0 16 16"><rect x="0" y="0" width="16" height="16" rx="2.5" fill="#fff"/><path d="M8 0.9 L10.23 5.5 L15.1 6.05 L11.5 9.5 L12.4 14.4 L8 12.0 L3.6 14.4 L4.5 9.5 L0.9 6.05 L5.77 5.5 Z" fill="#a99af6" stroke="#333" stroke-width="1.05" stroke-linejoin="round"/></svg></div></div><div class="lb" style="left:572.5px;top:646px;color:#7b88ff">Zebra</div>
    </div>
  </div>
  <div class="a" style="left:1039px;top:99px;width:17px;height:614px;background:#efefef"></div>
  <div class="a" style="left:1039px;top:714px;width:17px;height:17px;background:#efefef"></div>
  <div class="a" style="left:1046px;top:115px;width:3px;height:598px;background:#888"></div>

  <div class="tt" style="left:285px;top:733px;font-size:11px;letter-spacing:0.1px">Ctrl+S: Søk etter streng, Ctrl+N: Søk etter neste forekomst av strengen, I: Sett søkefarge</div>

  <div class="btn" style="left:838px;top:757px;width:67px;background:#1a6bff;color:#fff;border:1px solid #1a6bff"><u>O</u>K</div>
  <div class="btn" style="left:912px;top:757px;width:67px;background:#fff;color:#1a6bff;border:1px solid #1a6bff">Avbryt</div>
  <div class="btn" style="left:985px;top:758px;width:67px;background:#fff;color:#1a6bff;border:1px solid #1a6bff"><u>H</u>jelp</div>
</div>
</body></html>
